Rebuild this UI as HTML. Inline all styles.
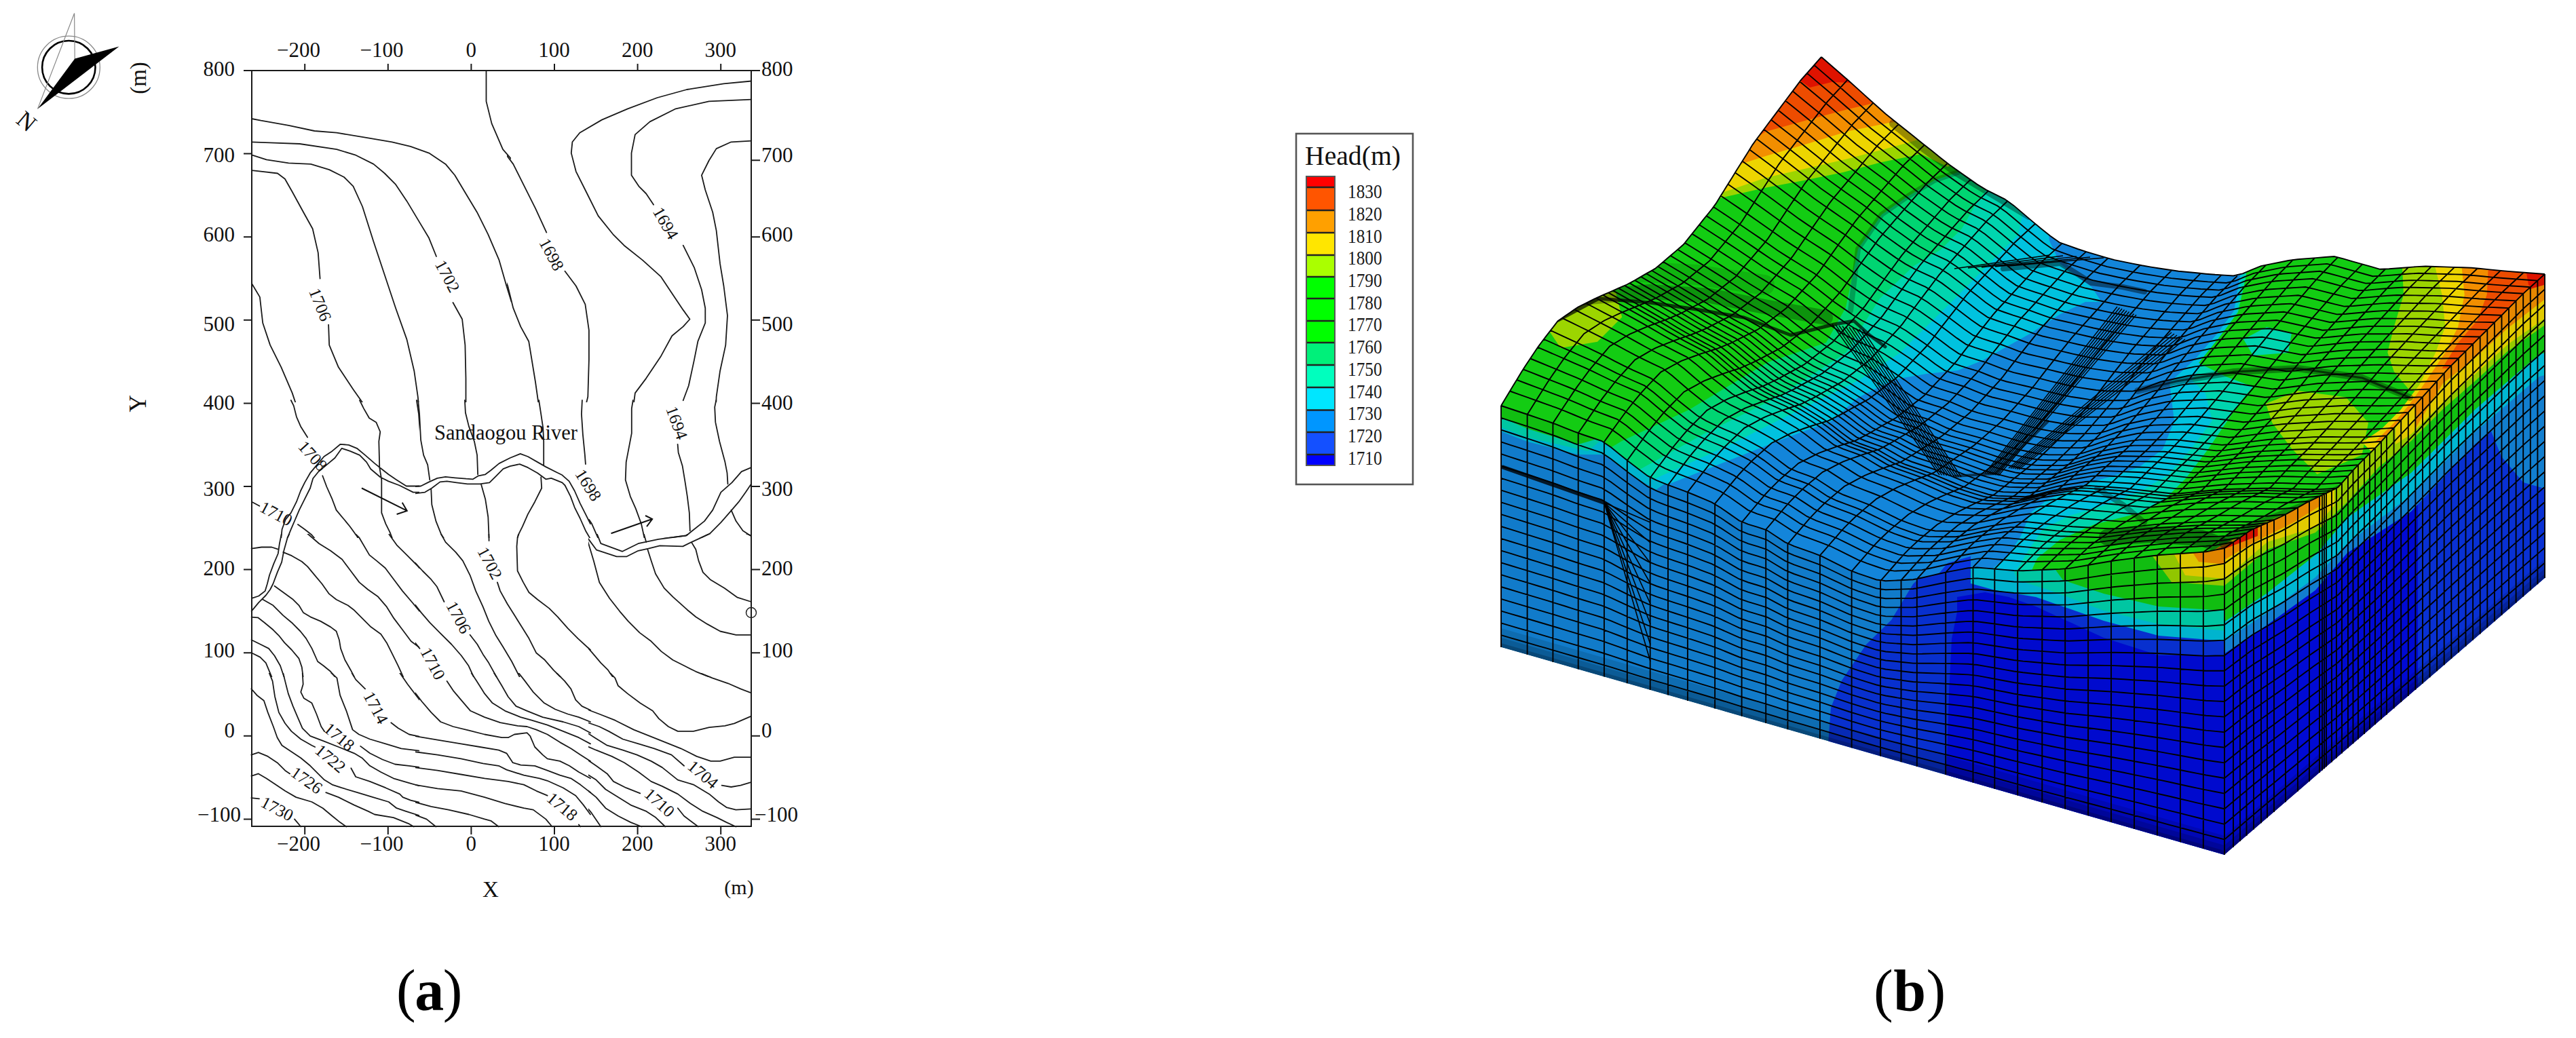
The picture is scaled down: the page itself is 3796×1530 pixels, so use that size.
<!DOCTYPE html>
<html><head><meta charset="utf-8"><style>
html,body{margin:0;padding:0;background:#fff;}
svg{display:block;}
</style></head><body>
<svg width="3796" height="1530" viewBox="0 0 3796 1530">
<rect width="3796" height="1530" fill="#fff"/>
<defs><clipPath id="c0"><rect x="357" y="92" width="396" height="501"/></clipPath><clipPath id="c1"><rect x="747" y="92" width="396" height="501"/></clipPath><clipPath id="c2"><rect x="357" y="587" width="261" height="206"/></clipPath><clipPath id="c3"><rect x="612" y="587" width="261" height="206"/></clipPath><clipPath id="c4"><rect x="867" y="587" width="276" height="206"/></clipPath><clipPath id="c5"><rect x="357" y="787" width="261" height="211"/></clipPath><clipPath id="c6"><rect x="612" y="787" width="261" height="211"/></clipPath><clipPath id="c7"><rect x="867" y="787" width="276" height="211"/></clipPath><clipPath id="c8"><rect x="357" y="992" width="261" height="241"/></clipPath><clipPath id="c9"><rect x="612" y="992" width="261" height="241"/></clipPath><clipPath id="c10"><rect x="867" y="992" width="276" height="241"/></clipPath></defs>
<g fill="none" stroke="#1a1a1a" stroke-width="1.8" stroke-linejoin="round" stroke-linecap="round">
<path clip-path="url(#c0)" d="M370.9 175 L384.5 177.7 L425.3 184.8 L463.4 193 L496.1 195.7 L539.6 202.8 L577.7 209.3 L604.9 215.8 L632.1 225.6 L656.6 241.9 L670.2 258.3 L686.5 285.5 L702.9 312.7 L719.2 345.3 L735.5 383.4 L746.4 421.5 L760 465.1 M370.9 209.3 L398.1 210.4 L441.6 212 L496.1 220.2 L523.3 228.3 L550.5 241.9 L566.8 255.5 L583.1 271.9 L599.5 296.4 L615.8 323.6 L632.1 350.8 L643 378 M667.5 446 L681.1 470.5 L685.4 508.6 L686.5 557.6 L686.5 606.6 L697.4 639.2 L702.9 659.9 M370.9 228.3 L392.7 235.4 L425.3 240.3 L458 241.9 L485.2 250.1 L506.9 261 L520.5 274.6 L534.1 304.5 L550.5 356.2 L566.8 405.2 L583.1 454.2 L599.5 500.4 L610.3 546.7 L615.8 584.8 L621.2 639.2 L623.9 659.9 M370.9 251.2 L409 255.5 L419.9 263.7 L430.7 282.8 L447.1 312.7 L460.7 337.2 L468.8 372.6 L471.6 410.6 M484.1 478.7 L485.2 508.6 L498.8 541.3 L520.5 573.9 L539.6 601.1 L555.9 622.9 L558.6 644.7 L558.6 659.9 M370.9 417.7 L382.9 437.9 L387.2 476 L398.1 508.6 L414.4 541.3 L430.7 579.4 L441.6 612 L455.2 644.7 L463.4 659.9 M716.5 104.8 L716.5 149.4 L724.6 182.1 L741 220.2 L760 241.9"/>
<path clip-path="url(#c1)" d="M740 220.2 L756.3 241.9 L772.7 274.6 L789 307.2 L805.3 342.6 M832.5 399.8 L848.8 421.5 L862.4 448.7 L867.9 486.8 L867.9 530.4 L866.3 584.8 L859.7 612 L857 659.9 M740 399.8 L748.2 421.5 L756.3 454.2 L767.2 481.4 L779.2 503.2 L789 563 L794.4 601.1 L798.2 639.2 L799.9 659.9 M1107.3 119.5 L1066.5 123.3 L1012.1 132 L968.6 144 L925 160.3 L886.9 176.6 L854.3 195.7 L843.4 209.3 L841.8 225.6 L848.8 252.8 L865.2 285.5 L881.5 318.1 L903.3 345.3 L919.6 361.7 L946.8 383.4 L974 407.9 L990.3 432.4 L1006.7 456.9 L1016.5 470.5 L1006.7 481.4 L990.3 495 L974 524.9 L952.2 557.6 L935.9 579.4 L931.6 612 L927.8 659.9 M1107.3 146.7 L1044.8 149.4 L995.8 160.3 L957.7 179.4 L935.9 198.4 L930.5 225.6 L930.5 258.3 L941.4 274.6 L952.2 285.5 L963.1 301.8 M1006.7 361.7 L1023 394.3 L1033.9 427 L1039.3 454.2 L1039.3 476 L1028.4 503.2 L1023 530.4 L1014.8 568.5 L1006.7 590.2 M1107.3 207.7 L1077.4 209.3 L1055.6 219.1 L1044.8 236.5 L1033.9 258.3 L1039.3 280 L1050.2 312.7 L1055.6 339.9 L1061.1 388.9 L1066.5 421.5 L1072 465.1 L1069.3 508.6 L1061.1 546.7 L1055.6 584.8 L1054.6 612 L1061.1 659.9"/>
<path clip-path="url(#c2)" d="M413.6 800 L415.6 780.2 L420.7 766 L428.8 755.9 L436.9 739.7 L443 723.5 L449 711.4 L457.1 697.2 L467.2 685.1 L477.4 673 L489.5 664.9 L501.6 654.8 L513.8 655.8 L525.9 660.8 L538.1 670.9 L552.2 683.1 L562.3 691.2 L572.5 699.3 L584.6 707.4 L598.8 716.5 L620 716.5 M420.7 800 L428.8 780.2 L434.9 766 L440.9 751.9 L449 735.7 L457.1 719.5 L461.2 705.3 L469.3 695.2 L481.4 685.1 L493.5 675 L503.7 660.8 L515.8 664.9 L530 670.9 L540.1 681.1 L546.2 691.2 L560.3 703.3 L572.5 709.4 L588.7 715.5 L608.9 725.6 L620 725.6 M428.8 590 L432.8 598.1 L436.9 614.3 L443 628.4 L453.1 644.6 M475.3 701.3 L481.4 717.5 L489.5 735.7 L495.6 751.9 L505.7 764 L515.8 776.2 L525.9 790.3 L532 800 M371.1 739.7 L382.3 745.8 M438.9 773.1 L449 780.2 L459.2 788.3 L469.3 800 M530 590 L536 602.1 L544.1 616.3 L554.3 622.4 L560.3 636.5 L558.3 650.7 L559.3 689.2 L562.3 707.4 L562.3 755.9 L568.4 772.1 L574.5 784.3 L580.6 800 M613.9 590 L617 610.2 L620 650.7"/>
<path clip-path="url(#c3)" d="M610 717.1 L620.1 716.5 L632.3 710.4 L644.4 704.9 L656.5 702.9 L670.7 704.3 L686.9 705.7 L697 706.3 L705.1 701.3 L715.2 699.3 L723.3 693.2 L735.5 683.1 L751.6 675 L766.8 668.9 L777.9 673 L792.1 681.1 L804.3 688.1 L820.4 696.2 L828.5 700.3 L838.7 709.4 L846.7 723.5 L854.8 741.8 L862.9 757.9 L870 772.1 M610 727.6 L626.2 725.6 L636.3 719.5 L648.4 710.4 L658.6 709.4 L672.7 711.4 L688.9 713.4 L707.1 713.4 L721.3 711.4 L731.4 701.3 L741.5 691.2 L751.6 687.1 L765.8 684.1 L777.9 689.2 L792.1 697.2 L804.3 706.3 L812.3 704.9 L828.5 711.4 L832.6 715.5 L840.7 731.6 L846.7 747.8 L854.8 764 L862.9 782.2 L870 794.4 M616.1 590 L618.1 610.2 L620.1 648.7 L624.2 670.9 L630.2 685.1 L633.3 707.4 M635.3 721.5 L636.3 743.8 L642.4 768.1 L650.5 788.3 L658.6 800 M684.9 590 L685.9 608.2 L690.9 628.4 L699 650.7 L703.1 670.9 L704.1 699.3 M709.2 714.4 L715.2 735.7 L719.3 762 L720.9 800 M794.1 590 L797.2 610.2 L800.2 630.5 L801.2 650.7 L801.2 685.1 M797.2 703.3 L798.2 719.5 L788.1 739.7 L777.9 757.9 L769.9 776.2 L763.8 788.3 L760.7 800 M857.9 590 L856.9 610.2 L858.9 640.6 L861.9 670.9 L862.9 684.1"/>
<path clip-path="url(#c4)" d="M932.8 590 L930.8 602.1 L930.8 638.6 L922.7 681.1 L921.7 707.4 L928.8 731.6 L936.9 749.9 L945 772.1 L951.1 800 M998.6 654.8 L999.6 666.9 L1005.7 687.1 L1009.7 711.4 L1012.8 731.6 L1015.8 755.9 L1016.8 782.2 M1055.3 590 L1053.2 600.1 L1054.3 622.4 L1060.3 650.7 L1068.4 681.1 L1071.5 697.2 L1072.5 713.4 M1077.5 751.9 L1084.6 768.1 L1094.7 782.2 L1106.9 790.3 M868.1 766 L872.1 772.1 L884.3 800 M951.1 798.4 L973.3 794.4 L1011.8 789.3 L1017.8 784.3 L1038.1 768.1 L1050.2 751.9 L1062.3 725.6 L1078.5 711.4 L1092.7 695.2 L1106.9 689.2 M1017.8 800 L1046.2 786.3 L1062.3 770.1 L1076.5 753.9 L1088.7 739.7 L1098.8 725.6 L1106.9 713.4"/>
<path clip-path="url(#c5)" d="M416.2 780 L411.9 801.2 L409.8 816 L403.4 830.9 L397.1 847.8 L393.9 860.5 L390.7 871.1 L381.2 878.5 L371.7 881.7 M429.9 780 L423.6 792.7 L418.3 811.8 L415.1 828.7 L408.7 843.6 L402.4 860.5 L398.1 869 L391.8 877.5 L381.2 888.1 L370.6 900.8 M370.6 808.6 L385.4 806.5 L400.3 806.5 L409.8 809.7 M417.2 813.9 L429.9 819.2 L444.8 827.7 L453.2 835.1 L463.8 847.8 L474.4 860.5 L485 875.4 L495.6 883.8 L512.6 892.3 L521.1 898.7 L533.8 911.4 L546.5 924.1 L561.3 934.7 L569.8 947.4 L578.3 964.4 L586.7 981.3 L595.2 1000 M404.5 863.7 L432 883.8 L440.5 892.3 L446.9 902.9 L457.5 909.3 L472.3 915.6 L487.1 924.1 L495.6 930.5 L499.9 943.2 L502 955.9 L508.3 972.8 L516.8 987.7 L523.2 1000 M387.5 883.8 L402.4 892.3 L417.2 907.1 L429.9 917.7 L442.6 930.5 L451.1 941.1 L459.6 955.9 L468.1 975 L476.6 981.3 L487.1 989.8 L495.6 1000 M370.6 909.7 L380.1 910.3 L389.7 917.7 L402.4 928.3 L410.9 936.8 L419.3 947.4 L429.9 958 L440.5 970.7 L444.8 983.4 L446.9 1000 M370.6 943.2 L383.3 949.5 L396 955.9 L404.5 966.5 L413 981.3 L419.3 1000 M370.6 962.2 L383.3 968.6 L391.8 977.1 L397.1 989.8 L401.3 1000 M444.8 780 L455.4 788.5 L470.2 801.2 L487.1 811.8 L504.1 824.5 L516.8 841.5 L529.5 858.4 L542.2 869 L557.1 879.6 L569.8 894.4 L580.4 911.4 L593.1 928.3 L605.8 945.3 L620 955.9 M516.8 780 L529.5 792.7 L544.4 818.1 L555 826.6 L567.7 837.2 L580.4 854.2 L593.1 871.1 L605.8 886 L620 902.9 M569.8 780 L574 788.5 L584.6 803.3 L599.5 818.1 L614.3 833 L620 839.3"/>
<path clip-path="url(#c6)" d="M610 827.7 L622.7 841.5 L635.4 854.2 L643.9 864.8 L654.5 887 M692.6 935.8 L703.2 949.5 L711.7 964.4 L720.2 977.1 L732.9 1000 M610 889.1 L620.6 902.9 L633.3 917.7 L648.1 932.6 L665.1 949.5 L679.9 966.5 L690.5 981.3 L699 1000 M610 945.3 L618.5 955.9 M646 780 L656.6 799.1 L671.5 813.9 L682 826.6 L692.6 847.8 L701.1 871.1 L711.7 894.4 L720.2 915.6 L730.8 936.8 L741.4 953.8 L754.1 975 L766.8 1000 M720.2 780 L720.6 797 M732.9 858.4 L737.1 871.1 L747.7 890.2 L758.3 907.1 L768.9 924.1 L779.5 941.1 L790.1 962.2 L802.8 972.8 L815.6 987.7 L828.3 1000 M766.8 780 L762.6 792.7 L761.5 805.4 L762.6 841.5 L771.1 858.4 L779.5 873.2 L792.2 883.8 L809.2 896.6 L821.9 909.3 L836.7 926.2 L851.6 941.1 L870 958"/>
<path clip-path="url(#c7)" d="M877 780 L885.4 801.2 L917.2 812.8 L940.5 801.2 L970.2 794.8 L1010.5 789.5 L1021.1 782.1 L1027.4 780 M864.2 790.6 L879.1 810.7 L908.7 820.3 L923.6 820.3 L940.5 811.8 L955.4 808.6 L972.3 804.4 L1006.2 805.4 L1018.9 799.1 L1046.5 786.4 L1052.8 780 M862.1 784.2 L868.5 805.4 L874.8 826.6 L883.3 858.4 L898.1 881.7 L913 900.8 L925.7 915.6 L942.6 932.6 L959.6 945.3 L974.4 960.1 L991.4 972.8 L1008.3 981.3 L1025.3 989.8 L1050.7 1000 M946.9 780 L952.2 799.1 M954.3 809.7 L959.6 826.6 L966 845.7 L978.7 866.9 L991.4 879.6 L1012.6 898.7 L1025.3 909.3 L1042.2 919.9 L1061.3 930.5 L1084.6 935.8 L1106.9 935.8 M1018.9 799.1 L1025.3 809.7 L1029.5 826.6 L1035.9 843.6 L1046.5 854.2 L1067.7 866.9 L1086.7 880.7 L1106.9 887 M860 947.4 L872.7 962.2 L885.4 977.1 L896 987.7 L904.5 1000 M1093.1 780 L1099.5 786.4 L1106.9 789.5"/>
<path clip-path="url(#c8)" d="M370.4 1015.4 L378.5 1024.7 L388.9 1032.8 L394.7 1050.1 L402.8 1071 L408.6 1087.2 L415.5 1098.7 L429.4 1108 L443.3 1117.2 L457.2 1128.8 L468.7 1140.4 L478 1149.6 L489.5 1156.6 L503.4 1161.2 L526.6 1168.1 L549.7 1175.1 L572.8 1182 L584.4 1191.2 L598.3 1195.9 L620 1202.8 M370.4 1112.6 L380.8 1109.1 L394.7 1114.9 L408.6 1124.2 L420.1 1135.7 L427.1 1140.4 M480.3 1168.1 L498.8 1175.1 L521.9 1186.6 L542.7 1195.9 L552 1200.5 L579.8 1205.1 L602.9 1214.4 L609.8 1218.5 M370.4 1143.8 L380.8 1140.4 L392.4 1147.3 L406.3 1156.6 L420.1 1165.8 L436.3 1175.1 L459.5 1182 L475.7 1191.2 L489.5 1202.8 L501.1 1212.1 L510.4 1218.5 M370.4 1176.2 L382 1177.4 M434 1207.4 L443.3 1218.5 M395.9 990 L401.6 1003.9 L405.1 1027 L410.9 1050.1 L420.1 1066.3 L429.4 1077.9 L443.3 1089.5 L459.5 1098.7 L464.1 1101 M517.3 1132.3 L524.2 1145 L545.1 1151.9 L568.2 1161.2 L589 1170.4 L593.6 1175.1 L605.2 1179.7 L620 1183.2 M416.7 990 L420.1 1003.9 L424.8 1022.4 L431.7 1040.9 L438.6 1057.1 L445.6 1073.3 L457.2 1084.8 L475.7 1091.8 L498.8 1101 L521.9 1110.3 L533.5 1117.2 L545.1 1128.8 L561.2 1138 L579.8 1147.3 L602.9 1154.2 L620 1158.9 M445.6 990 L446.7 1008.5 L443.3 1020.1 L447.9 1029.3 L459.5 1036.3 L466.4 1052.5 L473.3 1071 L478 1077.9 M531.2 1099.9 L545.1 1110.3 L563.6 1119.5 L582.1 1126.5 L602.9 1128.8 L620 1131.1 M486.1 990 L496.5 999.3 L501.1 1024.7 L510.4 1047.8 L519.6 1075.6 L528.9 1082.5 L545.1 1089.5 L568.2 1096.4 L591.3 1103.3 L620 1106.8 M517.3 990 L524.2 1001.6 L538.1 1015.4 M576.3 1065.2 L586.7 1073.3 L602.9 1082.5 L620 1086 M587.9 990 L600.6 1008.5 L620 1034"/>
<path clip-path="url(#c9)" d="M610 1018.9 L621.6 1034 L635.4 1050.1 L649.3 1064 L667.8 1071 L691 1076.7 L714.1 1082.5 L739.5 1087.2 L748.8 1087.2 L758 1082.5 L776.6 1080.2 L781.2 1084.8 L788.1 1101 L799.7 1112.6 L806.6 1118.4 L825.1 1121.9 L839 1128.8 L852.9 1138 L870 1147.3 M610 1084.8 L644.7 1090.6 L679.4 1096.4 L707.2 1101 L734.9 1105.7 L746.5 1110.3 L755.7 1124.2 L767.3 1127.6 L788.1 1128.8 L806.6 1135.7 L825.1 1142.7 L841.3 1147.3 L855.2 1156.6 L870 1168.1 M610 1108 L644.7 1112.6 L679.4 1118.4 L711.8 1125.3 L734.9 1128.8 L746.5 1134.6 L771.9 1142.7 L795.1 1147.3 L806.6 1150.8 L829.8 1161.2 L848.3 1172.7 L859.8 1186.6 L870 1200.5 M610 1131.1 L644.7 1135.7 L679.4 1141.5 L714.1 1147.3 L748.8 1151.9 L771.9 1156.6 L790.4 1165.8 L806.6 1172.7 M852.9 1215.5 L855.2 1218.5 M610 1156.6 L644.7 1162.3 L679.4 1165.8 L714.1 1175.1 L744.2 1184.3 L771.9 1191.2 L785.8 1193.6 L804.3 1207.4 L813.6 1218.5 M610 1182 L635.4 1188.9 L660.9 1193.6 L691 1200.5 L714.1 1207.4 L723.3 1209.8 L734.9 1218.5 M610 1200.5 L628.5 1207.4 L642.4 1218.5 M658.6 1003.9 L667.8 1017.8 L679.4 1031.6 L693.3 1047.8 L714.1 1057.1 L737.2 1065.2 L762.7 1069.8 L776.6 1071 L790.4 1075.6 L806.6 1082.5 L825.1 1094.1 L841.3 1103.3 L855.2 1112.6 L870 1121.9 M693.3 990 L702.5 1003.9 L714.1 1022.4 L725.7 1036.3 L744.2 1047.8 L767.3 1057.1 L783.5 1061.7 L806.6 1068.6 L829.8 1077.9 L852.9 1087.2 L870 1096.4 M726.8 990 L732.6 999.3 L739.5 1010.8 L748.8 1027 L760.4 1040.9 L776.6 1047.8 L799.7 1057.1 L829.8 1064 L852.9 1071 L870 1080.2 M762.7 990 L771.9 1001.6 L785.8 1020.1 L802 1036.3 L818.2 1045.5 L836.7 1052.5 L852.9 1057.1 L870 1064 M818.2 990 L832.1 1003.9 L841.3 1015.4 L848.3 1031.6 L857.5 1040.9 L870 1046.7"/>
<path clip-path="url(#c10)" d="M897 990 L906.3 999.3 L910.9 1010.8 L924.8 1022.4 L943.3 1036.3 L961.8 1047.8 L971 1059.4 L984.9 1071 L998.8 1077.9 L1021.9 1077.9 L1045.1 1072.1 L1068.2 1069.8 L1082.1 1066.3 L1106.4 1055.9 M1026.6 990 L1049.7 999.3 L1072.8 1007.3 L1091.3 1015.4 L1106.4 1021.2 M860 1042 L864.6 1045.5 L883.1 1052.5 L906.3 1061.7 L934 1075.6 L957.2 1084.8 L980.3 1094.1 L1003.4 1103.3 L1026.6 1114.9 L1047.4 1121.9 L1061.2 1121.9 L1082.1 1116.1 L1106.4 1116.1 M860 1062.9 L883.1 1071 L897 1077.9 L917.8 1089.5 L941 1096.4 L964.1 1103.3 L989.5 1112.6 L1008 1128.8 M1063.6 1157.7 L1077.4 1160 L1091.3 1157.7 L1106.4 1153.1 M860 1076.7 L876.2 1087.2 L894.7 1098.7 L917.8 1105.7 L938.6 1112.6 L959.5 1121.9 L975.7 1131.1 L998.8 1149.6 L1021.9 1156.6 L1045.1 1170.4 L1058.9 1182 L1070.5 1190.1 L1084.4 1193.6 L1106.4 1192.4 M860 1097.6 L878.5 1105.7 L901.6 1114.9 L920.1 1124.2 L941 1138 L959.5 1151.9 L975.7 1158.9 L998.8 1170.4 L1017.3 1184.3 L1035.8 1195.9 L1056.6 1205.1 L1070.5 1212.1 L1084.4 1218.5 M860 1116.1 L878.5 1128.8 L894.7 1140.4 L904 1151.9 L922.5 1161.2 L943.3 1169.3 M998.8 1191.2 L1008 1202.8 L1026.6 1216.7 L1028.9 1218.5 M860 1138 L878.5 1149.6 L892.4 1163.5 L910.9 1175.1 L929.4 1186.6 L952.5 1195.9 L966.4 1205.1 L980.3 1218.5 M860 1160 L878.5 1175.1 L892.4 1191.2 L910.9 1202.8 L929.4 1212.1 L945.6 1218.5 M860 1184.3 L871.6 1198.2 L885.4 1218.5"/>
</g>
<rect x="371" y="104" width="736" height="1114" fill="none" stroke="#1a1a1a" stroke-width="2"/>
<path d="M359 1207.4 H371 M1107 1207.4 H1120 M359 1084.8 H371 M1107 1084.8 H1120 M359 962.2 H371 M1107 962.2 H1120 M359 839.6 H371 M1107 839.6 H1120 M359 717 H371 M1107 717 H1120 M359 594.4 H371 M1107 594.4 H1120 M359 471.8 H371 M1107 471.8 H1120 M359 349.2 H371 M1107 349.2 H1120 M359 226.6 H371 M1107 236.2 H1120 M359 104 H371 M1107 104 H1120 M449.2 94 V104 M449.2 1218 V1230 M571.8 94 V104 M571.8 1218 V1230 M694.4 94 V104 M694.4 1218 V1230 M817 94 V104 M817 1218 V1230 M939.6 94 V104 M939.6 1218 V1230 M1062.2 94 V104 M1062.2 1218 V1230" stroke="#1a1a1a" stroke-width="2" fill="none"/>
<g font-family="Liberation Serif" fill="#111"><text x="472" y="84" text-anchor="end" font-size="31">&#8722;200</text><text x="472" y="1254" text-anchor="end" font-size="31">&#8722;200</text><text x="594.6" y="84" text-anchor="end" font-size="31">&#8722;100</text><text x="594.6" y="1254" text-anchor="end" font-size="31">&#8722;100</text><text x="702" y="84" text-anchor="end" font-size="31">0</text><text x="702" y="1254" text-anchor="end" font-size="31">0</text><text x="839.8" y="84" text-anchor="end" font-size="31">100</text><text x="839.8" y="1254" text-anchor="end" font-size="31">100</text><text x="962.4" y="84" text-anchor="end" font-size="31">200</text><text x="962.4" y="1254" text-anchor="end" font-size="31">200</text><text x="1085" y="84" text-anchor="end" font-size="31">300</text><text x="1085" y="1254" text-anchor="end" font-size="31">300</text><text x="355" y="1211" text-anchor="end" font-size="31">&#8722;100</text><text x="1112" y="1211" text-anchor="start" font-size="31">&#8722;100</text><text x="346" y="1087.2" text-anchor="end" font-size="31">0</text><text x="1122" y="1087.2" text-anchor="start" font-size="31">0</text><text x="346" y="969" text-anchor="end" font-size="31">100</text><text x="1122" y="969" text-anchor="start" font-size="31">100</text><text x="346" y="847.7" text-anchor="end" font-size="31">200</text><text x="1122" y="847.7" text-anchor="start" font-size="31">200</text><text x="346" y="730.6" text-anchor="end" font-size="31">300</text><text x="1122" y="730.6" text-anchor="start" font-size="31">300</text><text x="346" y="603.8" text-anchor="end" font-size="31">400</text><text x="1122" y="603.8" text-anchor="start" font-size="31">400</text><text x="346" y="488" text-anchor="end" font-size="31">500</text><text x="1122" y="488" text-anchor="start" font-size="31">500</text><text x="346" y="355.5" text-anchor="end" font-size="31">600</text><text x="1122" y="355.5" text-anchor="start" font-size="31">600</text><text x="346" y="239.3" text-anchor="end" font-size="31">700</text><text x="1122" y="239.3" text-anchor="start" font-size="31">700</text><text x="346" y="112" text-anchor="end" font-size="31">800</text><text x="1122" y="112" text-anchor="start" font-size="31">800</text></g>
<g font-family="Liberation Serif" fill="#111"><text x="202.5" y="595" font-size="35.5" text-anchor="middle" transform="rotate(-90 202.5 595)" dy="12">Y</text><text x="206" y="115" font-size="33" text-anchor="middle" transform="rotate(-90 206 115)" dy="9">(m)</text><text x="723" y="1322" font-size="33" text-anchor="middle">X</text><text x="1089" y="1318" font-size="30" text-anchor="middle">(m)</text><text x="640" y="648" font-size="30.5">Sandaogou River</text></g>
<g font-family="Liberation Serif" font-size="25" fill="#111"><text x="0" y="0" dy="8.5" transform="translate(472 449) rotate(68)" text-anchor="middle">1706</text><text x="0" y="0" dy="8.5" transform="translate(659.5 407) rotate(62)" text-anchor="middle">1702</text><text x="0" y="0" dy="8.5" transform="translate(813 375) rotate(62)" text-anchor="middle">1698</text><text x="0" y="0" dy="8.5" transform="translate(981 329) rotate(60)" text-anchor="middle">1694</text><text x="0" y="0" dy="8.5" transform="translate(997.5 623) rotate(70)" text-anchor="middle">1694</text><text x="0" y="0" dy="8.5" transform="translate(461 672) rotate(48)" text-anchor="middle">1708</text><text x="0" y="0" dy="8.5" transform="translate(407 757) rotate(28)" text-anchor="middle">1710</text><text x="0" y="0" dy="8.5" transform="translate(867 715) rotate(58)" text-anchor="middle">1698</text><text x="0" y="0" dy="8.5" transform="translate(722 830) rotate(62)" text-anchor="middle">1702</text><text x="0" y="0" dy="8.5" transform="translate(676 910) rotate(62)" text-anchor="middle">1706</text><text x="0" y="0" dy="8.5" transform="translate(638 978) rotate(62)" text-anchor="middle">1710</text><text x="0" y="0" dy="8.5" transform="translate(554 1043) rotate(62)" text-anchor="middle">1714</text><text x="0" y="0" dy="8.5" transform="translate(500 1086) rotate(40)" text-anchor="middle">1718</text><text x="0" y="0" dy="8.5" transform="translate(487 1118) rotate(40)" text-anchor="middle">1722</text><text x="0" y="0" dy="8.5" transform="translate(452 1150) rotate(35)" text-anchor="middle">1726</text><text x="0" y="0" dy="8.5" transform="translate(408.5 1192) rotate(28)" text-anchor="middle">1730</text><text x="0" y="0" dy="8.5" transform="translate(828.6 1188.7) rotate(40)" text-anchor="middle">1718</text><text x="0" y="0" dy="8.5" transform="translate(972 1183) rotate(42)" text-anchor="middle">1710</text><text x="0" y="0" dy="8.5" transform="translate(1036 1141.5) rotate(40)" text-anchor="middle">1704</text></g>
<path d="M533 719.5 L599.8 752.9 M592.7 740.7 L599.8 752.9 L584.6 758 M900.5 786.3 L961.2 765 M951 760 L961.2 765 L953 776.2" stroke="#111" stroke-width="2" fill="none"/>
<circle cx="1107" cy="903" r="7.5" fill="none" stroke="#222" stroke-width="1.5"/>
<circle cx="101.3" cy="99.2" r="46" fill="none" stroke="#888" stroke-width="1.3"/><circle cx="101.3" cy="99.2" r="39.2" fill="none" stroke="#000" stroke-width="2.6"/><path d="M109.6 19.5 L110.2 86.9 M109.6 19.5 L55.5 160.4" stroke="#888" stroke-width="1.2" fill="none"/><path d="M55.5 160.4 L110.2 86.5 L175.5 68.5 Z" fill="#000"/><text x="0" y="0" transform="translate(39 179) rotate(40)" dy="11.5" text-anchor="middle" font-family="Liberation Serif" font-size="35" fill="#111">N</text>
<rect x="1910" y="197" width="172" height="517" fill="#fff" stroke="#555" stroke-width="2.6"/>
<text x="1923" y="242.5" font-family="Liberation Serif" font-size="40" fill="#111" textLength="141" lengthAdjust="spacingAndGlyphs">Head(m)</text>
<rect x="1925" y="260" width="42" height="16" fill="#ff0000"/>
<rect x="1925" y="276" width="42" height="34" fill="#ff5500"/>
<rect x="1925" y="310" width="42" height="33" fill="#ffa000"/>
<rect x="1925" y="343" width="42" height="33" fill="#ffe600"/>
<rect x="1925" y="376" width="42" height="32" fill="#aaff00"/>
<rect x="1925" y="408" width="42" height="32" fill="#00ff00"/>
<rect x="1925" y="440" width="42" height="33" fill="#00ff00"/>
<rect x="1925" y="473" width="42" height="32" fill="#00ff00"/>
<rect x="1925" y="505" width="42" height="33" fill="#00f07a"/>
<rect x="1925" y="538" width="42" height="33" fill="#00ffbe"/>
<rect x="1925" y="571" width="42" height="33.5" fill="#00e6ff"/>
<rect x="1925" y="604.5" width="42" height="32.5" fill="#0096ff"/>
<rect x="1925" y="637" width="42" height="33" fill="#1450ff"/>
<rect x="1925" y="670" width="42" height="16" fill="#0000ff"/>
<path d="M1925 276 H1967 M1925 310 H1967 M1925 343 H1967 M1925 376 H1967 M1925 408 H1967 M1925 440 H1967 M1925 473 H1967 M1925 505 H1967 M1925 538 H1967 M1925 571 H1967 M1925 604.5 H1967 M1925 637 H1967 M1925 670 H1967" stroke="#222" stroke-width="2.5"/>
<rect x="1925" y="260" width="42" height="426" fill="none" stroke="#555" stroke-width="2"/>
<g font-family="Liberation Serif" font-size="29" fill="#1a1a1a"><text x="1986" y="292.2" textLength="50.5" lengthAdjust="spacingAndGlyphs">1830</text><text x="1986" y="324.9" textLength="50.5" lengthAdjust="spacingAndGlyphs">1820</text><text x="1986" y="357.6" textLength="50.5" lengthAdjust="spacingAndGlyphs">1810</text><text x="1986" y="390.3" textLength="50.5" lengthAdjust="spacingAndGlyphs">1800</text><text x="1986" y="423" textLength="50.5" lengthAdjust="spacingAndGlyphs">1790</text><text x="1986" y="455.7" textLength="50.5" lengthAdjust="spacingAndGlyphs">1780</text><text x="1986" y="488.4" textLength="50.5" lengthAdjust="spacingAndGlyphs">1770</text><text x="1986" y="521.1" textLength="50.5" lengthAdjust="spacingAndGlyphs">1760</text><text x="1986" y="553.8" textLength="50.5" lengthAdjust="spacingAndGlyphs">1750</text><text x="1986" y="586.5" textLength="50.5" lengthAdjust="spacingAndGlyphs">1740</text><text x="1986" y="619.2" textLength="50.5" lengthAdjust="spacingAndGlyphs">1730</text><text x="1986" y="651.9" textLength="50.5" lengthAdjust="spacingAndGlyphs">1720</text><text x="1986" y="684.6" textLength="50.5" lengthAdjust="spacingAndGlyphs">1710</text></g>
<clipPath id="fl"><path d="M2212 598 L2217.4 599.8 L2222.7 601.6 L2228.1 603.4 L2233.4 605.2 L2238.8 606.9 L2244.1 608.7 L2249.5 610.5 L2254.9 612.3 L2260.2 614.1 L2265.6 615.9 L2270.9 617.7 L2276.3 619.5 L2281.6 621.4 L2287 623.2 L2292.4 625.2 L2297.7 627.3 L2303.1 629.4 L2308.4 631.6 L2313.8 633.7 L2319.1 635.8 L2324.5 638 L2329.8 639.8 L2335.2 641.6 L2340.6 643.4 L2345.9 645.2 L2351.3 647 L2356.6 648.8 L2362 650.6 L2367.3 654 L2372.7 658.4 L2378.1 662.7 L2383.4 667.1 L2388.8 671.4 L2394.1 675.8 L2399.5 680 L2404.8 684 L2410.2 688.1 L2415.6 692.1 L2420.9 696.2 L2426.3 700.2 L2431.6 704.2 L2437 706.4 L2442.3 708.5 L2447.7 710.7 L2453.1 712.8 L2458.4 715 L2463.8 716.9 L2469.1 718.9 L2474.5 720.9 L2479.8 722.8 L2485.2 724.8 L2490.6 727 L2495.9 729.2 L2501.3 731.5 L2506.6 733.8 L2512 736 L2517.3 738.3 L2522.7 740.6 L2528.1 743.1 L2533.4 746.8 L2538.8 750.6 L2544.1 754.3 L2549.5 758 L2554.8 761.7 L2560.2 765.5 L2565.5 769.2 L2570.9 771.2 L2576.3 772.8 L2581.6 774.4 L2587 776 L2592.3 777.6 L2597.7 779.2 L2603 781.1 L2608.4 784.6 L2613.8 788.2 L2619.1 791.7 L2624.5 795.2 L2629.8 798.8 L2635.2 802 L2640.5 803.9 L2645.9 805.9 L2651.3 807.8 L2656.6 809.7 L2662 811.6 L2667.3 813.5 L2672.7 815.4 L2678 817.3 L2683.4 819.4 L2688.8 822.1 L2694.1 824.8 L2699.5 827.5 L2704.8 830.1 L2710.2 832.8 L2715.5 835.5 L2720.9 838.2 L2726.3 840.8 L2731.6 843 L2737 844.8 L2742.3 846.7 L2747.7 848.5 L2753 850.3 L2758.4 852.1 L2763.7 854 L2769.1 855.8 L2774.5 856.5 L2779.8 856.2 L2785.2 856 L2790.5 855.7 L2795.9 855.5 L2801.2 855.2 L2806.6 854.9 L2812 854.7 L2817.3 854.4 L2822.7 853.8 L2828 852.5 L2833.4 851.3 L2838.7 850.1 L2844.1 848.9 L2849.5 847.6 L2854.8 846.4 L2860.2 845.2 L2865.5 843.9 L2870.9 842.9 L2876.2 841.8 L2881.6 840.8 L2887 839.8 L2892.3 838.8 L2897.7 837.8 L2903 836.8 L2908.4 836 L2913.7 836.5 L2919.1 836.9 L2924.5 837.4 L2929.8 837.8 L2935.2 838.3 L2940.5 838.7 L2945.9 839.2 L2951.2 839.6 L2956.6 840.1 L2961.9 840.5 L2967.3 841 L2972.7 841.4 L2978 841.3 L2983.4 841.1 L2988.7 840.8 L2994.1 840.6 L2999.4 840.4 L3004.8 840.2 L3010.2 840 L3015.5 839.7 L3020.9 839.5 L3026.2 839.3 L3031.6 839.1 L3036.9 838.8 L3042.3 838.6 L3047.7 838.1 L3053 837.1 L3058.4 836.2 L3063.7 835.3 L3069.1 834.3 L3074.4 833.4 L3079.8 832.4 L3085.2 831.5 L3090.5 830.6 L3095.9 829.6 L3101.2 828.7 L3106.6 827.8 L3111.9 826.8 L3117.3 826.1 L3122.7 825.4 L3128 824.7 L3133.4 824.1 L3138.7 823.4 L3144.1 822.7 L3149.4 822.1 L3154.8 821.4 L3160.2 820.7 L3165.5 820.1 L3170.9 819.4 L3176.2 818.7 L3181.6 818.1 L3186.9 817.8 L3192.3 817.4 L3197.6 817 L3203 816.7 L3208.4 816.3 L3213.7 816 L3219.1 815.6 L3224.4 815.3 L3229.8 814.9 L3235.1 814.6 L3240.5 814.2 L3245.9 813.8 L3251.2 813.2 L3256.6 812.2 L3261.9 811.1 L3267.3 810.1 L3272.6 809 L3278 808 L3278 1260 L2212 954Z"/></clipPath>
<g clip-path="url(#fl)">
<path d="M2212 598 L2217.4 599.8 L2222.7 601.6 L2228.1 603.4 L2233.4 605.2 L2238.8 606.9 L2244.1 608.7 L2249.5 610.5 L2254.9 612.3 L2260.2 614.1 L2265.6 615.9 L2270.9 617.7 L2276.3 619.5 L2281.6 621.4 L2287 623.2 L2292.4 625.2 L2297.7 627.3 L2303.1 629.4 L2308.4 631.6 L2313.8 633.7 L2319.1 635.8 L2324.5 638 L2329.8 639.8 L2335.2 641.6 L2340.6 643.4 L2345.9 645.2 L2351.3 647 L2356.6 648.8 L2362 650.6 L2367.3 654 L2372.7 658.4 L2378.1 662.7 L2383.4 667.1 L2388.8 671.4 L2394.1 675.8 L2399.5 680 L2404.8 684 L2410.2 688.1 L2415.6 692.1 L2420.9 696.2 L2426.3 700.2 L2431.6 704.2 L2437 706.4 L2442.3 708.5 L2447.7 710.7 L2453.1 712.8 L2458.4 715 L2463.8 716.9 L2469.1 718.9 L2474.5 720.9 L2479.8 722.8 L2485.2 724.8 L2490.6 727 L2495.9 729.2 L2501.3 731.5 L2506.6 733.8 L2512 736 L2517.3 738.3 L2522.7 740.6 L2528.1 743.1 L2533.4 746.8 L2538.8 750.6 L2544.1 754.3 L2549.5 758 L2554.8 761.7 L2560.2 765.5 L2565.5 769.2 L2570.9 771.2 L2576.3 772.8 L2581.6 774.4 L2587 776 L2592.3 777.6 L2597.7 779.2 L2603 781.1 L2608.4 784.6 L2613.8 788.2 L2619.1 791.7 L2624.5 795.2 L2629.8 798.8 L2635.2 802 L2640.5 803.9 L2645.9 805.9 L2651.3 807.8 L2656.6 809.7 L2662 811.6 L2667.3 813.5 L2672.7 815.4 L2678 817.3 L2683.4 819.4 L2688.8 822.1 L2694.1 824.8 L2699.5 827.5 L2704.8 830.1 L2710.2 832.8 L2715.5 835.5 L2720.9 838.2 L2726.3 840.8 L2731.6 843 L2737 844.8 L2742.3 846.7 L2747.7 848.5 L2753 850.3 L2758.4 852.1 L2763.7 854 L2769.1 855.8 L2774.5 856.5 L2779.8 856.2 L2785.2 856 L2790.5 855.7 L2795.9 855.5 L2801.2 855.2 L2806.6 854.9 L2812 854.7 L2817.3 854.4 L2822.7 853.8 L2828 852.5 L2833.4 851.3 L2838.7 850.1 L2844.1 848.9 L2849.5 847.6 L2854.8 846.4 L2860.2 845.2 L2865.5 843.9 L2870.9 842.9 L2876.2 841.8 L2881.6 840.8 L2887 839.8 L2892.3 838.8 L2897.7 837.8 L2903 836.8 L2908.4 836 L2913.7 836.5 L2919.1 836.9 L2924.5 837.4 L2929.8 837.8 L2935.2 838.3 L2940.5 838.7 L2945.9 839.2 L2951.2 839.6 L2956.6 840.1 L2961.9 840.5 L2967.3 841 L2972.7 841.4 L2978 841.3 L2983.4 841.1 L2988.7 840.8 L2994.1 840.6 L2999.4 840.4 L3004.8 840.2 L3010.2 840 L3015.5 839.7 L3020.9 839.5 L3026.2 839.3 L3031.6 839.1 L3036.9 838.8 L3042.3 838.6 L3047.7 838.1 L3053 837.1 L3058.4 836.2 L3063.7 835.3 L3069.1 834.3 L3074.4 833.4 L3079.8 832.4 L3085.2 831.5 L3090.5 830.6 L3095.9 829.6 L3101.2 828.7 L3106.6 827.8 L3111.9 826.8 L3117.3 826.1 L3122.7 825.4 L3128 824.7 L3133.4 824.1 L3138.7 823.4 L3144.1 822.7 L3149.4 822.1 L3154.8 821.4 L3160.2 820.7 L3165.5 820.1 L3170.9 819.4 L3176.2 818.7 L3181.6 818.1 L3186.9 817.8 L3192.3 817.4 L3197.6 817 L3203 816.7 L3208.4 816.3 L3213.7 816 L3219.1 815.6 L3224.4 815.3 L3229.8 814.9 L3235.1 814.6 L3240.5 814.2 L3245.9 813.8 L3251.2 813.2 L3256.6 812.2 L3261.9 811.1 L3267.3 810.1 L3272.6 809 L3278 808 L3278 1260 L2212 954Z" fill="#117bca"/>
<path d="M2851 800 L2851 829 L2819 861 L2787 914 L2750 950 L2714 1003 L2698 1043 L2694 1096 L2694 1300 L3300 1300 L3300 800Z" fill="#0830ce"/>
<path d="M2925 873 L2884 880 L2884 902 L2876 942 L2872 1023 L2868 1144 L2868 1300 L3300 1300 L3300 966 L3181 966 L3100 940 L3000 894 L2960 880Z" fill="#000ace"/>
<path d="M2904 800 L3300 790 L3280 945 L3181 937 L3100 915 L3000 880 L2940 870 L2904 860Z" fill="#00b4ce"/>
<path d="M2950 800 L3300 790 L3280 930 L3181 920 L3100 900 L3020 870 L2973 855Z" fill="#00c6a2"/>
<path d="M3000 800 L3300 790 L3280 900 L3181 894 L3100 875 L3040 855Z" fill="#11bd11"/>
<path d="M3150 790 L3300 790 L3300 865 L3200 858Z" fill="#91c600"/>
<path d="M3190 790 L3300 790 L3300 855 L3220 848Z" fill="#dcc600"/>
<path d="M3215 790 L3300 790 L3300 834 L3240 828Z" fill="#e08400"/>
<path d="M2200 580 L2330 625 L2364 640 L2398 670 L2432 700 L2458 710 L2440 722 L2398 696 L2364 670 L2326 670 L2251 651 L2212 636Z" fill="#00b4ce"/>
<path d="M2200 580 L2330 625 L2364 645 L2340 665 L2251 645 L2212 630Z" fill="#00c6a2"/>
<path d="M2200 580 L2330 625 L2350 648 L2326 655 L2251 632 L2212 615Z" fill="#11bd11"/>
</g>
<clipPath id="fr"><path d="M3278 808 L3280.4 806.4 L3282.7 804.7 L3285.1 803.1 L3287.5 801.5 L3289.9 799.9 L3292.2 798.2 L3294.6 796.6 L3297 795 L3299.3 793.4 L3301.7 791.7 L3304.1 790.1 L3306.5 788.5 L3308.8 786.9 L3311.2 785.2 L3313.6 783.6 L3315.9 782 L3318.3 780.6 L3320.7 779.6 L3323.1 778.5 L3325.4 777.5 L3327.8 776.5 L3330.2 775.4 L3332.6 774.4 L3334.9 773.3 L3337.3 772.3 L3339.7 771.2 L3342 770.2 L3344.4 769.1 L3346.8 768.1 L3349.2 767 L3351.5 766 L3353.9 765 L3356.3 763.9 L3358.6 762.9 L3361 761.8 L3363.4 760.8 L3365.8 759.6 L3368.1 758.2 L3370.5 756.9 L3372.9 755.6 L3375.2 754.2 L3377.6 752.9 L3380 751.6 L3382.4 750.2 L3384.7 748.9 L3387.1 747.6 L3389.5 746.2 L3391.8 744.9 L3394.2 743.6 L3396.6 742.2 L3399 740.9 L3401.3 739.6 L3403.7 738.5 L3406.1 737.4 L3408.5 736.2 L3410.8 735.1 L3413.2 734 L3415.6 732.8 L3417.9 731.7 L3420.3 730.6 L3422.7 729.4 L3425.1 728.3 L3427.4 727.2 L3429.8 726 L3432.2 724.9 L3434.5 723.8 L3436.9 722.7 L3439.3 721.5 L3441.7 720.4 L3444 719.3 L3446.4 717 L3448.8 714.3 L3451.1 711.6 L3453.5 709 L3455.9 706.3 L3458.3 703.6 L3460.6 701 L3463 698.3 L3465.4 695.6 L3467.7 693 L3470.1 690.3 L3472.5 687.8 L3474.9 685.4 L3477.2 683 L3479.6 680.7 L3482 678.3 L3484.4 676 L3486.7 673.6 L3489.1 671.2 L3491.5 668.9 L3493.8 666.5 L3496.2 664.2 L3498.6 661.8 L3501 659.4 L3503.3 657 L3505.7 654.4 L3508.1 651.8 L3510.4 649.3 L3512.8 646.7 L3515.2 644.1 L3517.6 641.6 L3519.9 639 L3522.3 636.4 L3524.7 633.9 L3527 631.3 L3529.4 628.7 L3531.8 626.2 L3534.2 623.6 L3536.5 621 L3538.9 618.5 L3541.3 615.9 L3543.6 613.4 L3546 610.8 L3548.4 608.3 L3550.8 605.7 L3553.1 603.2 L3555.5 600.6 L3557.9 598.1 L3560.3 595.5 L3562.6 593 L3565 590.4 L3567.4 587.9 L3569.7 585.3 L3572.1 582.8 L3574.5 580.1 L3576.9 577.5 L3579.2 574.9 L3581.6 572.3 L3584 569.7 L3586.3 567.1 L3588.7 564.4 L3591.1 561.8 L3593.5 559.2 L3595.8 556.6 L3598.2 554 L3600.6 551.4 L3602.9 548.8 L3605.3 546.1 L3607.7 543.5 L3610.1 540.9 L3612.4 538.6 L3614.8 536.2 L3617.2 533.8 L3619.5 531.5 L3621.9 529.1 L3624.3 526.7 L3626.7 524.4 L3629 522 L3631.4 519.7 L3633.8 517.3 L3636.2 514.9 L3638.5 512.6 L3640.9 510.2 L3643.3 507.8 L3645.6 505.5 L3648 503.1 L3650.4 500.7 L3652.8 498.4 L3655.1 496 L3657.5 493.6 L3659.9 491.3 L3662.2 488.9 L3664.6 486.6 L3667 484.2 L3669.4 481.8 L3671.7 479.5 L3674.1 477.1 L3676.5 474.7 L3678.8 472.4 L3681.2 470 L3683.6 467.6 L3686 465.3 L3688.3 462.9 L3690.7 460.5 L3693.1 458.1 L3695.4 455.7 L3697.8 453.3 L3700.2 450.9 L3702.6 448.6 L3704.9 446.2 L3707.3 443.8 L3709.7 441.4 L3712.1 439 L3714.4 436.6 L3716.8 434.2 L3719.2 431.9 L3721.5 429.8 L3723.9 427.6 L3726.3 425.5 L3728.7 423.3 L3731 421.2 L3733.4 419 L3735.8 416.9 L3738.1 414.7 L3740.5 412.6 L3742.9 410.4 L3745.3 408.3 L3747.6 406.1 L3750 404 L3750 852 L3278 1260Z"/></clipPath>
<g clip-path="url(#fr)">
<path d="M3278 808 L3280.4 806.4 L3282.7 804.7 L3285.1 803.1 L3287.5 801.5 L3289.9 799.9 L3292.2 798.2 L3294.6 796.6 L3297 795 L3299.3 793.4 L3301.7 791.7 L3304.1 790.1 L3306.5 788.5 L3308.8 786.9 L3311.2 785.2 L3313.6 783.6 L3315.9 782 L3318.3 780.6 L3320.7 779.6 L3323.1 778.5 L3325.4 777.5 L3327.8 776.5 L3330.2 775.4 L3332.6 774.4 L3334.9 773.3 L3337.3 772.3 L3339.7 771.2 L3342 770.2 L3344.4 769.1 L3346.8 768.1 L3349.2 767 L3351.5 766 L3353.9 765 L3356.3 763.9 L3358.6 762.9 L3361 761.8 L3363.4 760.8 L3365.8 759.6 L3368.1 758.2 L3370.5 756.9 L3372.9 755.6 L3375.2 754.2 L3377.6 752.9 L3380 751.6 L3382.4 750.2 L3384.7 748.9 L3387.1 747.6 L3389.5 746.2 L3391.8 744.9 L3394.2 743.6 L3396.6 742.2 L3399 740.9 L3401.3 739.6 L3403.7 738.5 L3406.1 737.4 L3408.5 736.2 L3410.8 735.1 L3413.2 734 L3415.6 732.8 L3417.9 731.7 L3420.3 730.6 L3422.7 729.4 L3425.1 728.3 L3427.4 727.2 L3429.8 726 L3432.2 724.9 L3434.5 723.8 L3436.9 722.7 L3439.3 721.5 L3441.7 720.4 L3444 719.3 L3446.4 717 L3448.8 714.3 L3451.1 711.6 L3453.5 709 L3455.9 706.3 L3458.3 703.6 L3460.6 701 L3463 698.3 L3465.4 695.6 L3467.7 693 L3470.1 690.3 L3472.5 687.8 L3474.9 685.4 L3477.2 683 L3479.6 680.7 L3482 678.3 L3484.4 676 L3486.7 673.6 L3489.1 671.2 L3491.5 668.9 L3493.8 666.5 L3496.2 664.2 L3498.6 661.8 L3501 659.4 L3503.3 657 L3505.7 654.4 L3508.1 651.8 L3510.4 649.3 L3512.8 646.7 L3515.2 644.1 L3517.6 641.6 L3519.9 639 L3522.3 636.4 L3524.7 633.9 L3527 631.3 L3529.4 628.7 L3531.8 626.2 L3534.2 623.6 L3536.5 621 L3538.9 618.5 L3541.3 615.9 L3543.6 613.4 L3546 610.8 L3548.4 608.3 L3550.8 605.7 L3553.1 603.2 L3555.5 600.6 L3557.9 598.1 L3560.3 595.5 L3562.6 593 L3565 590.4 L3567.4 587.9 L3569.7 585.3 L3572.1 582.8 L3574.5 580.1 L3576.9 577.5 L3579.2 574.9 L3581.6 572.3 L3584 569.7 L3586.3 567.1 L3588.7 564.4 L3591.1 561.8 L3593.5 559.2 L3595.8 556.6 L3598.2 554 L3600.6 551.4 L3602.9 548.8 L3605.3 546.1 L3607.7 543.5 L3610.1 540.9 L3612.4 538.6 L3614.8 536.2 L3617.2 533.8 L3619.5 531.5 L3621.9 529.1 L3624.3 526.7 L3626.7 524.4 L3629 522 L3631.4 519.7 L3633.8 517.3 L3636.2 514.9 L3638.5 512.6 L3640.9 510.2 L3643.3 507.8 L3645.6 505.5 L3648 503.1 L3650.4 500.7 L3652.8 498.4 L3655.1 496 L3657.5 493.6 L3659.9 491.3 L3662.2 488.9 L3664.6 486.6 L3667 484.2 L3669.4 481.8 L3671.7 479.5 L3674.1 477.1 L3676.5 474.7 L3678.8 472.4 L3681.2 470 L3683.6 467.6 L3686 465.3 L3688.3 462.9 L3690.7 460.5 L3693.1 458.1 L3695.4 455.7 L3697.8 453.3 L3700.2 450.9 L3702.6 448.6 L3704.9 446.2 L3707.3 443.8 L3709.7 441.4 L3712.1 439 L3714.4 436.6 L3716.8 434.2 L3719.2 431.9 L3721.5 429.8 L3723.9 427.6 L3726.3 425.5 L3728.7 423.3 L3731 421.2 L3733.4 419 L3735.8 416.9 L3738.1 414.7 L3740.5 412.6 L3742.9 410.4 L3745.3 408.3 L3747.6 406.1 L3750 404 L3750 852 L3278 1260Z" fill="#000ad3"/>
<path d="M3563 740 L3600 705 L3648 654 L3671 636 L3686 673 L3718 711 L3749 720 L3800 720 L3800 1300 L3563 1300Z" fill="#0931d3"/>
<path d="M3270 969 L3341 921 L3412 870 L3459 815 L3553 754 L3648 654 L3671 636 L3686 673 L3718 711 L3749 720 L3800 720 L3800 300 L3270 300Z" fill="#127ecf"/>
<path d="M3270 950 L3341 903 L3412 851 L3459 801 L3553 730 L3648 636 L3742 555 L3800 540 L3800 300 L3270 300Z" fill="#00b8d3"/>
<path d="M3270 922 L3341 874 L3412 818 L3459 763 L3553 697 L3648 603 L3742 522 L3800 510 L3800 300 L3270 300Z" fill="#12c112"/>
<path d="M3270 870 L3341 810 L3412 785 L3459 740 L3506 688 L3553 650 L3600 603 L3648 561 L3695 518 L3749 480 L3800 470 L3800 300 L3270 300Z" fill="#94ca00"/>
<path d="M3270 860 L3341 799 L3412 777 L3440 745 L3440 300 L3270 300Z" fill="#e1ca00"/>
<path d="M3530 655 L3553 640 L3600 593 L3648 551 L3695 508 L3749 470 L3800 460 L3800 300 L3530 300Z" fill="#e1ca00"/>
<path d="M3270 830 L3320 800 L3380 770 L3420 745 L3420 300 L3270 300Z" fill="#e58700"/>
<path d="M3560 630 L3600 565 L3648 527 L3695 484 L3749 442 L3800 430 L3800 300 L3560 300Z" fill="#e58700"/>
<path d="M3270 812 L3327 790 L3327 300 L3270 300Z" fill="#d31200"/>
<path d="M3715 430 L3749 420 L3800 410 L3800 300 L3715 300Z" fill="#d31200"/>
</g>
<clipPath id="ft"><path d="M2212 598 L2217.4 599.8 L2222.7 601.6 L2228.1 603.4 L2233.4 605.2 L2238.8 606.9 L2244.1 608.7 L2249.5 610.5 L2254.9 612.3 L2260.2 614.1 L2265.6 615.9 L2270.9 617.7 L2276.3 619.5 L2281.6 621.4 L2287 623.2 L2292.4 625.2 L2297.7 627.3 L2303.1 629.4 L2308.4 631.6 L2313.8 633.7 L2319.1 635.8 L2324.5 638 L2329.8 639.8 L2335.2 641.6 L2340.6 643.4 L2345.9 645.2 L2351.3 647 L2356.6 648.8 L2362 650.6 L2367.3 654 L2372.7 658.4 L2378.1 662.7 L2383.4 667.1 L2388.8 671.4 L2394.1 675.8 L2399.5 680 L2404.8 684 L2410.2 688.1 L2415.6 692.1 L2420.9 696.2 L2426.3 700.2 L2431.6 704.2 L2437 706.4 L2442.3 708.5 L2447.7 710.7 L2453.1 712.8 L2458.4 715 L2463.8 716.9 L2469.1 718.9 L2474.5 720.9 L2479.8 722.8 L2485.2 724.8 L2490.6 727 L2495.9 729.2 L2501.3 731.5 L2506.6 733.8 L2512 736 L2517.3 738.3 L2522.7 740.6 L2528.1 743.1 L2533.4 746.8 L2538.8 750.6 L2544.1 754.3 L2549.5 758 L2554.8 761.7 L2560.2 765.5 L2565.5 769.2 L2570.9 771.2 L2576.3 772.8 L2581.6 774.4 L2587 776 L2592.3 777.6 L2597.7 779.2 L2603 781.1 L2608.4 784.6 L2613.8 788.2 L2619.1 791.7 L2624.5 795.2 L2629.8 798.8 L2635.2 802 L2640.5 803.9 L2645.9 805.9 L2651.3 807.8 L2656.6 809.7 L2662 811.6 L2667.3 813.5 L2672.7 815.4 L2678 817.3 L2683.4 819.4 L2688.8 822.1 L2694.1 824.8 L2699.5 827.5 L2704.8 830.1 L2710.2 832.8 L2715.5 835.5 L2720.9 838.2 L2726.3 840.8 L2731.6 843 L2737 844.8 L2742.3 846.7 L2747.7 848.5 L2753 850.3 L2758.4 852.1 L2763.7 854 L2769.1 855.8 L2774.5 856.5 L2779.8 856.2 L2785.2 856 L2790.5 855.7 L2795.9 855.5 L2801.2 855.2 L2806.6 854.9 L2812 854.7 L2817.3 854.4 L2822.7 853.8 L2828 852.5 L2833.4 851.3 L2838.7 850.1 L2844.1 848.9 L2849.5 847.6 L2854.8 846.4 L2860.2 845.2 L2865.5 843.9 L2870.9 842.9 L2876.2 841.8 L2881.6 840.8 L2887 839.8 L2892.3 838.8 L2897.7 837.8 L2903 836.8 L2908.4 836 L2913.7 836.5 L2919.1 836.9 L2924.5 837.4 L2929.8 837.8 L2935.2 838.3 L2940.5 838.7 L2945.9 839.2 L2951.2 839.6 L2956.6 840.1 L2961.9 840.5 L2967.3 841 L2972.7 841.4 L2978 841.3 L2983.4 841.1 L2988.7 840.8 L2994.1 840.6 L2999.4 840.4 L3004.8 840.2 L3010.2 840 L3015.5 839.7 L3020.9 839.5 L3026.2 839.3 L3031.6 839.1 L3036.9 838.8 L3042.3 838.6 L3047.7 838.1 L3053 837.1 L3058.4 836.2 L3063.7 835.3 L3069.1 834.3 L3074.4 833.4 L3079.8 832.4 L3085.2 831.5 L3090.5 830.6 L3095.9 829.6 L3101.2 828.7 L3106.6 827.8 L3111.9 826.8 L3117.3 826.1 L3122.7 825.4 L3128 824.7 L3133.4 824.1 L3138.7 823.4 L3144.1 822.7 L3149.4 822.1 L3154.8 821.4 L3160.2 820.7 L3165.5 820.1 L3170.9 819.4 L3176.2 818.7 L3181.6 818.1 L3186.9 817.8 L3192.3 817.4 L3197.6 817 L3203 816.7 L3208.4 816.3 L3213.7 816 L3219.1 815.6 L3224.4 815.3 L3229.8 814.9 L3235.1 814.6 L3240.5 814.2 L3245.9 813.8 L3251.2 813.2 L3256.6 812.2 L3261.9 811.1 L3267.3 810.1 L3272.6 809 L3278 808 L3278 808 L3280.4 806.4 L3282.7 804.7 L3285.1 803.1 L3287.5 801.5 L3289.9 799.9 L3292.2 798.2 L3294.6 796.6 L3297 795 L3299.3 793.4 L3301.7 791.7 L3304.1 790.1 L3306.5 788.5 L3308.8 786.9 L3311.2 785.2 L3313.6 783.6 L3315.9 782 L3318.3 780.6 L3320.7 779.6 L3323.1 778.5 L3325.4 777.5 L3327.8 776.5 L3330.2 775.4 L3332.6 774.4 L3334.9 773.3 L3337.3 772.3 L3339.7 771.2 L3342 770.2 L3344.4 769.1 L3346.8 768.1 L3349.2 767 L3351.5 766 L3353.9 765 L3356.3 763.9 L3358.6 762.9 L3361 761.8 L3363.4 760.8 L3365.8 759.6 L3368.1 758.2 L3370.5 756.9 L3372.9 755.6 L3375.2 754.2 L3377.6 752.9 L3380 751.6 L3382.4 750.2 L3384.7 748.9 L3387.1 747.6 L3389.5 746.2 L3391.8 744.9 L3394.2 743.6 L3396.6 742.2 L3399 740.9 L3401.3 739.6 L3403.7 738.5 L3406.1 737.4 L3408.5 736.2 L3410.8 735.1 L3413.2 734 L3415.6 732.8 L3417.9 731.7 L3420.3 730.6 L3422.7 729.4 L3425.1 728.3 L3427.4 727.2 L3429.8 726 L3432.2 724.9 L3434.5 723.8 L3436.9 722.7 L3439.3 721.5 L3441.7 720.4 L3444 719.3 L3446.4 717 L3448.8 714.3 L3451.1 711.6 L3453.5 709 L3455.9 706.3 L3458.3 703.6 L3460.6 701 L3463 698.3 L3465.4 695.6 L3467.7 693 L3470.1 690.3 L3472.5 687.8 L3474.9 685.4 L3477.2 683 L3479.6 680.7 L3482 678.3 L3484.4 676 L3486.7 673.6 L3489.1 671.2 L3491.5 668.9 L3493.8 666.5 L3496.2 664.2 L3498.6 661.8 L3501 659.4 L3503.3 657 L3505.7 654.4 L3508.1 651.8 L3510.4 649.3 L3512.8 646.7 L3515.2 644.1 L3517.6 641.6 L3519.9 639 L3522.3 636.4 L3524.7 633.9 L3527 631.3 L3529.4 628.7 L3531.8 626.2 L3534.2 623.6 L3536.5 621 L3538.9 618.5 L3541.3 615.9 L3543.6 613.4 L3546 610.8 L3548.4 608.3 L3550.8 605.7 L3553.1 603.2 L3555.5 600.6 L3557.9 598.1 L3560.3 595.5 L3562.6 593 L3565 590.4 L3567.4 587.9 L3569.7 585.3 L3572.1 582.8 L3574.5 580.1 L3576.9 577.5 L3579.2 574.9 L3581.6 572.3 L3584 569.7 L3586.3 567.1 L3588.7 564.4 L3591.1 561.8 L3593.5 559.2 L3595.8 556.6 L3598.2 554 L3600.6 551.4 L3602.9 548.8 L3605.3 546.1 L3607.7 543.5 L3610.1 540.9 L3612.4 538.6 L3614.8 536.2 L3617.2 533.8 L3619.5 531.5 L3621.9 529.1 L3624.3 526.7 L3626.7 524.4 L3629 522 L3631.4 519.7 L3633.8 517.3 L3636.2 514.9 L3638.5 512.6 L3640.9 510.2 L3643.3 507.8 L3645.6 505.5 L3648 503.1 L3650.4 500.7 L3652.8 498.4 L3655.1 496 L3657.5 493.6 L3659.9 491.3 L3662.2 488.9 L3664.6 486.6 L3667 484.2 L3669.4 481.8 L3671.7 479.5 L3674.1 477.1 L3676.5 474.7 L3678.8 472.4 L3681.2 470 L3683.6 467.6 L3686 465.3 L3688.3 462.9 L3690.7 460.5 L3693.1 458.1 L3695.4 455.7 L3697.8 453.3 L3700.2 450.9 L3702.6 448.6 L3704.9 446.2 L3707.3 443.8 L3709.7 441.4 L3712.1 439 L3714.4 436.6 L3716.8 434.2 L3719.2 431.9 L3721.5 429.8 L3723.9 427.6 L3726.3 425.5 L3728.7 423.3 L3731 421.2 L3733.4 419 L3735.8 416.9 L3738.1 414.7 L3740.5 412.6 L3742.9 410.4 L3745.3 408.3 L3747.6 406.1 L3750 404 L3750 404 L3744.6 403.6 L3739.3 403.2 L3733.9 402.8 L3728.6 402.4 L3723.2 402 L3717.9 401.6 L3712.5 401.2 L3707.1 400.8 L3701.8 400.4 L3696.4 400 L3691.1 399.6 L3685.7 399 L3680.4 398.5 L3675 398 L3669.6 397.4 L3664.3 396.9 L3658.9 396.4 L3653.6 395.8 L3648.2 395.3 L3642.9 394.8 L3637.5 394.6 L3632.2 394.4 L3626.8 394.2 L3621.4 394.1 L3616.1 393.9 L3610.7 393.7 L3605.4 393.5 L3600 393.4 L3594.7 393.2 L3589.3 393 L3583.9 392.8 L3578.6 392.6 L3573.2 392.5 L3567.9 392.6 L3562.5 393 L3557.2 393.4 L3551.8 393.9 L3546.4 394.3 L3541.1 394.7 L3535.7 395.1 L3530.4 395.5 L3525 395.9 L3519.7 396.3 L3514.3 396.7 L3508.9 397.1 L3503.6 395.8 L3498.2 394.3 L3492.9 392.7 L3487.5 391.2 L3482.2 389.7 L3476.8 388.2 L3471.4 386.6 L3466.1 385.1 L3460.7 383.6 L3455.4 382 L3450 380.5 L3444.7 379 L3439.3 378 L3433.9 378.4 L3428.6 378.8 L3423.2 379.3 L3417.9 379.7 L3412.5 380.1 L3407.2 380.5 L3401.8 380.9 L3396.5 381.3 L3391.1 381.7 L3385.7 382.2 L3380.4 382.6 L3375 383.4 L3369.7 384.5 L3364.3 385.6 L3359 386.6 L3353.6 387.7 L3348.2 388.8 L3342.9 389.9 L3337.5 391 L3332.2 392.1 L3326.8 393.9 L3321.5 396.2 L3316.1 398.5 L3310.7 400.8 L3305.4 403.1 L3300 405.3 L3294.7 406.7 L3289.3 406.4 L3284 406 L3278.6 405.7 L3273.2 405.3 L3267.9 405 L3262.5 404.7 L3257.2 404.3 L3251.8 403.8 L3246.5 403.2 L3241.1 402.7 L3235.7 402.2 L3230.4 401.7 L3225 401.1 L3219.7 400.6 L3214.3 400.1 L3209 399.5 L3203.6 398.7 L3198.3 397.9 L3192.9 397.1 L3187.5 396.3 L3182.2 395.5 L3176.8 394.7 L3171.5 393.9 L3166.1 393.1 L3160.8 392.2 L3155.4 391.2 L3150 390.1 L3144.7 389 L3139.3 387.9 L3134 386.8 L3128.6 385.7 L3123.3 384.7 L3117.9 383.6 L3112.5 382.4 L3107.2 380.8 L3101.8 379.2 L3096.5 377.6 L3091.1 376 L3085.8 374.4 L3080.4 372.8 L3075 371.2 L3069.7 369.6 L3064.3 367.9 L3059 366 L3053.6 364.1 L3048.3 362.1 L3042.9 360.2 L3037.5 358.3 L3032.2 356.4 L3026.8 352.3 L3021.5 347.9 L3016.1 343.6 L3010.8 339.2 L3005.4 334.9 L3000.1 330.6 L2994.7 326.2 L2989.3 321.7 L2984 317.1 L2978.6 312.5 L2973.3 307.9 L2967.9 303.4 L2962.6 298.8 L2957.2 295 L2951.8 292.3 L2946.5 289.6 L2941.1 286.9 L2935.8 284.3 L2930.4 281.6 L2925.1 278.9 L2919.7 276 L2914.3 272.3 L2909 268.5 L2903.6 264.7 L2898.3 261 L2892.9 257.2 L2887.6 253.4 L2882.2 249.7 L2876.8 245.9 L2871.5 242 L2866.1 237.7 L2860.8 233.5 L2855.4 229.2 L2850.1 224.9 L2844.7 220.6 L2839.3 216.4 L2834 212.1 L2828.6 207.8 L2823.3 203.6 L2817.9 199.3 L2812.6 195 L2807.2 190.7 L2801.8 186.4 L2796.5 182.1 L2791.1 177.9 L2785.8 173.6 L2780.4 169.3 L2775.1 164.9 L2769.7 160 L2764.4 155.2 L2759 150.4 L2753.6 145.5 L2748.3 140.7 L2742.9 135.9 L2737.6 131 L2732.2 126.2 L2726.9 121.4 L2721.5 116.7 L2716.1 112 L2710.8 107.4 L2705.4 102.7 L2700.1 98 L2694.7 93.3 L2689.4 88.7 L2684 84 L2684 84 L2681.6 86.7 L2679.3 89.4 L2676.9 92 L2674.5 94.7 L2672.1 97.4 L2669.8 100.1 L2667.4 102.7 L2665 105.4 L2662.7 108.1 L2660.3 110.8 L2657.9 113.5 L2655.5 116.1 L2653.2 118.9 L2650.8 122.1 L2648.4 125.3 L2646.1 128.4 L2643.7 131.6 L2641.3 134.7 L2638.9 137.9 L2636.6 141.1 L2634.2 144.2 L2631.8 147.4 L2629.4 150.5 L2627.1 153.7 L2624.7 156.8 L2622.3 160 L2620 163.2 L2617.6 166.3 L2615.2 169.5 L2612.8 172.6 L2610.5 175.8 L2608.1 179 L2605.7 182.1 L2603.4 185.3 L2601 188.4 L2598.6 191.6 L2596.2 194.7 L2593.9 197.9 L2591.5 201.1 L2589.1 204.2 L2586.8 207.4 L2584.4 210.5 L2582 214.3 L2579.6 218.1 L2577.3 221.9 L2574.9 225.7 L2572.5 229.5 L2570.2 233.3 L2567.8 237 L2565.4 240.8 L2563 244.6 L2560.7 248.4 L2558.3 252.2 L2555.9 256 L2553.5 259.8 L2551.2 263.6 L2548.8 267.5 L2546.4 271.3 L2544.1 275.1 L2541.7 278.9 L2539.3 282.7 L2536.9 286.6 L2534.6 290.4 L2532.2 294.2 L2529.8 298 L2527.5 301.8 L2525.1 305 L2522.7 308 L2520.3 310.9 L2518 313.9 L2515.6 316.8 L2513.2 319.8 L2510.9 322.7 L2508.5 325.7 L2506.1 328.7 L2503.7 331.6 L2501.4 334.6 L2499 337.5 L2496.6 340.5 L2494.3 343.5 L2491.9 346.5 L2489.5 349.4 L2487.1 352.4 L2484.8 355.4 L2482.4 358.4 L2480 361.1 L2477.6 363.1 L2475.3 365.2 L2472.9 367.2 L2470.5 369.2 L2468.2 371.3 L2465.8 373.3 L2463.4 375.3 L2461 377.3 L2458.7 379.4 L2456.3 381.4 L2453.9 383.4 L2451.6 385.4 L2449.2 387.5 L2446.8 389.5 L2444.4 391.5 L2442.1 393.5 L2439.7 395.5 L2437.3 396.9 L2435 398.2 L2432.6 399.6 L2430.2 400.9 L2427.8 402.3 L2425.5 403.6 L2423.1 405 L2420.7 406.4 L2418.4 407.7 L2416 409.1 L2413.6 410.4 L2411.2 411.8 L2408.9 413.2 L2406.5 414.5 L2404.1 415.9 L2401.7 417.2 L2399.4 418.5 L2397 419.6 L2394.6 420.6 L2392.3 421.6 L2389.9 422.7 L2387.5 423.7 L2385.1 424.8 L2382.8 425.8 L2380.4 426.8 L2378 427.9 L2375.7 428.9 L2373.3 430 L2370.9 431 L2368.5 432 L2366.2 433.1 L2363.8 434.1 L2361.4 435.2 L2359.1 436.2 L2356.7 437.2 L2354.3 438.3 L2351.9 439.4 L2349.6 440.6 L2347.2 441.8 L2344.8 443 L2342.5 444.2 L2340.1 445.3 L2337.7 446.5 L2335.3 447.7 L2333 448.9 L2330.6 450.1 L2328.2 451.3 L2325.8 452.4 L2323.5 453.8 L2321.1 455.4 L2318.7 457.1 L2316.4 458.8 L2314 460.4 L2311.6 462.1 L2309.2 463.7 L2306.9 465.4 L2304.5 467 L2302.1 468.7 L2299.8 470.3 L2297.4 472 L2295 474 L2292.6 477.1 L2290.3 480.1 L2287.9 483.2 L2285.5 486.3 L2283.2 489.4 L2280.8 492.5 L2278.4 495.5 L2276 498.6 L2273.7 501.7 L2271.3 504.8 L2268.9 507.9 L2266.6 511 L2264.2 514.6 L2261.8 518.2 L2259.4 521.7 L2257.1 525.3 L2254.7 528.9 L2252.3 532.5 L2249.9 536.1 L2247.6 539.7 L2245.2 543.3 L2242.8 547 L2240.5 550.9 L2238.1 554.8 L2235.7 558.7 L2233.3 562.7 L2231 566.6 L2228.6 570.5 L2226.2 574.4 L2223.9 578.4 L2221.5 582.3 L2219.1 586.2 L2216.7 590.1 L2214.4 594.1 L2212 598Z"/></clipPath>
<g clip-path="url(#ft)">
<path d="M2212 598 L2217.4 599.8 L2222.7 601.6 L2228.1 603.4 L2233.4 605.2 L2238.8 606.9 L2244.1 608.7 L2249.5 610.5 L2254.9 612.3 L2260.2 614.1 L2265.6 615.9 L2270.9 617.7 L2276.3 619.5 L2281.6 621.4 L2287 623.2 L2292.4 625.2 L2297.7 627.3 L2303.1 629.4 L2308.4 631.6 L2313.8 633.7 L2319.1 635.8 L2324.5 638 L2329.8 639.8 L2335.2 641.6 L2340.6 643.4 L2345.9 645.2 L2351.3 647 L2356.6 648.8 L2362 650.6 L2367.3 654 L2372.7 658.4 L2378.1 662.7 L2383.4 667.1 L2388.8 671.4 L2394.1 675.8 L2399.5 680 L2404.8 684 L2410.2 688.1 L2415.6 692.1 L2420.9 696.2 L2426.3 700.2 L2431.6 704.2 L2437 706.4 L2442.3 708.5 L2447.7 710.7 L2453.1 712.8 L2458.4 715 L2463.8 716.9 L2469.1 718.9 L2474.5 720.9 L2479.8 722.8 L2485.2 724.8 L2490.6 727 L2495.9 729.2 L2501.3 731.5 L2506.6 733.8 L2512 736 L2517.3 738.3 L2522.7 740.6 L2528.1 743.1 L2533.4 746.8 L2538.8 750.6 L2544.1 754.3 L2549.5 758 L2554.8 761.7 L2560.2 765.5 L2565.5 769.2 L2570.9 771.2 L2576.3 772.8 L2581.6 774.4 L2587 776 L2592.3 777.6 L2597.7 779.2 L2603 781.1 L2608.4 784.6 L2613.8 788.2 L2619.1 791.7 L2624.5 795.2 L2629.8 798.8 L2635.2 802 L2640.5 803.9 L2645.9 805.9 L2651.3 807.8 L2656.6 809.7 L2662 811.6 L2667.3 813.5 L2672.7 815.4 L2678 817.3 L2683.4 819.4 L2688.8 822.1 L2694.1 824.8 L2699.5 827.5 L2704.8 830.1 L2710.2 832.8 L2715.5 835.5 L2720.9 838.2 L2726.3 840.8 L2731.6 843 L2737 844.8 L2742.3 846.7 L2747.7 848.5 L2753 850.3 L2758.4 852.1 L2763.7 854 L2769.1 855.8 L2774.5 856.5 L2779.8 856.2 L2785.2 856 L2790.5 855.7 L2795.9 855.5 L2801.2 855.2 L2806.6 854.9 L2812 854.7 L2817.3 854.4 L2822.7 853.8 L2828 852.5 L2833.4 851.3 L2838.7 850.1 L2844.1 848.9 L2849.5 847.6 L2854.8 846.4 L2860.2 845.2 L2865.5 843.9 L2870.9 842.9 L2876.2 841.8 L2881.6 840.8 L2887 839.8 L2892.3 838.8 L2897.7 837.8 L2903 836.8 L2908.4 836 L2913.7 836.5 L2919.1 836.9 L2924.5 837.4 L2929.8 837.8 L2935.2 838.3 L2940.5 838.7 L2945.9 839.2 L2951.2 839.6 L2956.6 840.1 L2961.9 840.5 L2967.3 841 L2972.7 841.4 L2978 841.3 L2983.4 841.1 L2988.7 840.8 L2994.1 840.6 L2999.4 840.4 L3004.8 840.2 L3010.2 840 L3015.5 839.7 L3020.9 839.5 L3026.2 839.3 L3031.6 839.1 L3036.9 838.8 L3042.3 838.6 L3047.7 838.1 L3053 837.1 L3058.4 836.2 L3063.7 835.3 L3069.1 834.3 L3074.4 833.4 L3079.8 832.4 L3085.2 831.5 L3090.5 830.6 L3095.9 829.6 L3101.2 828.7 L3106.6 827.8 L3111.9 826.8 L3117.3 826.1 L3122.7 825.4 L3128 824.7 L3133.4 824.1 L3138.7 823.4 L3144.1 822.7 L3149.4 822.1 L3154.8 821.4 L3160.2 820.7 L3165.5 820.1 L3170.9 819.4 L3176.2 818.7 L3181.6 818.1 L3186.9 817.8 L3192.3 817.4 L3197.6 817 L3203 816.7 L3208.4 816.3 L3213.7 816 L3219.1 815.6 L3224.4 815.3 L3229.8 814.9 L3235.1 814.6 L3240.5 814.2 L3245.9 813.8 L3251.2 813.2 L3256.6 812.2 L3261.9 811.1 L3267.3 810.1 L3272.6 809 L3278 808 L3278 808 L3280.4 806.4 L3282.7 804.7 L3285.1 803.1 L3287.5 801.5 L3289.9 799.9 L3292.2 798.2 L3294.6 796.6 L3297 795 L3299.3 793.4 L3301.7 791.7 L3304.1 790.1 L3306.5 788.5 L3308.8 786.9 L3311.2 785.2 L3313.6 783.6 L3315.9 782 L3318.3 780.6 L3320.7 779.6 L3323.1 778.5 L3325.4 777.5 L3327.8 776.5 L3330.2 775.4 L3332.6 774.4 L3334.9 773.3 L3337.3 772.3 L3339.7 771.2 L3342 770.2 L3344.4 769.1 L3346.8 768.1 L3349.2 767 L3351.5 766 L3353.9 765 L3356.3 763.9 L3358.6 762.9 L3361 761.8 L3363.4 760.8 L3365.8 759.6 L3368.1 758.2 L3370.5 756.9 L3372.9 755.6 L3375.2 754.2 L3377.6 752.9 L3380 751.6 L3382.4 750.2 L3384.7 748.9 L3387.1 747.6 L3389.5 746.2 L3391.8 744.9 L3394.2 743.6 L3396.6 742.2 L3399 740.9 L3401.3 739.6 L3403.7 738.5 L3406.1 737.4 L3408.5 736.2 L3410.8 735.1 L3413.2 734 L3415.6 732.8 L3417.9 731.7 L3420.3 730.6 L3422.7 729.4 L3425.1 728.3 L3427.4 727.2 L3429.8 726 L3432.2 724.9 L3434.5 723.8 L3436.9 722.7 L3439.3 721.5 L3441.7 720.4 L3444 719.3 L3446.4 717 L3448.8 714.3 L3451.1 711.6 L3453.5 709 L3455.9 706.3 L3458.3 703.6 L3460.6 701 L3463 698.3 L3465.4 695.6 L3467.7 693 L3470.1 690.3 L3472.5 687.8 L3474.9 685.4 L3477.2 683 L3479.6 680.7 L3482 678.3 L3484.4 676 L3486.7 673.6 L3489.1 671.2 L3491.5 668.9 L3493.8 666.5 L3496.2 664.2 L3498.6 661.8 L3501 659.4 L3503.3 657 L3505.7 654.4 L3508.1 651.8 L3510.4 649.3 L3512.8 646.7 L3515.2 644.1 L3517.6 641.6 L3519.9 639 L3522.3 636.4 L3524.7 633.9 L3527 631.3 L3529.4 628.7 L3531.8 626.2 L3534.2 623.6 L3536.5 621 L3538.9 618.5 L3541.3 615.9 L3543.6 613.4 L3546 610.8 L3548.4 608.3 L3550.8 605.7 L3553.1 603.2 L3555.5 600.6 L3557.9 598.1 L3560.3 595.5 L3562.6 593 L3565 590.4 L3567.4 587.9 L3569.7 585.3 L3572.1 582.8 L3574.5 580.1 L3576.9 577.5 L3579.2 574.9 L3581.6 572.3 L3584 569.7 L3586.3 567.1 L3588.7 564.4 L3591.1 561.8 L3593.5 559.2 L3595.8 556.6 L3598.2 554 L3600.6 551.4 L3602.9 548.8 L3605.3 546.1 L3607.7 543.5 L3610.1 540.9 L3612.4 538.6 L3614.8 536.2 L3617.2 533.8 L3619.5 531.5 L3621.9 529.1 L3624.3 526.7 L3626.7 524.4 L3629 522 L3631.4 519.7 L3633.8 517.3 L3636.2 514.9 L3638.5 512.6 L3640.9 510.2 L3643.3 507.8 L3645.6 505.5 L3648 503.1 L3650.4 500.7 L3652.8 498.4 L3655.1 496 L3657.5 493.6 L3659.9 491.3 L3662.2 488.9 L3664.6 486.6 L3667 484.2 L3669.4 481.8 L3671.7 479.5 L3674.1 477.1 L3676.5 474.7 L3678.8 472.4 L3681.2 470 L3683.6 467.6 L3686 465.3 L3688.3 462.9 L3690.7 460.5 L3693.1 458.1 L3695.4 455.7 L3697.8 453.3 L3700.2 450.9 L3702.6 448.6 L3704.9 446.2 L3707.3 443.8 L3709.7 441.4 L3712.1 439 L3714.4 436.6 L3716.8 434.2 L3719.2 431.9 L3721.5 429.8 L3723.9 427.6 L3726.3 425.5 L3728.7 423.3 L3731 421.2 L3733.4 419 L3735.8 416.9 L3738.1 414.7 L3740.5 412.6 L3742.9 410.4 L3745.3 408.3 L3747.6 406.1 L3750 404 L3750 404 L3744.6 403.6 L3739.3 403.2 L3733.9 402.8 L3728.6 402.4 L3723.2 402 L3717.9 401.6 L3712.5 401.2 L3707.1 400.8 L3701.8 400.4 L3696.4 400 L3691.1 399.6 L3685.7 399 L3680.4 398.5 L3675 398 L3669.6 397.4 L3664.3 396.9 L3658.9 396.4 L3653.6 395.8 L3648.2 395.3 L3642.9 394.8 L3637.5 394.6 L3632.2 394.4 L3626.8 394.2 L3621.4 394.1 L3616.1 393.9 L3610.7 393.7 L3605.4 393.5 L3600 393.4 L3594.7 393.2 L3589.3 393 L3583.9 392.8 L3578.6 392.6 L3573.2 392.5 L3567.9 392.6 L3562.5 393 L3557.2 393.4 L3551.8 393.9 L3546.4 394.3 L3541.1 394.7 L3535.7 395.1 L3530.4 395.5 L3525 395.9 L3519.7 396.3 L3514.3 396.7 L3508.9 397.1 L3503.6 395.8 L3498.2 394.3 L3492.9 392.7 L3487.5 391.2 L3482.2 389.7 L3476.8 388.2 L3471.4 386.6 L3466.1 385.1 L3460.7 383.6 L3455.4 382 L3450 380.5 L3444.7 379 L3439.3 378 L3433.9 378.4 L3428.6 378.8 L3423.2 379.3 L3417.9 379.7 L3412.5 380.1 L3407.2 380.5 L3401.8 380.9 L3396.5 381.3 L3391.1 381.7 L3385.7 382.2 L3380.4 382.6 L3375 383.4 L3369.7 384.5 L3364.3 385.6 L3359 386.6 L3353.6 387.7 L3348.2 388.8 L3342.9 389.9 L3337.5 391 L3332.2 392.1 L3326.8 393.9 L3321.5 396.2 L3316.1 398.5 L3310.7 400.8 L3305.4 403.1 L3300 405.3 L3294.7 406.7 L3289.3 406.4 L3284 406 L3278.6 405.7 L3273.2 405.3 L3267.9 405 L3262.5 404.7 L3257.2 404.3 L3251.8 403.8 L3246.5 403.2 L3241.1 402.7 L3235.7 402.2 L3230.4 401.7 L3225 401.1 L3219.7 400.6 L3214.3 400.1 L3209 399.5 L3203.6 398.7 L3198.3 397.9 L3192.9 397.1 L3187.5 396.3 L3182.2 395.5 L3176.8 394.7 L3171.5 393.9 L3166.1 393.1 L3160.8 392.2 L3155.4 391.2 L3150 390.1 L3144.7 389 L3139.3 387.9 L3134 386.8 L3128.6 385.7 L3123.3 384.7 L3117.9 383.6 L3112.5 382.4 L3107.2 380.8 L3101.8 379.2 L3096.5 377.6 L3091.1 376 L3085.8 374.4 L3080.4 372.8 L3075 371.2 L3069.7 369.6 L3064.3 367.9 L3059 366 L3053.6 364.1 L3048.3 362.1 L3042.9 360.2 L3037.5 358.3 L3032.2 356.4 L3026.8 352.3 L3021.5 347.9 L3016.1 343.6 L3010.8 339.2 L3005.4 334.9 L3000.1 330.6 L2994.7 326.2 L2989.3 321.7 L2984 317.1 L2978.6 312.5 L2973.3 307.9 L2967.9 303.4 L2962.6 298.8 L2957.2 295 L2951.8 292.3 L2946.5 289.6 L2941.1 286.9 L2935.8 284.3 L2930.4 281.6 L2925.1 278.9 L2919.7 276 L2914.3 272.3 L2909 268.5 L2903.6 264.7 L2898.3 261 L2892.9 257.2 L2887.6 253.4 L2882.2 249.7 L2876.8 245.9 L2871.5 242 L2866.1 237.7 L2860.8 233.5 L2855.4 229.2 L2850.1 224.9 L2844.7 220.6 L2839.3 216.4 L2834 212.1 L2828.6 207.8 L2823.3 203.6 L2817.9 199.3 L2812.6 195 L2807.2 190.7 L2801.8 186.4 L2796.5 182.1 L2791.1 177.9 L2785.8 173.6 L2780.4 169.3 L2775.1 164.9 L2769.7 160 L2764.4 155.2 L2759 150.4 L2753.6 145.5 L2748.3 140.7 L2742.9 135.9 L2737.6 131 L2732.2 126.2 L2726.9 121.4 L2721.5 116.7 L2716.1 112 L2710.8 107.4 L2705.4 102.7 L2700.1 98 L2694.7 93.3 L2689.4 88.7 L2684 84 L2684 84 L2681.6 86.7 L2679.3 89.4 L2676.9 92 L2674.5 94.7 L2672.1 97.4 L2669.8 100.1 L2667.4 102.7 L2665 105.4 L2662.7 108.1 L2660.3 110.8 L2657.9 113.5 L2655.5 116.1 L2653.2 118.9 L2650.8 122.1 L2648.4 125.3 L2646.1 128.4 L2643.7 131.6 L2641.3 134.7 L2638.9 137.9 L2636.6 141.1 L2634.2 144.2 L2631.8 147.4 L2629.4 150.5 L2627.1 153.7 L2624.7 156.8 L2622.3 160 L2620 163.2 L2617.6 166.3 L2615.2 169.5 L2612.8 172.6 L2610.5 175.8 L2608.1 179 L2605.7 182.1 L2603.4 185.3 L2601 188.4 L2598.6 191.6 L2596.2 194.7 L2593.9 197.9 L2591.5 201.1 L2589.1 204.2 L2586.8 207.4 L2584.4 210.5 L2582 214.3 L2579.6 218.1 L2577.3 221.9 L2574.9 225.7 L2572.5 229.5 L2570.2 233.3 L2567.8 237 L2565.4 240.8 L2563 244.6 L2560.7 248.4 L2558.3 252.2 L2555.9 256 L2553.5 259.8 L2551.2 263.6 L2548.8 267.5 L2546.4 271.3 L2544.1 275.1 L2541.7 278.9 L2539.3 282.7 L2536.9 286.6 L2534.6 290.4 L2532.2 294.2 L2529.8 298 L2527.5 301.8 L2525.1 305 L2522.7 308 L2520.3 310.9 L2518 313.9 L2515.6 316.8 L2513.2 319.8 L2510.9 322.7 L2508.5 325.7 L2506.1 328.7 L2503.7 331.6 L2501.4 334.6 L2499 337.5 L2496.6 340.5 L2494.3 343.5 L2491.9 346.5 L2489.5 349.4 L2487.1 352.4 L2484.8 355.4 L2482.4 358.4 L2480 361.1 L2477.6 363.1 L2475.3 365.2 L2472.9 367.2 L2470.5 369.2 L2468.2 371.3 L2465.8 373.3 L2463.4 375.3 L2461 377.3 L2458.7 379.4 L2456.3 381.4 L2453.9 383.4 L2451.6 385.4 L2449.2 387.5 L2446.8 389.5 L2444.4 391.5 L2442.1 393.5 L2439.7 395.5 L2437.3 396.9 L2435 398.2 L2432.6 399.6 L2430.2 400.9 L2427.8 402.3 L2425.5 403.6 L2423.1 405 L2420.7 406.4 L2418.4 407.7 L2416 409.1 L2413.6 410.4 L2411.2 411.8 L2408.9 413.2 L2406.5 414.5 L2404.1 415.9 L2401.7 417.2 L2399.4 418.5 L2397 419.6 L2394.6 420.6 L2392.3 421.6 L2389.9 422.7 L2387.5 423.7 L2385.1 424.8 L2382.8 425.8 L2380.4 426.8 L2378 427.9 L2375.7 428.9 L2373.3 430 L2370.9 431 L2368.5 432 L2366.2 433.1 L2363.8 434.1 L2361.4 435.2 L2359.1 436.2 L2356.7 437.2 L2354.3 438.3 L2351.9 439.4 L2349.6 440.6 L2347.2 441.8 L2344.8 443 L2342.5 444.2 L2340.1 445.3 L2337.7 446.5 L2335.3 447.7 L2333 448.9 L2330.6 450.1 L2328.2 451.3 L2325.8 452.4 L2323.5 453.8 L2321.1 455.4 L2318.7 457.1 L2316.4 458.8 L2314 460.4 L2311.6 462.1 L2309.2 463.7 L2306.9 465.4 L2304.5 467 L2302.1 468.7 L2299.8 470.3 L2297.4 472 L2295 474 L2292.6 477.1 L2290.3 480.1 L2287.9 483.2 L2285.5 486.3 L2283.2 489.4 L2280.8 492.5 L2278.4 495.5 L2276 498.6 L2273.7 501.7 L2271.3 504.8 L2268.9 507.9 L2266.6 511 L2264.2 514.6 L2261.8 518.2 L2259.4 521.7 L2257.1 525.3 L2254.7 528.9 L2252.3 532.5 L2249.9 536.1 L2247.6 539.7 L2245.2 543.3 L2242.8 547 L2240.5 550.9 L2238.1 554.8 L2235.7 558.7 L2233.3 562.7 L2231 566.6 L2228.6 570.5 L2226.2 574.4 L2223.9 578.4 L2221.5 582.3 L2219.1 586.2 L2216.7 590.1 L2214.4 594.1 L2212 598Z" fill="#1385da"/>
<path d="M2380 760 L2443 720 L2547 679 L2620 650 L2700 620 L2738 586 L2766 572 L2792 559 L2839 551 L2885 546 L2922 531 L2959 510 L2993 491 L3036 463 L3073 445 L3097 445 L3082 423 L3036 389 L3020 355 L3010 250 L2000 250 L2000 760Z" fill="#00c2df"/>
<path d="M2380 740 L2440 705 L2540 660 L2650 605 L2740 560 L2800 520 L2835 485 L2882 439 L2928 392 L2974 346 L2995 250 L2000 250 L2000 740Z" fill="#00d5af"/>
<path d="M2360 720 L2420 690 L2510 640 L2620 585 L2720 520 L2770 440 L2820 392 L2860 368 L2891 337 L2912 300 L2950 250 L2000 250 L2000 720Z" fill="#00d572"/>
<path d="M2340 680 L2390 650 L2489 604 L2605 534 L2691 505 L2720 453 L2738 367 L2773 316 L2812 289 L2850 266 L2885 254 L2920 220 L2000 0 L2000 700Z" fill="#13cc13"/>
<path d="M2500 300 L2600 277 L2658 266 L2716 254 L2773 239 L2831 227 L2870 246 L2900 230 L2900 0 L2500 0Z" fill="#9cd500"/>
<path d="M2520 290 L2602 262 L2663 248 L2723 234 L2784 218 L2830 205 L2870 230 L2870 50 L2520 50Z" fill="#edd500"/>
<path d="M2540 250 L2602 230 L2663 212 L2723 193.5 L2784 181 L2830 175 L2830 50 L2540 50Z" fill="#f28e00"/>
<path d="M2560 220 L2602 194 L2663 177 L2723 161 L2770 150 L2800 100 L2600 50 L2540 100Z" fill="#ed4c00"/>
<path d="M2640 110 L2667 129 L2699 121 L2730 122 L2760 100 L2700 40 L2640 60Z" fill="#df1300"/>
<path d="M2290.6 440.4 L2335.9 422.3 L2381.2 431.4 L2390.2 467.6 L2354 503.8 L2299.6 512.9 L2281.5 485.7Z" fill="#9cd500"/>
<path d="M2920 860 L2934 840 L2961 817 L2978 790 L2992 756 L3018 736 L3052 722 L3086 709 L3113 702 L3153 688 L3187 662 L3204 621 L3197 564 L3235 529 L3268 491 L3292 458 L3301 406 L3301 300 L3800 300 L3800 1000 L2920 1000Z" fill="#00c2df"/>
<path d="M2960 860 L2975 835 L2990 810 L3010 780 L3050 760 L3100 745 L3153 725 L3195 700 L3230 660 L3260 620 L3250 580 L3230 560 L3250 530 L3276 495 L3296 460 L3305 406 L3305 300 L3800 300 L3800 1000 L2960 1000Z" fill="#00d5af"/>
<path d="M2985 860 L3002 823 L3035 796 L3086 773 L3153 756 L3187 739 L3221 705 L3254 662 L3300 594 L3320 570 L3280 555 L3240 535 L3272 495 L3298 460 L3310 406 L3310 300 L3800 300 L3800 1000 L2985 1000Z" fill="#13cc13"/>
<path d="M3306 500 L3340 482 L3377 490 L3372 520 L3320 524Z" fill="#00d5af"/>
<path d="M3537.2 340 L3542 434.4 L3527.8 481.7 L3518.3 519.4 L3527.8 547.8 L3551.4 576.1 L3811.1 576.1 L3811.1 340Z" fill="#9cd500"/>
<path d="M3338.9 595 L3348.3 623.3 L3376.7 661.1 L3414.5 698.9 L3480.6 670.6 L3490 623.3 L3457 585.6 L3386.1 576.1Z" fill="#9cd500"/>
<path d="M3575 340 L3598.6 434.4 L3603.3 481.7 L3589.2 519.4 L3565.6 566.7 L3537.2 604.5 L3508.9 632.8 L3480.6 651.7 L3499.5 670.6 L3811.1 670.6 L3811.1 340Z" fill="#edd500"/>
<path d="M3622.2 340 L3631.7 434.4 L3622.2 481.7 L3603.3 519.4 L3575 561.9 L3551.4 595 L3527.8 623.3 L3499.5 651.7 L3811.1 651.7 L3811.1 340Z" fill="#f28e00"/>
<path d="M3669.5 340 L3664.7 434.4 L3650.6 472.2 L3622.2 505.3 L3598.6 543.1 L3811.1 543.1 L3811.1 340Z" fill="#ed4c00"/>
<path d="M3712 340 L3726.1 420.3 L3749.7 434.4 L3811.1 434.4 L3811.1 340Z" fill="#df1300"/>
<path d="M3280 806 L3330 772 L3377 754 L3410 738 L3418 746 L3380 772 L3320 800 L3285 812Z" fill="#9cd500"/>
<path d="M3250 818 L3275 803 L3310 786 L3322 790 L3290 808 L3265 820Z" fill="#edd500"/>
<path d="M3252 820 L3270 806 L3290 798 L3298 802 L3280 815 L3262 822Z" fill="#f28e00"/>
<path d="M3262 818 L3278 806 L3288 804 L3280 816Z" fill="#df1300"/>
<path d="M2843 862 L2870 830 L2904 820 L2904 862Z" fill="#0934df"/>
</g>
<path d="M2212 598 L2218 588.1 L2223.9 578.2 L2229.9 568.3 L2235.9 558.4 L2241.9 548.6 L2247.8 539.3 L2253.8 530.2 L2259.8 521.2 L2265.8 512.2 L2271.7 504.2 L2277.7 496.4 L2283.7 488.7 L2289.7 480.9 L2295.6 473.2 L2301.6 469 L2307.6 464.9 L2313.6 460.7 L2319.5 456.5 L2325.5 452.6 L2331.5 449.6 L2337.5 446.6 L2343.4 443.7 L2349.4 440.7 L2355.4 437.8 L2361.4 435.2 L2367.3 432.6 L2373.3 430 L2379.3 427.3 L2385.3 424.7 L2391.2 422.1 L2397.2 419.5 L2403.2 416.4 L2409.2 413 L2415.1 409.6 L2421.1 406.1 L2427.1 402.7 L2433.1 399.3 L2439 395.9 L2445 391 L2451 385.9 L2457 380.8 L2462.9 375.7 L2468.9 370.6 L2474.9 365.5 L2480.9 360.3 L2486.8 352.8 L2492.8 345.3 L2498.8 337.8 L2504.8 330.3 L2510.7 322.9 L2516.7 315.5 L2522.7 308 L2528.7 299.9 L2534.6 290.3 L2540.6 280.7 L2546.6 271 L2552.6 261.4 L2558.5 251.8 L2564.5 242.3 L2570.5 232.7 L2576.5 223.2 L2582.4 213.6 L2588.4 205.2 L2594.4 197.2 L2600.4 189.3 L2606.3 181.3 L2612.3 173.4 L2618.3 165.4 L2624.3 157.4 L2630.2 149.5 L2636.2 141.5 L2642.2 133.6 L2648.2 125.6 L2654.1 117.7 L2660.1 111 L2666.1 104.2 L2672.1 97.5 L2678 90.7 L2684 84 M2250.6 610.9 L2256.6 601.4 L2262.5 592 L2268.5 582.5 L2274.5 573 L2280.5 563.6 L2286.4 554.7 L2292.4 546.1 L2298.4 537.5 L2304.4 528.9 L2310.3 521.3 L2316.3 513.9 L2322.3 506.6 L2328.3 499.2 L2334.2 491.9 L2340.2 488 L2346.2 484.1 L2352.2 480.2 L2358.1 476.2 L2364.1 472.5 L2370.1 469.7 L2376.1 467 L2382 464.2 L2388 461.4 L2394 458.8 L2400 456.4 L2405.9 454 L2411.9 451.5 L2417.9 449.1 L2423.9 446.6 L2429.8 444 L2435.8 441.4 L2441.8 438.5 L2447.8 435.1 L2453.7 431.8 L2459.7 428.5 L2465.7 425.2 L2471.7 421.9 L2477.6 418.6 L2483.6 413.9 L2489.6 409 L2495.6 404.1 L2501.5 399.1 L2507.5 394.2 L2513.5 389.2 L2519.5 384.2 L2525.4 376.9 L2531.4 369.7 L2537.4 362.5 L2543.4 355.2 L2549.3 348 L2555.3 340.8 L2561.3 333.7 L2567.3 325.8 L2573.2 316.5 L2579.2 307.2 L2585.2 297.9 L2591.2 288.6 L2597.1 279.4 L2603.1 270.2 L2609.1 261 L2615.1 251.8 L2621 242.6 L2627 234.4 L2633 226.7 L2639 219.1 L2644.9 211.4 L2650.9 203.7 L2656.9 196.1 L2662.9 188.4 L2668.8 180.7 L2674.8 173.1 L2680.8 165.4 L2686.8 157.7 L2692.7 150.1 L2698.7 143.6 L2704.7 137.1 L2710.7 130.7 L2716.6 124.2 L2722.6 117.7 M2288.4 623.6 L2294.4 614.6 L2300.3 605.5 L2306.3 596.5 L2312.3 587.5 L2318.3 578.4 L2324.2 569.9 L2330.2 561.7 L2336.2 553.6 L2342.2 545.4 L2348.1 538.3 L2354.1 531.3 L2360.1 524.4 L2366.1 517.4 L2372 510.5 L2378 506.8 L2384 503.2 L2390 499.5 L2395.9 495.8 L2401.9 492.4 L2407.9 489.8 L2413.9 487.2 L2419.8 484.7 L2425.8 482.1 L2431.8 479.7 L2437.8 477.5 L2443.7 475.3 L2449.7 473.1 L2455.7 470.9 L2461.7 468.4 L2467.6 465.9 L2473.6 463.4 L2479.6 460.5 L2485.6 457.3 L2491.5 454.1 L2497.5 451 L2503.5 447.8 L2509.5 444.6 L2515.4 441.4 L2521.4 436.9 L2527.4 432.1 L2533.4 427.4 L2539.3 422.6 L2545.3 417.8 L2551.3 413.1 L2557.3 408.2 L2563.2 401.2 L2569.2 394.2 L2575.2 387.2 L2581.2 380.3 L2587.1 373.3 L2593.1 366.4 L2599.1 359.4 L2605.1 351.9 L2611 342.9 L2617 333.9 L2623 325 L2629 316 L2634.9 307.1 L2640.9 298.3 L2646.9 289.4 L2652.9 280.6 L2658.8 271.7 L2664.8 263.9 L2670.8 256.5 L2676.8 249.1 L2682.7 241.7 L2688.7 234.3 L2694.7 227 L2700.7 219.6 L2706.6 212.2 L2712.6 204.8 L2718.6 197.4 L2724.6 190 L2730.5 182.7 L2736.5 176.5 L2742.5 170.3 L2748.5 164.1 L2754.4 157.9 L2760.4 151.6 M2325.7 638.4 L2331.7 629.8 L2337.6 621.1 L2343.6 612.4 L2349.6 603.7 L2355.6 595.1 L2361.5 586.9 L2367.5 579.1 L2373.5 571.3 L2379.5 563.5 L2385.4 556.7 L2391.4 550.1 L2397.4 543.5 L2403.4 536.9 L2409.3 530.3 L2415.3 526.9 L2421.3 523.4 L2427.3 519.9 L2433.2 516.4 L2439.2 513.1 L2445.2 510.7 L2451.2 508.3 L2457.1 505.9 L2463.1 503.6 L2469.1 501.3 L2475.1 499.2 L2481 497.2 L2487 495.1 L2493 493 L2499 490.6 L2504.9 488.1 L2510.9 485.6 L2516.9 482.8 L2522.9 479.6 L2528.8 476.6 L2534.8 473.5 L2540.8 470.4 L2546.8 467.3 L2552.7 464.1 L2558.7 459.7 L2564.7 455.1 L2570.7 450.4 L2576.6 445.7 L2582.6 441.1 L2588.6 436.4 L2594.6 431.7 L2600.5 424.9 L2606.5 418.1 L2612.5 411.3 L2618.5 404.6 L2624.4 397.8 L2630.4 391.1 L2636.4 384.3 L2642.4 376.9 L2648.3 368.2 L2654.3 359.5 L2660.3 350.9 L2666.3 342.2 L2672.2 333.6 L2678.2 325 L2684.2 316.5 L2690.2 307.9 L2696.1 299.3 L2702.1 291.7 L2708.1 284.6 L2714.1 277.4 L2720 270.3 L2726 263.1 L2732 256 L2738 248.8 L2743.9 241.7 L2749.9 234.5 L2755.9 227.4 L2761.9 220.2 L2767.8 213.2 L2773.8 207.1 L2779.8 201.1 L2785.8 195.1 L2791.7 189.1 L2797.7 183.1 M2363.9 651.2 L2369.9 642.9 L2375.8 634.6 L2381.8 626.3 L2387.8 618 L2393.8 609.7 L2399.7 602 L2405.7 594.5 L2411.7 587.1 L2417.7 579.8 L2423.6 573.3 L2429.6 567.1 L2435.6 560.8 L2441.6 554.5 L2447.5 548.3 L2453.5 545.1 L2459.5 541.8 L2465.5 538.5 L2471.4 535.3 L2477.4 532.2 L2483.4 529.9 L2489.4 527.7 L2495.3 525.5 L2501.3 523.3 L2507.3 521.2 L2513.3 519.3 L2519.2 517.4 L2525.2 515.5 L2531.2 513.6 L2537.2 511.2 L2543.1 508.7 L2549.1 506.3 L2555.1 503.5 L2561.1 500.4 L2567 497.4 L2573 494.4 L2579 491.4 L2585 488.4 L2590.9 485.3 L2596.9 481 L2602.9 476.5 L2608.9 471.9 L2614.8 467.4 L2620.8 462.9 L2626.8 458.4 L2632.8 453.7 L2638.7 447.2 L2644.7 440.6 L2650.7 434 L2656.7 427.5 L2662.6 420.9 L2668.6 414.4 L2674.6 407.8 L2680.6 400.7 L2686.5 392.3 L2692.5 383.9 L2698.5 375.5 L2704.5 367.1 L2710.4 358.8 L2716.4 350.6 L2722.4 342.3 L2728.4 334.1 L2734.3 325.8 L2740.3 318.4 L2746.3 311.5 L2752.3 304.6 L2758.2 297.7 L2764.2 290.8 L2770.2 283.9 L2776.2 277 L2782.1 270.1 L2788.1 263.2 L2794.1 256.3 L2800.1 249.4 L2806 242.6 L2812 236.8 L2818 231 L2824 225.2 L2829.9 219.4 L2835.9 213.6 M2397.8 678.7 L2403.8 670.6 L2409.7 662.4 L2415.7 654.3 L2421.7 646.1 L2427.7 637.9 L2433.6 630.3 L2439.6 622.9 L2445.6 615.7 L2451.6 608.5 L2457.5 602.2 L2463.5 596 L2469.5 589.9 L2475.5 583.8 L2481.4 577.7 L2487.4 574.4 L2493.4 571.1 L2499.4 567.8 L2505.3 564.5 L2511.3 561.4 L2517.3 559 L2523.3 556.8 L2529.2 554.5 L2535.2 552.3 L2541.2 550.1 L2547.2 548.2 L2553.1 546.2 L2559.1 544.3 L2565.1 542.3 L2571.1 539.7 L2577 537 L2583 534.4 L2589 531.4 L2595 528.3 L2600.9 525.1 L2606.9 522 L2612.9 518.8 L2618.9 515.7 L2624.8 512.5 L2630.8 508.1 L2636.8 503.5 L2642.8 498.8 L2648.7 494.2 L2654.7 489.6 L2660.7 485 L2666.7 480.3 L2672.6 473.7 L2678.6 467.1 L2684.6 460.5 L2690.6 453.9 L2696.5 447.4 L2702.5 440.8 L2708.5 434.2 L2714.5 427.1 L2720.4 418.7 L2726.4 410.3 L2732.4 402 L2738.4 393.7 L2744.3 385.5 L2750.3 377.3 L2756.3 369.1 L2762.3 360.9 L2768.2 352.7 L2774.2 345.4 L2780.2 338.5 L2786.2 331.6 L2792.1 324.7 L2798.1 317.8 L2804.1 310.9 L2810.1 304.1 L2816 297.2 L2822 290.3 L2828 283.4 L2834 276.5 L2839.9 269.6 L2845.9 263.8 L2851.9 258 L2857.9 252.3 L2863.8 246.5 L2869.8 240.7 M2431.7 704.3 L2437.7 696.2 L2443.6 688.2 L2449.6 680.2 L2455.6 672.1 L2461.6 664.1 L2467.5 656.5 L2473.5 649.3 L2479.5 642.2 L2485.5 635.2 L2491.4 629 L2497.4 622.9 L2503.4 616.9 L2509.4 610.8 L2515.3 604.8 L2521.3 601.5 L2527.3 598.2 L2533.3 594.8 L2539.2 591.5 L2545.2 588.3 L2551.2 585.9 L2557.2 583.6 L2563.1 581.3 L2569.1 579 L2575.1 576.8 L2581.1 574.8 L2587 572.8 L2593 570.8 L2599 568.6 L2605 565.8 L2610.9 563 L2616.9 560.2 L2622.9 557.1 L2628.9 553.7 L2634.8 550.4 L2640.8 547.1 L2646.8 543.9 L2652.8 540.6 L2658.7 537.2 L2664.7 532.7 L2670.7 528 L2676.7 523.2 L2682.6 518.5 L2688.6 513.8 L2694.6 509.1 L2700.6 504.2 L2706.5 497.6 L2712.5 491 L2718.5 484.4 L2724.5 477.8 L2730.4 471.2 L2736.4 464.6 L2742.4 458 L2748.4 450.8 L2754.3 442.5 L2760.3 434.2 L2766.3 425.9 L2772.3 417.7 L2778.2 409.5 L2784.2 401.3 L2790.2 393.2 L2796.2 385 L2802.1 376.9 L2808.1 369.6 L2814.1 362.7 L2820.1 355.8 L2826 348.9 L2832 342 L2838 335.2 L2844 328.3 L2849.9 321.4 L2855.9 314.5 L2861.9 307.6 L2867.9 300.7 L2873.8 293.8 L2879.8 288 L2885.8 282.2 L2891.8 276.4 L2897.7 270.6 L2903.7 264.8 M2458 714.8 L2464 707 L2469.9 699.1 L2475.9 691.3 L2481.9 683.4 L2487.9 675.5 L2493.8 668.2 L2499.8 661.1 L2505.8 654.2 L2511.8 647.4 L2517.7 641.3 L2523.7 635.5 L2529.7 629.6 L2535.7 623.7 L2541.6 617.9 L2547.6 614.7 L2553.6 611.4 L2559.6 608.1 L2565.5 604.8 L2571.5 601.7 L2577.5 599.4 L2583.5 597 L2589.4 594.8 L2595.4 592.5 L2601.4 590.4 L2607.4 588.4 L2613.3 586.4 L2619.3 584.4 L2625.3 582.4 L2631.3 579.5 L2637.2 576.6 L2643.2 573.8 L2649.2 570.6 L2655.2 567.2 L2661.1 563.9 L2667.1 560.6 L2673.1 557.3 L2679.1 554 L2685 550.6 L2691 546.1 L2697 541.4 L2703 536.6 L2708.9 531.9 L2714.9 527.2 L2720.9 522.5 L2726.9 517.7 L2732.8 511.1 L2738.8 504.6 L2744.8 498 L2750.8 491.5 L2756.7 485 L2762.7 478.4 L2768.7 471.9 L2774.7 464.8 L2780.6 456.6 L2786.6 448.4 L2792.6 440.2 L2798.6 432.1 L2804.5 424.1 L2810.5 416.1 L2816.5 408 L2822.5 400 L2828.4 392 L2834.4 384.8 L2840.4 378 L2846.4 371.2 L2852.3 364.4 L2858.3 357.6 L2864.3 350.8 L2870.3 344 L2876.2 337.2 L2882.2 330.4 L2888.2 323.6 L2894.2 316.8 L2900.1 310.1 L2906.1 304.3 L2912.1 298.6 L2918.1 292.9 L2924 287.1 L2930 281.4 M2486.9 725.4 L2492.9 717.7 L2498.8 710 L2504.8 702.4 L2510.8 694.7 L2516.8 687 L2522.7 679.7 L2528.7 672.9 L2534.7 666.2 L2540.7 659.5 L2546.6 653.6 L2552.6 647.9 L2558.6 642.2 L2564.6 636.4 L2570.5 630.8 L2576.5 627.6 L2582.5 624.3 L2588.5 621.1 L2594.4 617.8 L2600.4 614.8 L2606.4 612.4 L2612.4 610.1 L2618.3 607.9 L2624.3 605.6 L2630.3 603.5 L2636.3 601.5 L2642.2 599.5 L2648.2 597.5 L2654.2 595.5 L2660.2 592.5 L2666.1 589.5 L2672.1 586.6 L2678.1 583.3 L2684.1 579.8 L2690 576.5 L2696 573.1 L2702 569.7 L2708 566.4 L2713.9 562.9 L2719.9 558.4 L2725.9 553.6 L2731.9 548.9 L2737.8 544.1 L2743.8 539.4 L2749.8 534.7 L2755.8 529.8 L2761.7 523.3 L2767.7 516.8 L2773.7 510.3 L2779.7 503.8 L2785.6 497.3 L2791.6 490.8 L2797.6 484.3 L2803.6 477.3 L2809.5 469.2 L2815.5 461 L2821.5 453 L2827.5 445 L2833.4 437.1 L2839.4 429.1 L2845.4 421.2 L2851.4 413.3 L2857.3 405.4 L2863.3 398.3 L2869.3 391.6 L2875.3 384.8 L2881.2 378.1 L2887.2 371.4 L2893.2 364.7 L2899.2 357.9 L2905.1 351.2 L2911.1 344.4 L2917.1 337.7 L2923.1 330.9 L2929 324.3 L2935 318.6 L2941 312.9 L2947 307.2 L2952.9 301.5 L2958.9 295.8 M2527.1 742.4 L2533.1 735.1 L2539 727.8 L2545 720.5 L2551 713.2 L2557 705.9 L2562.9 699 L2568.9 692.5 L2574.9 686.3 L2580.9 680 L2586.8 674.5 L2592.8 669.1 L2598.8 663.7 L2604.8 658.3 L2610.7 653 L2616.7 650.1 L2622.7 647 L2628.7 643.9 L2634.6 640.9 L2640.6 638 L2646.6 635.8 L2652.6 633.6 L2658.5 631.5 L2664.5 629.5 L2670.5 627.5 L2676.5 625.7 L2682.4 623.8 L2688.4 622 L2694.4 620.1 L2700.4 617.1 L2706.3 614.2 L2712.3 611.2 L2718.3 607.9 L2724.3 604.5 L2730.2 601.2 L2736.2 597.9 L2742.2 594.6 L2748.2 591.4 L2754.1 588 L2760.1 583.5 L2766.1 578.9 L2772.1 574.3 L2778 569.6 L2784 565 L2790 560.4 L2796 555.6 L2801.9 549.3 L2807.9 543 L2813.9 536.7 L2819.9 530.4 L2825.8 524.1 L2831.8 517.8 L2837.8 511.5 L2843.8 504.7 L2849.7 496.9 L2855.7 489 L2861.7 481.2 L2867.7 473.6 L2873.6 465.9 L2879.6 458.3 L2885.6 450.7 L2891.6 443.1 L2897.5 435.5 L2903.5 428.6 L2909.5 422.1 L2915.5 415.6 L2921.4 409.1 L2927.4 402.6 L2933.4 396.1 L2939.4 389.6 L2945.3 383.1 L2951.3 376.6 L2957.3 370.1 L2963.3 363.6 L2969.2 357.2 L2975.2 351.7 L2981.2 346.2 L2987.2 340.7 L2993.1 335.3 L2999.1 329.8 M2566.6 769.9 L2572.6 762.8 L2578.5 755.6 L2584.5 748.5 L2590.5 741.4 L2596.5 734.3 L2602.4 727.5 L2608.4 721.2 L2614.4 715.1 L2620.4 709.1 L2626.3 703.7 L2632.3 698.5 L2638.3 693.3 L2644.3 688.1 L2650.2 682.9 L2656.2 679.9 L2662.2 676.9 L2668.2 673.8 L2674.1 670.8 L2680.1 667.9 L2686.1 665.6 L2692.1 663.4 L2698 661.3 L2704 659.2 L2710 657.2 L2716 655.3 L2721.9 653.5 L2727.9 651.6 L2733.9 649.6 L2739.9 646.4 L2745.8 643.3 L2751.8 640.2 L2757.8 636.7 L2763.8 633.2 L2769.7 629.8 L2775.7 626.3 L2781.7 622.9 L2787.7 619.5 L2793.6 616 L2799.6 611.4 L2805.6 606.7 L2811.6 602 L2817.5 597.3 L2823.5 592.6 L2829.5 587.9 L2835.5 583.1 L2841.4 576.8 L2847.4 570.5 L2853.4 564.2 L2859.4 557.9 L2865.3 551.6 L2871.3 545.3 L2877.3 538.9 L2883.3 532.2 L2889.2 524.4 L2895.2 516.6 L2901.2 508.9 L2907.2 501.4 L2913.1 493.8 L2919.1 486.3 L2925.1 478.8 L2931.1 471.3 L2937 463.8 L2943 457 L2949 450.5 L2955 444.1 L2960.9 437.6 L2966.9 431.2 L2972.9 424.7 L2978.9 418.3 L2984.8 411.8 L2990.8 405.3 L2996.8 398.8 L3002.8 392.4 L3008.7 386 L3014.7 380.5 L3020.7 375.1 L3026.7 369.6 L3032.6 364.2 L3038.6 358.7 M2602.2 780.5 L2608.2 773.6 L2614.1 766.6 L2620.1 759.7 L2626.1 752.7 L2632.1 745.7 L2638 739.2 L2644 733 L2650 727.1 L2656 721.2 L2661.9 716 L2667.9 710.9 L2673.9 705.9 L2679.9 700.8 L2685.8 695.8 L2691.8 692.8 L2697.8 689.8 L2703.8 686.7 L2709.7 683.7 L2715.7 680.7 L2721.7 678.4 L2727.7 676.2 L2733.6 674.1 L2739.6 672 L2745.6 669.9 L2751.6 668 L2757.5 666.1 L2763.5 664.2 L2769.5 662.2 L2775.5 658.9 L2781.4 655.6 L2787.4 652.3 L2793.4 648.7 L2799.4 645 L2805.3 641.5 L2811.3 638 L2817.3 634.4 L2823.3 630.9 L2829.2 627.3 L2835.2 622.6 L2841.2 617.9 L2847.2 613.1 L2853.1 608.3 L2859.1 603.5 L2865.1 598.7 L2871.1 593.8 L2877 587.6 L2883 581.3 L2889 575 L2895 568.7 L2900.9 562.4 L2906.9 556.1 L2912.9 549.8 L2918.9 543 L2924.8 535.3 L2930.8 527.6 L2936.8 520 L2942.8 512.6 L2948.7 505.1 L2954.7 497.7 L2960.7 490.3 L2966.7 482.9 L2972.6 475.4 L2978.6 468.7 L2984.6 462.3 L2990.6 455.9 L2996.5 449.5 L3002.5 443 L3008.5 436.6 L3014.5 430.2 L3020.4 423.8 L3026.4 417.3 L3032.4 410.9 L3038.4 404.5 L3044.3 398.1 L3050.3 392.7 L3056.3 387.3 L3062.3 381.8 L3068.2 376.4 L3074.2 370.9 M2634.4 801.8 L2640.4 794.8 L2646.3 787.8 L2652.3 780.8 L2658.3 773.9 L2664.3 766.9 L2670.2 760.3 L2676.2 754.1 L2682.2 748.2 L2688.2 742.3 L2694.1 737.1 L2700.1 732 L2706.1 726.9 L2712.1 721.8 L2718 716.7 L2724 713.6 L2730 710.4 L2736 707.2 L2741.9 704 L2747.9 700.9 L2753.9 698.4 L2759.9 696 L2765.8 693.7 L2771.8 691.4 L2777.8 689.1 L2783.8 687 L2789.7 684.9 L2795.7 682.8 L2801.7 680.6 L2807.7 677 L2813.6 673.3 L2819.6 669.7 L2825.6 665.8 L2831.6 661.9 L2837.5 658.1 L2843.5 654.3 L2849.5 650.5 L2855.5 646.7 L2861.4 642.8 L2867.4 638 L2873.4 632.9 L2879.4 627.9 L2885.3 622.9 L2891.3 617.9 L2897.3 612.9 L2903.3 607.8 L2909.2 601.3 L2915.2 594.9 L2921.2 588.4 L2927.2 582 L2933.1 575.5 L2939.1 569.1 L2945.1 562.6 L2951.1 555.7 L2957 547.9 L2963 540.1 L2969 532.4 L2975 524.9 L2980.9 517.3 L2986.9 509.8 L2992.9 502.3 L2998.9 494.8 L3004.8 487.3 L3010.8 480.5 L3016.8 474 L3022.8 467.4 L3028.7 460.9 L3034.7 454.3 L3040.7 447.8 L3046.7 441.2 L3052.6 434.7 L3058.6 428.1 L3064.6 421.6 L3070.6 415 L3076.5 408.5 L3082.5 402.9 L3088.5 397.3 L3094.5 391.8 L3100.4 386.2 L3106.4 380.6 M2681.9 818.7 L2687.9 811.8 L2693.8 805 L2699.8 798.1 L2705.8 791.3 L2711.8 784.4 L2717.7 777.9 L2723.7 771.8 L2729.7 766 L2735.7 760.3 L2741.6 755.2 L2747.6 750.1 L2753.6 745.1 L2759.6 740.1 L2765.5 735.1 L2771.5 731.9 L2777.5 728.6 L2783.5 725.2 L2789.4 721.9 L2795.4 718.7 L2801.4 716 L2807.4 713.5 L2813.3 711 L2819.3 708.6 L2825.3 706.2 L2831.3 704 L2837.2 701.7 L2843.2 699.5 L2849.2 697 L2855.2 693.1 L2861.1 689.1 L2867.1 685.2 L2873.1 681 L2879.1 676.8 L2885 672.7 L2891 668.7 L2897 664.6 L2903 660.6 L2908.9 656.4 L2914.9 651.3 L2920.9 646.1 L2926.9 640.9 L2932.8 635.6 L2938.8 630.4 L2944.8 625.2 L2950.8 619.9 L2956.7 613.4 L2962.7 606.8 L2968.7 600.3 L2974.7 593.7 L2980.6 587.2 L2986.6 580.6 L2992.6 574 L2998.6 567 L3004.5 559.2 L3010.5 551.4 L3016.5 543.7 L3022.5 536.2 L3028.4 528.7 L3034.4 521.2 L3040.4 513.7 L3046.4 506.2 L3052.3 498.7 L3058.3 491.9 L3064.3 485.3 L3070.3 478.7 L3076.2 472.1 L3082.2 465.5 L3088.2 458.9 L3094.2 452.3 L3100.1 445.6 L3106.1 439 L3112.1 432.4 L3118.1 425.8 L3124 419.3 L3130 413.6 L3136 407.9 L3142 402.2 L3147.9 396.5 L3153.9 390.8 M2728.6 842 L2734.6 835.1 L2740.5 828.3 L2746.5 821.4 L2752.5 814.5 L2758.5 807.7 L2764.4 801.1 L2770.4 795 L2776.4 789.3 L2782.4 783.5 L2788.3 778.4 L2794.3 773.3 L2800.3 768.3 L2806.3 763.2 L2812.2 758.2 L2818.2 754.8 L2824.2 751.2 L2830.2 747.6 L2836.1 744.1 L2842.1 740.6 L2848.1 737.7 L2854.1 734.9 L2860 732.2 L2866 729.5 L2872 726.8 L2878 724.3 L2883.9 721.8 L2889.9 719.3 L2895.9 716.5 L2901.9 712.1 L2907.8 707.7 L2913.8 703.4 L2919.8 698.7 L2925.8 694.2 L2931.7 689.7 L2937.7 685.3 L2943.7 680.9 L2949.7 676.4 L2955.6 671.9 L2961.6 666.5 L2967.6 660.9 L2973.6 655.4 L2979.5 649.8 L2985.5 644.3 L2991.5 638.7 L2997.5 633.1 L3003.4 626.4 L3009.4 619.6 L3015.4 612.9 L3021.4 606.1 L3027.3 599.3 L3033.3 592.5 L3039.3 585.7 L3045.3 578.5 L3051.2 570.6 L3057.2 562.6 L3063.2 554.8 L3069.2 547.2 L3075.1 539.6 L3081.1 532 L3087.1 524.4 L3093.1 516.8 L3099 509.2 L3105 502.2 L3111 495.4 L3117 488.7 L3122.9 481.9 L3128.9 475.1 L3134.9 468.3 L3140.9 461.6 L3146.8 454.8 L3152.8 448 L3158.8 441.2 L3164.8 434.4 L3170.7 427.7 L3176.7 421.8 L3182.7 415.9 L3188.7 410 L3194.6 404.1 L3200.6 398.2 M2771 856.4 L2777 849.6 L2782.9 842.8 L2788.9 836 L2794.9 829.2 L2800.9 822.3 L2806.8 815.8 L2812.8 809.7 L2818.8 804.1 L2824.8 798.5 L2830.7 793.3 L2836.7 788.3 L2842.7 783.3 L2848.7 778.2 L2854.6 773.2 L2860.6 769.7 L2866.6 766 L2872.6 762.3 L2878.5 758.6 L2884.5 755 L2890.5 751.8 L2896.5 748.8 L2902.4 745.9 L2908.4 743 L2914.4 740.2 L2920.4 737.5 L2926.3 734.8 L2932.3 732.1 L2938.3 729.2 L2944.3 724.4 L2950.2 719.7 L2956.2 715 L2962.2 710 L2968.2 705.1 L2974.1 700.4 L2980.1 695.7 L2986.1 691 L2992.1 686.3 L2998 681.5 L3004 675.8 L3010 670 L3016 664.2 L3021.9 658.5 L3027.9 652.7 L3033.9 646.9 L3039.9 641.1 L3045.8 634.2 L3051.8 627.3 L3057.8 620.4 L3063.8 613.5 L3069.7 606.6 L3075.7 599.6 L3081.7 592.6 L3087.7 585.4 L3093.6 577.4 L3099.6 569.4 L3105.6 561.5 L3111.6 553.9 L3117.5 546.2 L3123.5 538.6 L3129.5 531 L3135.5 523.3 L3141.4 515.7 L3147.4 508.6 L3153.4 501.7 L3159.4 494.8 L3165.3 488 L3171.3 481.1 L3177.3 474.2 L3183.3 467.3 L3189.2 460.4 L3195.2 453.5 L3201.2 446.6 L3207.2 439.7 L3213.1 433 L3219.1 426.9 L3225.1 420.9 L3231.1 414.9 L3237 408.9 L3243 402.9 M2801.5 855.2 L2807.5 848.5 L2813.4 841.9 L2819.4 835.2 L2825.4 828.6 L2831.4 822 L2837.3 815.6 L2843.3 809.7 L2849.3 804.2 L2855.3 798.8 L2861.2 793.8 L2867.2 788.9 L2873.2 784 L2879.2 779.2 L2885.1 774.3 L2891.1 770.8 L2897.1 767.1 L2903.1 763.4 L2909 759.8 L2915 756.2 L2921 753.1 L2927 750 L2932.9 747.2 L2938.9 744.3 L2944.9 741.5 L2950.9 738.8 L2956.8 736.1 L2962.8 733.4 L2968.8 730.4 L2974.8 725.6 L2980.7 720.7 L2986.7 715.9 L2992.7 710.9 L2998.7 705.9 L3004.6 701.1 L3010.6 696.4 L3016.6 691.6 L3022.6 686.8 L3028.5 681.9 L3034.5 676.2 L3040.5 670.4 L3046.5 664.6 L3052.4 658.8 L3058.4 652.9 L3064.4 647.1 L3070.4 641.3 L3076.3 634.4 L3082.3 627.6 L3088.3 620.7 L3094.3 613.9 L3100.2 606.9 L3106.2 600 L3112.2 593.1 L3118.2 585.9 L3124.1 578 L3130.1 570.1 L3136.1 562.3 L3142.1 554.8 L3148 547.2 L3154 539.7 L3160 532.2 L3166 524.7 L3171.9 517.2 L3177.9 510.1 L3183.9 503.3 L3189.9 496.5 L3195.8 489.7 L3201.8 482.9 L3207.8 476.1 L3213.8 469.3 L3219.7 462.4 L3225.7 455.6 L3231.7 448.7 L3237.7 441.9 L3243.6 435.2 L3249.6 429.2 L3255.6 423.3 L3261.6 417.3 L3267.5 411.3 L3273.5 405.4 M2824.8 853.3 L2830.8 846.8 L2836.7 840.3 L2842.7 833.8 L2848.7 827.3 L2854.7 820.8 L2860.6 814.5 L2866.6 808.7 L2872.6 803.4 L2878.6 798.1 L2884.5 793.3 L2890.5 788.5 L2896.5 783.8 L2902.5 779 L2908.4 774.3 L2914.4 770.8 L2920.4 767.2 L2926.4 763.5 L2932.3 759.9 L2938.3 756.3 L2944.3 753.2 L2950.3 750.2 L2956.2 747.3 L2962.2 744.5 L2968.2 741.6 L2974.2 738.9 L2980.1 736.2 L2986.1 733.5 L2992.1 730.6 L2998.1 725.7 L3004 720.8 L3010 715.8 L3016 710.7 L3022 705.7 L3027.9 700.9 L3033.9 696.1 L3039.9 691.3 L3045.9 686.4 L3051.8 681.5 L3057.8 675.8 L3063.8 669.9 L3069.8 664.1 L3075.7 658.3 L3081.7 652.4 L3087.7 646.6 L3093.7 640.7 L3099.6 633.9 L3105.6 627.1 L3111.6 620.3 L3117.6 613.4 L3123.5 606.6 L3129.5 599.7 L3135.5 592.8 L3141.5 585.6 L3147.4 577.8 L3153.4 569.9 L3159.4 562.3 L3165.4 554.8 L3171.3 547.4 L3177.3 539.9 L3183.3 532.5 L3189.3 525.1 L3195.2 517.7 L3201.2 510.7 L3207.2 503.9 L3213.2 497.2 L3219.1 490.4 L3225.1 483.7 L3231.1 476.9 L3237.1 470.1 L3243 463.4 L3249 456.6 L3255 449.8 L3261 443 L3266.9 436.3 L3272.9 430.4 L3278.9 424.5 L3284.9 418.6 L3290.8 412.6 L3296.8 406.7 M2867.2 843.6 L2873.2 837.1 L2879.1 830.7 L2885.1 824.3 L2891.1 817.9 L2897.1 811.5 L2903 805.3 L2909 799.6 L2915 794.5 L2921 789.3 L2926.9 784.5 L2932.9 779.8 L2938.9 775.1 L2944.9 770.4 L2950.8 765.8 L2956.8 762.2 L2962.8 758.5 L2968.8 754.7 L2974.7 751 L2980.7 747.3 L2986.7 744 L2992.7 740.8 L2998.6 737.9 L3004.6 734.9 L3010.6 731.9 L3016.6 729.1 L3022.5 726.2 L3028.5 723.4 L3034.5 720.3 L3040.5 715.1 L3046.4 709.8 L3052.4 704.6 L3058.4 699.2 L3064.4 694 L3070.3 688.9 L3076.3 683.9 L3082.3 678.8 L3088.3 673.8 L3094.2 668.6 L3100.2 662.6 L3106.2 656.6 L3112.2 650.6 L3118.1 644.6 L3124.1 638.5 L3130.1 632.5 L3136.1 626.5 L3142 619.6 L3148 612.6 L3154 605.7 L3160 598.8 L3165.9 591.8 L3171.9 584.8 L3177.9 577.8 L3183.9 570.6 L3189.8 562.7 L3195.8 554.9 L3201.8 547.2 L3207.8 539.8 L3213.7 532.3 L3219.7 524.9 L3225.7 517.5 L3231.7 510.1 L3237.6 502.7 L3243.6 495.6 L3249.6 488.8 L3255.6 482 L3261.5 475.2 L3267.5 468.4 L3273.5 461.6 L3279.5 454.8 L3285.4 447.9 L3291.4 441.1 L3297.4 434.2 L3303.4 427.4 L3309.3 420.7 L3315.3 414.7 L3321.3 408.7 L3327.3 402.7 L3333.2 396.6 L3339.2 390.6 M2907.5 835.9 L2913.5 829.7 L2919.4 823.4 L2925.4 817.2 L2931.4 810.9 L2937.4 804.7 L2943.3 798.6 L2949.3 793.1 L2955.3 788.1 L2961.3 783.1 L2967.2 778.5 L2973.2 773.9 L2979.2 769.4 L2985.2 764.8 L2991.1 760.3 L2997.1 756.7 L3003.1 753 L3009.1 749.2 L3015 745.4 L3021 741.7 L3027 738.3 L3033 735.1 L3038.9 732.1 L3044.9 729 L3050.9 726 L3056.9 723.1 L3062.8 720.2 L3068.8 717.3 L3074.8 714.1 L3080.8 708.7 L3086.7 703.3 L3092.7 697.8 L3098.7 692.2 L3104.7 686.8 L3110.6 681.6 L3116.6 676.4 L3122.6 671.2 L3128.6 666 L3134.5 660.6 L3140.5 654.6 L3146.5 648.4 L3152.5 642.3 L3158.4 636.2 L3164.4 630 L3170.4 623.9 L3176.4 617.8 L3182.3 610.8 L3188.3 603.9 L3194.3 597 L3200.3 590 L3206.2 583 L3212.2 576 L3218.2 569 L3224.2 561.7 L3230.1 553.9 L3236.1 546.2 L3242.1 538.6 L3248.1 531.2 L3254 523.8 L3260 516.5 L3266 509.2 L3272 501.8 L3277.9 494.5 L3283.9 487.5 L3289.9 480.7 L3295.9 473.9 L3301.8 467.1 L3307.8 460.3 L3313.8 453.5 L3319.8 446.7 L3325.7 439.9 L3331.7 433.1 L3337.7 426.2 L3343.7 419.4 L3349.6 412.7 L3355.6 406.7 L3361.6 400.7 L3367.6 394.7 L3373.5 388.7 L3379.5 382.6 M2939.3 838.6 L2945.3 832.4 L2951.2 826.3 L2957.2 820.1 L2963.2 813.9 L2969.2 807.7 L2975.1 801.7 L2981.1 796.2 L2987.1 791.3 L2993.1 786.4 L2999 781.8 L3005 777.3 L3011 772.8 L3017 768.3 L3022.9 763.8 L3028.9 760.2 L3034.9 756.3 L3040.9 752.5 L3046.8 748.6 L3052.8 744.8 L3058.8 741.3 L3064.8 738 L3070.7 734.9 L3076.7 731.7 L3082.7 728.6 L3088.7 725.6 L3094.6 722.6 L3100.6 719.6 L3106.6 716.2 L3112.6 710.6 L3118.5 704.9 L3124.5 699.2 L3130.5 693.4 L3136.5 687.8 L3142.4 682.5 L3148.4 677.1 L3154.4 671.7 L3160.4 666.3 L3166.3 660.7 L3172.3 654.5 L3178.3 648.2 L3184.3 642 L3190.2 635.7 L3196.2 629.4 L3202.2 623.2 L3208.2 616.9 L3214.1 609.8 L3220.1 602.8 L3226.1 595.8 L3232.1 588.8 L3238 581.7 L3244 574.6 L3250 567.5 L3256 560.2 L3261.9 552.4 L3267.9 544.6 L3273.9 537 L3279.9 529.6 L3285.8 522.3 L3291.8 514.9 L3297.8 507.6 L3303.8 500.2 L3309.7 492.9 L3315.7 485.9 L3321.7 479.1 L3327.7 472.2 L3333.6 465.4 L3339.6 458.5 L3345.6 451.7 L3351.6 444.8 L3357.5 438 L3363.5 431.1 L3369.5 424.2 L3375.5 417.3 L3381.4 410.6 L3387.4 404.5 L3393.4 398.4 L3399.4 392.3 L3405.3 386.3 L3411.3 380.2 M2973.2 841.5 L2979.2 835.4 L2985.1 829.3 L2991.1 823.2 L2997.1 817.1 L3003.1 811 L3009 805.1 L3015 799.7 L3021 794.9 L3027 790.1 L3032.9 785.6 L3038.9 781.2 L3044.9 776.7 L3050.9 772.3 L3056.8 767.9 L3062.8 764.2 L3068.8 760.2 L3074.8 756.3 L3080.7 752.4 L3086.7 748.5 L3092.7 744.9 L3098.7 741.5 L3104.6 738.3 L3110.6 735 L3116.6 731.8 L3122.6 728.7 L3128.5 725.6 L3134.5 722.5 L3140.5 719 L3146.5 713.1 L3152.4 707.3 L3158.4 701.4 L3164.4 695.3 L3170.4 689.6 L3176.3 684 L3182.3 678.4 L3188.3 672.9 L3194.3 667.3 L3200.2 661.6 L3206.2 655.2 L3212.2 648.8 L3218.2 642.4 L3224.1 636 L3230.1 629.6 L3236.1 623.2 L3242.1 616.7 L3248 609.7 L3254 602.6 L3260 595.5 L3266 588.4 L3271.9 581.3 L3277.9 574.1 L3283.9 567 L3289.9 559.6 L3295.8 551.8 L3301.8 544 L3307.8 536.4 L3313.8 529.1 L3319.7 521.7 L3325.7 514.4 L3331.7 507.1 L3337.7 499.8 L3343.6 492.4 L3349.6 485.4 L3355.6 478.6 L3361.6 471.7 L3367.5 464.8 L3373.5 457.9 L3379.5 451.1 L3385.5 444.2 L3391.4 437.3 L3397.4 430.4 L3403.4 423.4 L3409.4 416.5 L3415.3 409.8 L3421.3 403.6 L3427.3 397.5 L3433.3 391.4 L3439.2 385.2 L3445.2 379.1 M3009.3 840 L3015.3 834.2 L3021.2 828.4 L3027.2 822.6 L3033.2 816.8 L3039.2 811 L3045.1 805.4 L3051.1 800.3 L3057.1 795.8 L3063.1 791.3 L3069 787.1 L3075 782.9 L3081 778.8 L3087 774.6 L3092.9 770.5 L3098.9 766.9 L3104.9 763.1 L3110.9 759.3 L3116.8 755.5 L3122.8 751.8 L3128.8 748.3 L3134.8 744.9 L3140.7 741.8 L3146.7 738.7 L3152.7 735.6 L3158.7 732.6 L3164.6 729.5 L3170.6 726.5 L3176.6 723.1 L3182.6 717.2 L3188.5 711.3 L3194.5 705.4 L3200.5 699.3 L3206.5 693.6 L3212.4 688 L3218.4 682.5 L3224.4 676.9 L3230.4 671.4 L3236.3 665.7 L3242.3 659.4 L3248.3 653 L3254.3 646.6 L3260.2 640.3 L3266.2 633.9 L3272.2 627.6 L3278.2 621.2 L3284.1 614.3 L3290.1 607.3 L3296.1 600.4 L3302.1 593.5 L3308 586.5 L3314 579.4 L3320 572.4 L3326 565.2 L3331.9 557.6 L3337.9 550 L3343.9 542.6 L3349.9 535.5 L3355.8 528.4 L3361.8 521.3 L3367.8 514.2 L3373.8 507.1 L3379.7 500 L3385.7 493.2 L3391.7 486.5 L3397.7 479.8 L3403.6 473.1 L3409.6 466.4 L3415.6 459.7 L3421.6 452.9 L3427.5 446.2 L3433.5 439.5 L3439.5 432.7 L3445.5 426 L3451.4 419.4 L3457.4 413.4 L3463.4 407.4 L3469.4 401.4 L3475.3 395.4 L3481.3 389.4 M3043.2 838.6 L3049.2 833 L3055.1 827.5 L3061.1 821.9 L3067.1 816.4 L3073.1 810.9 L3079 805.4 L3085 800.6 L3091 796.4 L3097 792.2 L3102.9 788.2 L3108.9 784.2 L3114.9 780.3 L3120.9 776.4 L3126.8 772.4 L3132.8 769 L3138.8 765.3 L3144.8 761.6 L3150.7 757.9 L3156.7 754.2 L3162.7 750.8 L3168.7 747.5 L3174.6 744.4 L3180.6 741.4 L3186.6 738.4 L3192.6 735.4 L3198.5 732.4 L3204.5 729.4 L3210.5 726.1 L3216.5 720.1 L3222.4 714.1 L3228.4 708.2 L3234.4 702.1 L3240.4 696.3 L3246.3 690.7 L3252.3 685.1 L3258.3 679.6 L3264.3 674 L3270.2 668.3 L3276.2 662 L3282.2 655.6 L3288.2 649.3 L3294.1 643 L3300.1 636.6 L3306.1 630.3 L3312.1 624 L3318 617.1 L3324 610.3 L3330 603.5 L3336 596.6 L3341.9 589.7 L3347.9 582.8 L3353.9 575.8 L3359.9 568.7 L3365.8 561.3 L3371.8 553.8 L3377.8 546.6 L3383.8 539.7 L3389.7 532.8 L3395.7 525.9 L3401.7 518.9 L3407.7 512 L3413.6 505.1 L3419.6 498.4 L3425.6 491.8 L3431.6 485.3 L3437.5 478.7 L3443.5 472.1 L3449.5 465.6 L3455.5 459 L3461.4 452.3 L3467.4 445.7 L3473.4 439.1 L3479.4 432.5 L3485.3 426 L3491.3 420.2 L3497.3 414.3 L3503.3 408.4 L3509.2 402.5 L3515.2 396.6 M3077.1 832.9 L3083.1 827.6 L3089 822.2 L3095 816.8 L3101 811.5 L3107 806.1 L3112.9 800.8 L3118.9 796.2 L3124.9 792.1 L3130.9 788.1 L3136.8 784.3 L3142.8 780.5 L3148.8 776.7 L3154.8 773 L3160.7 769.2 L3166.7 765.8 L3172.7 762.1 L3178.7 758.4 L3184.6 754.7 L3190.6 751.1 L3196.6 747.6 L3202.6 744.3 L3208.5 741.3 L3214.5 738.2 L3220.5 735.2 L3226.5 732.2 L3232.4 729.2 L3238.4 726.2 L3244.4 722.9 L3250.4 716.8 L3256.3 710.6 L3262.3 704.5 L3268.3 698.3 L3274.3 692.4 L3280.2 686.8 L3286.2 681.1 L3292.2 675.5 L3298.2 669.8 L3304.1 664 L3310.1 657.6 L3316.1 651.2 L3322.1 644.8 L3328 638.5 L3334 632.1 L3340 625.7 L3346 619.3 L3351.9 612.5 L3357.9 605.7 L3363.9 598.9 L3369.9 592.1 L3375.8 585.2 L3381.8 578.3 L3387.8 571.3 L3393.8 564.3 L3399.7 556.9 L3405.7 549.6 L3411.7 542.5 L3417.7 535.7 L3423.6 528.9 L3429.6 522.1 L3435.6 515.2 L3441.6 508.4 L3447.5 501.6 L3453.5 495 L3459.5 488.5 L3465.5 482 L3471.4 475.5 L3477.4 469 L3483.4 462.5 L3489.4 455.9 L3495.3 449.3 L3501.3 442.8 L3507.3 436.2 L3513.3 429.7 L3519.2 423.3 L3525.2 417.4 L3531.2 411.6 L3537.2 405.7 L3543.1 399.9 L3549.1 394.1 M3111 827 L3117 821.8 L3122.9 816.6 L3128.9 811.5 L3134.9 806.3 L3140.9 801.1 L3146.8 796.1 L3152.8 791.6 L3158.8 787.8 L3164.8 784 L3170.7 780.3 L3176.7 776.7 L3182.7 773.1 L3188.7 769.5 L3194.6 766 L3200.6 762.6 L3206.6 758.9 L3212.6 755.3 L3218.5 751.6 L3224.5 748 L3230.5 744.6 L3236.5 741.3 L3242.4 738.3 L3248.4 735.2 L3254.4 732.2 L3260.4 729.2 L3266.3 726.3 L3272.3 723.3 L3278.3 719.9 L3284.3 713.7 L3290.2 707.5 L3296.2 701.2 L3302.2 694.9 L3308.2 688.9 L3314.1 683.2 L3320.1 677.5 L3326.1 671.8 L3332.1 666.1 L3338 660.2 L3344 653.8 L3350 647.4 L3356 640.9 L3361.9 634.5 L3367.9 628.1 L3373.9 621.7 L3379.9 615.3 L3385.8 608.6 L3391.8 601.8 L3397.8 595 L3403.8 588.3 L3409.7 581.4 L3415.7 574.5 L3421.7 567.7 L3427.7 560.7 L3433.6 553.4 L3439.6 546.2 L3445.6 539.2 L3451.6 532.5 L3457.5 525.8 L3463.5 519.2 L3469.5 512.5 L3475.5 505.8 L3481.4 499.1 L3487.4 492.6 L3493.4 486.2 L3499.4 479.7 L3505.3 473.3 L3511.3 466.9 L3517.3 460.4 L3523.3 454 L3529.2 447.5 L3535.2 441 L3541.2 434.5 L3547.2 428 L3553.1 421.7 L3559.1 415.9 L3565.1 410.1 L3571.1 404.4 L3577 398.6 L3583 392.8 M3145 822.6 L3151 817.7 L3156.9 812.7 L3162.9 807.8 L3168.9 802.8 L3174.9 797.8 L3180.8 793 L3186.8 788.7 L3192.8 785.1 L3198.8 781.5 L3204.7 778.1 L3210.7 774.7 L3216.7 771.3 L3222.7 767.9 L3228.6 764.5 L3234.6 761.1 L3240.6 757.5 L3246.6 754 L3252.5 750.4 L3258.5 746.8 L3264.5 743.3 L3270.5 740.1 L3276.4 737.1 L3282.4 734.1 L3288.4 731.1 L3294.4 728.1 L3300.3 725.2 L3306.3 722.2 L3312.3 718.9 L3318.3 712.5 L3324.2 706.2 L3330.2 699.8 L3336.2 693.4 L3342.2 687.4 L3348.1 681.6 L3354.1 675.9 L3360.1 670.1 L3366.1 664.3 L3372 658.3 L3378 651.9 L3384 645.5 L3390 639.1 L3395.9 632.6 L3401.9 626.2 L3407.9 619.8 L3413.9 613.4 L3419.8 606.7 L3425.8 600 L3431.8 593.3 L3437.8 586.6 L3443.7 579.8 L3449.7 572.9 L3455.7 566.1 L3461.7 559.2 L3467.6 552.1 L3473.6 545 L3479.6 538.1 L3485.6 531.6 L3491.5 525 L3497.5 518.5 L3503.5 511.9 L3509.5 505.4 L3515.4 498.8 L3521.4 492.4 L3527.4 486.1 L3533.4 479.7 L3539.3 473.4 L3545.3 467 L3551.3 460.7 L3557.3 454.3 L3563.2 447.9 L3569.2 441.5 L3575.2 435.1 L3581.2 428.7 L3587.1 422.5 L3593.1 416.8 L3599.1 411.1 L3605.1 405.4 L3611 399.6 L3617 393.9 M3178.9 818.4 L3184.9 813.7 L3190.8 808.9 L3196.8 804.2 L3202.8 799.4 L3208.8 794.7 L3214.7 790 L3220.7 785.9 L3226.7 782.6 L3232.7 779.2 L3238.6 776 L3244.6 772.8 L3250.6 769.6 L3256.6 766.4 L3262.5 763.1 L3268.5 759.9 L3274.5 756.4 L3280.5 752.8 L3286.4 749.3 L3292.4 745.8 L3298.4 742.3 L3304.4 739.1 L3310.3 736.1 L3316.3 733.2 L3322.3 730.2 L3328.3 727.3 L3334.2 724.3 L3340.2 721.4 L3346.2 718.1 L3352.2 711.6 L3358.1 705.2 L3364.1 698.7 L3370.1 692.2 L3376.1 686.1 L3382 680.3 L3388 674.5 L3394 668.7 L3400 662.9 L3405.9 656.8 L3411.9 650.4 L3417.9 643.9 L3423.9 637.5 L3429.8 631 L3435.8 624.6 L3441.8 618.2 L3447.8 611.7 L3453.7 605.1 L3459.7 598.5 L3465.7 591.8 L3471.7 585.2 L3477.6 578.4 L3483.6 571.7 L3489.6 564.9 L3495.6 558 L3501.5 551.1 L3507.5 544.1 L3513.5 537.4 L3519.5 531 L3525.4 524.6 L3531.4 518.2 L3537.4 511.8 L3543.4 505.4 L3549.3 499 L3555.3 492.7 L3561.3 486.4 L3567.3 480.2 L3573.2 473.9 L3579.2 467.7 L3585.2 461.4 L3591.2 455.1 L3597.1 448.8 L3603.1 442.5 L3609.1 436.2 L3615.1 429.9 L3621 423.8 L3627 418.1 L3633 412.5 L3639 406.8 L3644.9 401.2 L3650.9 395.5 M3212.9 816 L3218.9 811.5 L3224.8 807 L3230.8 802.4 L3236.8 797.9 L3242.8 793.4 L3248.7 788.9 L3254.7 785 L3260.7 781.9 L3266.7 778.8 L3272.6 775.8 L3278.6 772.7 L3284.6 769.7 L3290.6 766.7 L3296.5 763.7 L3302.5 760.5 L3308.5 757 L3314.5 753.5 L3320.4 750 L3326.4 746.6 L3332.4 743.1 L3338.4 739.9 L3344.3 737 L3350.3 734.1 L3356.3 731.1 L3362.3 728.2 L3368.2 725.3 L3374.2 722.4 L3380.2 719.1 L3386.2 712.5 L3392.1 706 L3398.1 699.4 L3404.1 692.8 L3410.1 686.7 L3416 680.8 L3422 674.9 L3428 669.1 L3434 663.2 L3439.9 657.1 L3445.9 650.6 L3451.9 644.2 L3457.9 637.7 L3463.8 631.2 L3469.8 624.8 L3475.8 618.4 L3481.8 611.9 L3487.7 605.3 L3493.7 598.8 L3499.7 592.2 L3505.7 585.6 L3511.6 578.9 L3517.6 572.2 L3523.6 565.5 L3529.6 558.7 L3535.5 551.9 L3541.5 545 L3547.5 538.4 L3553.5 532.2 L3559.4 525.9 L3565.4 519.7 L3571.4 513.4 L3577.4 507.1 L3583.3 500.9 L3589.3 494.7 L3595.3 488.5 L3601.3 482.4 L3607.2 476.2 L3613.2 470.1 L3619.2 463.9 L3625.2 457.7 L3631.1 451.5 L3637.1 445.3 L3643.1 439.1 L3649.1 432.8 L3655 426.8 L3661 421.2 L3667 415.7 L3673 410.1 L3678.9 404.5 L3684.9 398.9 M3246.8 813.8 L3252.8 809.5 L3258.7 805.1 L3264.7 800.8 L3270.7 796.5 L3276.7 792.1 L3282.6 787.8 L3288.6 784.2 L3294.6 781.3 L3300.6 778.4 L3306.5 775.5 L3312.5 772.7 L3318.5 769.9 L3324.5 767 L3330.4 764.2 L3336.4 761 L3342.4 757.6 L3348.4 754.2 L3354.3 750.7 L3360.3 747.3 L3366.3 743.9 L3372.3 740.7 L3378.2 737.8 L3384.2 734.9 L3390.2 731.9 L3396.2 729 L3402.1 726.1 L3408.1 723.2 L3414.1 719.9 L3420.1 713.2 L3426 706.6 L3432 699.9 L3438 693.2 L3444 687 L3449.9 681.1 L3455.9 675.1 L3461.9 669.2 L3467.9 663.3 L3473.8 657.1 L3479.8 650.6 L3485.8 644.1 L3491.8 637.6 L3497.7 631.2 L3503.7 624.7 L3509.7 618.2 L3515.7 611.8 L3521.6 605.2 L3527.6 598.7 L3533.6 592.2 L3539.6 585.7 L3545.5 579 L3551.5 572.3 L3557.5 565.7 L3563.5 559 L3569.4 552.2 L3575.4 545.5 L3581.4 539 L3587.4 532.9 L3593.3 526.8 L3599.3 520.7 L3605.3 514.5 L3611.3 508.4 L3617.2 502.3 L3623.2 496.2 L3629.2 490.1 L3635.2 484.1 L3641.1 478 L3647.1 471.9 L3653.1 465.8 L3659.1 459.7 L3665 453.6 L3671 447.4 L3677 441.3 L3683 435.2 L3688.9 429.2 L3694.9 423.7 L3700.9 418.2 L3706.9 412.7 L3712.8 407.2 L3718.8 401.7 M3278 808 L3284 803.9 L3289.9 799.8 L3295.9 795.7 L3301.9 791.6 L3307.9 787.5 L3313.8 783.4 L3319.8 780 L3325.8 777.3 L3331.8 774.7 L3337.7 772.1 L3343.7 769.4 L3349.7 766.8 L3355.7 764.2 L3361.6 761.5 L3367.6 758.5 L3373.6 755.2 L3379.6 751.8 L3385.5 748.4 L3391.5 745.1 L3397.5 741.7 L3403.5 738.6 L3409.4 735.8 L3415.4 732.9 L3421.4 730.1 L3427.4 727.2 L3433.3 724.4 L3439.3 721.5 L3445.3 718.2 L3451.3 711.5 L3457.2 704.8 L3463.2 698.1 L3469.2 691.3 L3475.2 685.1 L3481.1 679.2 L3487.1 673.2 L3493.1 667.3 L3499.1 661.3 L3505 655.1 L3511 648.7 L3517 642.2 L3523 635.7 L3528.9 629.3 L3534.9 622.8 L3540.9 616.4 L3546.9 609.9 L3552.8 603.5 L3558.8 597.1 L3564.8 590.6 L3570.8 584.2 L3576.7 577.7 L3582.7 571.1 L3588.7 564.5 L3594.7 557.9 L3600.6 551.3 L3606.6 544.7 L3612.6 538.4 L3618.6 532.5 L3624.5 526.5 L3630.5 520.6 L3636.5 514.6 L3642.5 508.6 L3648.4 502.7 L3654.4 496.7 L3660.4 490.8 L3666.4 484.8 L3672.3 478.9 L3678.3 472.9 L3684.3 467 L3690.3 460.9 L3696.2 454.9 L3702.2 448.9 L3708.2 442.9 L3714.2 436.9 L3720.1 431.1 L3726.1 425.6 L3732.1 420.2 L3738.1 414.8 L3744 409.4 L3750 404 M2212 598 L2225.5 602.5 L2239 607 L2252.5 611.5 L2266 616.1 L2279.5 620.6 L2293 625.4 L2306.5 630.8 L2319.9 636.2 L2333.4 641 L2346.9 645.5 L2360.4 650 L2373.9 659.3 L2387.4 670.3 L2400.9 681.1 L2414.4 691.3 L2427.9 701.4 L2441.4 708.2 L2454.9 713.6 L2468.4 718.6 L2481.9 723.6 L2495.4 729 L2508.9 734.7 L2522.4 740.4 L2535.8 748.5 L2549.3 757.9 L2562.8 767.3 L2576.3 772.8 L2589.8 776.8 L2603.3 781.3 L2616.8 790.2 L2630.3 799.1 L2643.8 805.1 L2657.3 809.9 L2670.8 814.7 L2684.3 819.9 L2697.8 826.6 L2711.3 833.3 L2724.8 840.1 L2738.3 845.3 L2751.7 849.9 L2765.2 854.5 L2778.7 856.3 L2792.2 855.6 L2805.7 855 L2819.2 854.3 L2832.7 851.5 L2846.2 848.4 L2859.7 845.3 L2873.2 842.4 L2886.7 839.9 L2900.2 837.3 L2913.7 836.5 L2927.2 837.6 L2940.7 838.7 L2954.2 839.9 L2967.6 841 L2981.1 841.2 L2994.6 840.6 L3008.1 840 L3021.6 839.5 L3035.1 838.9 L3048.6 837.9 L3062.1 835.6 L3075.6 833.2 L3089.1 830.8 L3102.6 828.5 L3116.1 826.2 L3129.6 824.6 L3143.1 822.9 L3156.6 821.2 L3170.1 819.5 L3183.5 818 L3197 817.1 L3210.5 816.2 L3224 815.3 L3237.5 814.4 L3251 813.2 L3264.5 810.6 L3278 808 M2225 576.5 L2238.5 581.3 L2252 586.1 L2265.5 591 L2279 595.9 L2292.5 600.7 L2306 605.9 L2319.5 611.5 L2332.9 617.2 L2346.4 622.3 L2359.9 627.1 L2373.4 631.9 L2386.9 641.4 L2400.4 652.5 L2413.9 663.4 L2427.4 673.6 L2440.9 683.9 L2454.4 690.8 L2467.9 696.4 L2481.4 701.7 L2494.9 706.8 L2508.4 712.4 L2521.9 718.4 L2535.4 724.4 L2548.8 732.7 L2562.3 742.3 L2575.8 751.8 L2589.3 757.4 L2602.8 761.6 L2616.3 766.1 L2629.8 775 L2643.3 783.9 L2656.8 790 L2670.3 794.9 L2683.8 799.8 L2697.3 805 L2710.8 811.7 L2724.3 818.4 L2737.8 825.1 L2751.3 830.4 L2764.7 835 L2778.2 839.6 L2791.7 841.6 L2805.2 841.1 L2818.7 840.6 L2832.2 840.1 L2845.7 837.3 L2859.2 834.3 L2872.7 831.3 L2886.2 828.5 L2899.7 826.1 L2913.2 823.6 L2926.7 822.9 L2940.2 824.1 L2953.7 825.3 L2967.2 826.5 L2980.6 827.7 L2994.1 828 L3007.6 827.7 L3021.1 827.4 L3034.6 827.1 L3048.1 826.8 L3061.6 825.9 L3075.1 823.7 L3088.6 821.5 L3102.1 819.3 L3115.6 817.1 L3129.1 815.1 L3142.6 813.6 L3156.1 812.1 L3169.6 810.6 L3183.1 809.1 L3196.5 807.7 L3210 807 L3223.5 806.3 L3237 805.6 L3250.5 804.9 L3264 803.9 L3277.5 801.5 L3291 799.1 M2235 559.9 L2248.5 565 L2262 570.1 L2275.5 575.2 L2289 580.3 L2302.5 585.4 L2316 590.8 L2329.5 596.7 L2342.9 602.5 L2356.4 607.9 L2369.9 613 L2383.4 618 L2396.9 627.6 L2410.4 638.7 L2423.9 649.7 L2437.4 660.1 L2450.9 670.4 L2464.4 677.5 L2477.9 683.3 L2491.4 688.6 L2504.9 693.9 L2518.4 699.7 L2531.9 705.9 L2545.4 712.2 L2558.8 720.6 L2572.3 730.3 L2585.8 739.9 L2599.3 745.6 L2612.8 749.8 L2626.3 754.5 L2639.8 763.4 L2653.3 772.2 L2666.8 778.4 L2680.3 783.3 L2693.8 788.2 L2707.3 793.5 L2720.8 800.2 L2734.3 806.9 L2747.8 813.6 L2761.3 818.9 L2774.7 823.6 L2788.2 828.2 L2801.7 830.2 L2815.2 829.9 L2828.7 829.5 L2842.2 829.1 L2855.7 826.5 L2869.2 823.5 L2882.7 820.5 L2896.2 817.8 L2909.7 815.5 L2923.2 813.1 L2936.7 812.5 L2950.2 813.7 L2963.7 814.9 L2977.2 816.2 L2990.6 817.4 L3004.1 817.9 L3017.6 817.8 L3031.1 817.7 L3044.6 817.6 L3058.1 817.4 L3071.6 816.7 L3085.1 814.6 L3098.6 812.5 L3112.1 810.4 L3125.6 808.3 L3139.1 806.5 L3152.6 805.1 L3166.1 803.7 L3179.6 802.4 L3193.1 801 L3206.5 799.8 L3220 799.3 L3233.5 798.7 L3247 798.1 L3260.5 797.5 L3274 796.7 L3287.5 794.5 L3301 792.2 M2244.5 544.3 L2258 549.6 L2271.5 555 L2285 560.3 L2298.5 565.6 L2312 571 L2325.5 576.6 L2339 582.7 L2352.4 588.8 L2365.9 594.4 L2379.4 599.6 L2392.9 604.8 L2406.4 614.5 L2419.9 625.8 L2433.4 636.9 L2446.9 647.3 L2460.4 657.7 L2473.9 665 L2487.4 670.9 L2500.9 676.3 L2514.4 681.7 L2527.9 687.7 L2541.4 694.1 L2554.9 700.6 L2568.3 709.1 L2581.8 718.9 L2595.3 728.6 L2608.8 734.4 L2622.3 738.8 L2635.8 743.5 L2649.3 752.4 L2662.8 761.2 L2676.3 767.4 L2689.8 772.4 L2703.3 777.4 L2716.8 782.6 L2730.3 789.4 L2743.8 796.1 L2757.3 802.8 L2770.8 808.1 L2784.2 812.7 L2797.7 817.4 L2811.2 819.5 L2824.7 819.3 L2838.2 819 L2851.7 818.8 L2865.2 816.2 L2878.7 813.2 L2892.2 810.3 L2905.7 807.7 L2919.2 805.5 L2932.7 803.2 L2946.2 802.6 L2959.7 803.9 L2973.2 805.2 L2986.7 806.4 L3000.1 807.7 L3013.6 808.4 L3027.1 808.4 L3040.6 808.5 L3054.1 808.5 L3067.6 808.6 L3081.1 807.9 L3094.6 805.9 L3108.1 804 L3121.6 802 L3135.1 800.1 L3148.6 798.3 L3162.1 797.1 L3175.6 795.9 L3189.1 794.6 L3202.6 793.4 L3216 792.4 L3229.5 791.9 L3243 791.5 L3256.5 791 L3270 790.6 L3283.5 789.8 L3297 787.8 L3310.5 785.7 M2255 528.5 L2268.5 534 L2282 539.6 L2295.5 545.1 L2309 550.8 L2322.5 556.4 L2336 562.3 L2349.5 568.6 L2362.9 574.9 L2376.4 580.7 L2389.9 586.2 L2403.4 591.6 L2416.9 601.4 L2430.4 612.8 L2443.9 624 L2457.4 634.5 L2470.9 645 L2484.4 652.3 L2497.9 658.4 L2511.4 664 L2524.9 669.5 L2538.4 675.7 L2551.9 682.3 L2565.4 689 L2578.8 697.7 L2592.3 707.6 L2605.8 717.4 L2619.3 723.2 L2632.8 727.7 L2646.3 732.6 L2659.8 741.4 L2673.3 750.3 L2686.8 756.5 L2700.3 761.5 L2713.8 766.5 L2727.3 771.8 L2740.8 778.6 L2754.3 785.3 L2767.8 792 L2781.3 797.3 L2794.7 801.9 L2808.2 806.6 L2821.7 808.8 L2835.2 808.7 L2848.7 808.6 L2862.2 808.4 L2875.7 806 L2889.2 803 L2902.7 800.1 L2916.2 797.6 L2929.7 795.5 L2943.2 793.3 L2956.7 792.7 L2970.2 794.1 L2983.7 795.4 L2997.2 796.7 L3010.6 798.1 L3024.1 798.9 L3037.6 799.1 L3051.1 799.4 L3064.6 799.6 L3078.1 799.8 L3091.6 799.3 L3105.1 797.4 L3118.6 795.6 L3132.1 793.7 L3145.6 791.9 L3159.1 790.3 L3172.6 789.2 L3186.1 788.1 L3199.6 787 L3213.1 785.9 L3226.5 785.1 L3240 784.8 L3253.5 784.5 L3267 784.1 L3280.5 783.8 L3294 783.2 L3307.5 781.3 L3321 779.5 M2266 511.8 L2279.5 517.7 L2293 523.5 L2306.5 529.4 L2320 535.3 L2333.5 541.2 L2347 547.4 L2360.5 554 L2373.9 560.5 L2387.4 566.5 L2400.9 572.3 L2414.4 578 L2427.9 588 L2441.4 599.4 L2454.9 610.7 L2468.4 621.3 L2481.9 631.9 L2495.4 639.5 L2508.9 645.7 L2522.4 651.5 L2535.9 657.1 L2549.4 663.6 L2562.9 670.4 L2576.4 677.3 L2589.8 686.3 L2603.3 696.3 L2616.8 706.2 L2630.3 712.2 L2643.8 716.8 L2657.3 721.7 L2670.8 730.6 L2684.3 739.4 L2697.8 745.7 L2711.3 750.8 L2724.8 755.9 L2738.3 761.3 L2751.8 768 L2765.3 774.7 L2778.8 781.4 L2792.3 786.8 L2805.7 791.5 L2819.2 796.2 L2832.7 798.5 L2846.2 798.6 L2859.7 798.6 L2873.2 798.6 L2886.7 796.2 L2900.2 793.3 L2913.7 790.5 L2927.2 788.2 L2940.7 786.1 L2954.2 784 L2967.7 783.6 L2981.2 785 L2994.7 786.4 L3008.2 787.8 L3021.6 789.2 L3035.1 790.2 L3048.6 790.6 L3062.1 791.1 L3075.6 791.5 L3089.1 792 L3102.6 791.6 L3116.1 789.9 L3129.6 788.1 L3143.1 786.4 L3156.6 784.8 L3170.1 783.4 L3183.6 782.5 L3197.1 781.5 L3210.6 780.6 L3224.1 779.7 L3237.5 779 L3251 778.8 L3264.5 778.7 L3278 778.6 L3291.5 778.4 L3305 778 L3318.5 776.3 L3332 774.6 M2275 500 L2288.5 506 L2302 512.1 L2315.5 518.1 L2329 524.3 L2342.5 530.4 L2356 536.8 L2369.5 543.6 L2382.9 550.3 L2396.4 556.5 L2409.9 562.5 L2423.4 568.4 L2436.9 578.5 L2450.4 590 L2463.9 601.3 L2477.4 612 L2490.9 622.7 L2504.4 630.4 L2517.9 636.7 L2531.4 642.6 L2544.9 648.3 L2558.4 654.9 L2571.9 662 L2585.4 669.1 L2598.8 678.1 L2612.3 688.3 L2625.8 698.3 L2639.3 704.3 L2652.8 709 L2666.3 714 L2679.8 722.8 L2693.3 731.7 L2706.8 738 L2720.3 743.1 L2733.8 748.2 L2747.3 753.6 L2760.8 760.3 L2774.3 767 L2787.8 773.7 L2801.3 779.1 L2814.7 783.8 L2828.2 788.6 L2841.7 790.9 L2855.2 791.1 L2868.7 791.2 L2882.2 791.3 L2895.7 789 L2909.2 786.1 L2922.7 783.3 L2936.2 781.1 L2949.7 779.1 L2963.2 777.1 L2976.7 776.7 L2990.2 778.1 L3003.7 779.5 L3017.2 781 L3030.6 782.4 L3044.1 783.5 L3057.6 784.2 L3071.1 784.8 L3084.6 785.4 L3098.1 786 L3111.6 785.6 L3125.1 784 L3138.6 782.4 L3152.1 780.8 L3165.6 779.3 L3179.1 778 L3192.6 777.2 L3206.1 776.4 L3219.6 775.5 L3233.1 774.7 L3246.5 774.1 L3260 774.1 L3273.5 774.1 L3287 774.1 L3300.5 774 L3314 773.7 L3327.5 772.2 L3341 770.6 M2285 487 L2298.5 493.3 L2312 499.6 L2325.5 505.9 L2339 512.2 L2352.5 518.6 L2366 525.2 L2379.5 532.3 L2392.9 539.1 L2406.4 545.6 L2419.9 551.7 L2433.4 557.9 L2446.9 568.1 L2460.4 579.6 L2473.9 591.1 L2487.4 601.8 L2500.9 612.5 L2514.4 620.4 L2527.9 626.9 L2541.4 632.8 L2554.9 638.7 L2568.4 645.5 L2581.9 652.7 L2595.4 660 L2608.8 669.2 L2622.3 679.5 L2635.8 689.6 L2649.3 695.6 L2662.8 700.4 L2676.3 705.5 L2689.8 714.3 L2703.3 723.1 L2716.8 729.5 L2730.3 734.6 L2743.8 739.8 L2757.3 745.2 L2770.8 751.9 L2784.3 758.6 L2797.8 765.3 L2811.3 770.6 L2824.7 775.4 L2838.2 780.1 L2851.7 782.5 L2865.2 782.8 L2878.7 783 L2892.2 783.3 L2905.7 781.1 L2919.2 778.2 L2932.7 775.4 L2946.2 773.2 L2959.7 771.3 L2973.2 769.4 L2986.7 769.1 L3000.2 770.5 L3013.7 772 L3027.2 773.4 L3040.6 774.9 L3054.1 776.2 L3067.6 777 L3081.1 777.8 L3094.6 778.6 L3108.1 779.3 L3121.6 779.1 L3135.1 777.6 L3148.6 776.1 L3162.1 774.6 L3175.6 773.1 L3189.1 772 L3202.6 771.3 L3216.1 770.6 L3229.6 769.9 L3243.1 769.2 L3256.5 768.8 L3270 768.9 L3283.5 769 L3297 769.1 L3310.5 769.2 L3324 769 L3337.5 767.6 L3351 766.2 M2302 468.8 L2315.5 475.4 L2329 482 L2342.5 488.7 L2356 495.4 L2369.5 502.2 L2383 509.1 L2396.5 516.5 L2409.9 523.6 L2423.4 530.3 L2436.9 536.8 L2450.4 543.2 L2463.9 553.6 L2477.4 565.2 L2490.9 576.7 L2504.4 587.5 L2517.9 598.3 L2531.4 606.3 L2544.9 613 L2558.4 619.1 L2571.9 625.1 L2585.4 632.1 L2598.9 639.7 L2612.4 647.2 L2625.8 656.6 L2639.3 667 L2652.8 677.2 L2666.3 683.3 L2679.8 688.2 L2693.3 693.4 L2706.8 702.1 L2720.3 710.8 L2733.8 717.2 L2747.3 722.3 L2760.8 727.5 L2774.3 732.9 L2787.8 739.5 L2801.3 746.1 L2814.8 752.7 L2828.3 758 L2841.7 762.7 L2855.2 767.4 L2868.7 769.9 L2882.2 770.3 L2895.7 770.7 L2909.2 771 L2922.7 768.9 L2936.2 766 L2949.7 763.2 L2963.2 761.2 L2976.7 759.3 L2990.2 757.5 L3003.7 757.2 L3017.2 758.6 L3030.7 760.1 L3044.2 761.6 L3057.6 763 L3071.1 764.5 L3084.6 765.5 L3098.1 766.6 L3111.6 767.6 L3125.1 768.6 L3138.6 768.4 L3152.1 767.1 L3165.6 765.7 L3179.1 764.3 L3192.6 763 L3206.1 762.1 L3219.6 761.5 L3233.1 761 L3246.6 760.5 L3260.1 759.9 L3273.5 759.7 L3287 759.9 L3300.5 760.2 L3314 760.5 L3327.5 760.7 L3341 760.7 L3354.5 759.5 L3368 758.3 M2320 456.2 L2333.5 463.1 L2347 470 L2360.5 476.9 L2374 483.9 L2387.5 490.9 L2401 498.1 L2414.5 505.7 L2427.9 513 L2441.4 520 L2454.9 526.6 L2468.4 533.3 L2481.9 543.6 L2495.4 555.3 L2508.9 566.8 L2522.4 577.5 L2535.9 588.3 L2549.4 596.3 L2562.9 603.1 L2576.4 609.3 L2589.9 615.3 L2603.4 622.4 L2616.9 630.2 L2630.4 638 L2643.8 647.4 L2657.3 657.9 L2670.8 668 L2684.3 674.1 L2697.8 679 L2711.3 684.1 L2724.8 692.6 L2738.3 701.1 L2751.8 707.4 L2765.3 712.4 L2778.8 717.5 L2792.3 722.8 L2805.8 729.3 L2819.3 735.6 L2832.8 742 L2846.3 747.2 L2859.7 751.8 L2873.2 756.3 L2886.7 758.8 L2900.2 759.2 L2913.7 759.6 L2927.2 760 L2940.7 757.8 L2954.2 754.9 L2967.7 751.9 L2981.2 749.8 L2994.7 748 L3008.2 746.1 L3021.7 745.7 L3035.2 747.1 L3048.7 748.4 L3062.2 749.8 L3075.6 751.2 L3089.1 752.8 L3102.6 753.9 L3116.1 755.1 L3129.6 756.3 L3143.1 757.4 L3156.6 757.3 L3170.1 755.9 L3183.6 754.6 L3197.1 753.2 L3210.6 752 L3224.1 751.1 L3237.6 750.6 L3251.1 750.2 L3264.6 749.7 L3278.1 749.2 L3291.5 749 L3305 749.4 L3318.5 749.7 L3332 750 L3345.5 750.3 L3359 750.3 L3372.5 749.3 L3386 748.2 M2337 446.9 L2350.5 454 L2364 461.1 L2377.5 468.2 L2391 475.4 L2404.5 482.6 L2418 490.1 L2431.5 497.8 L2444.9 505.3 L2458.4 512.4 L2471.9 519.3 L2485.4 526.1 L2498.9 536.4 L2512.4 548 L2525.9 559.5 L2539.4 570.1 L2552.9 580.8 L2566.4 588.9 L2579.9 595.7 L2593.4 601.9 L2606.9 608 L2620.4 615.2 L2633.9 623.1 L2647.4 631 L2660.8 640.6 L2674.3 651 L2687.8 661.1 L2701.3 667.1 L2714.8 672 L2728.3 677.1 L2741.8 685.4 L2755.3 693.6 L2768.8 699.8 L2782.3 704.7 L2795.8 709.6 L2809.3 714.8 L2822.8 721 L2836.3 727.2 L2849.8 733.3 L2863.3 738.3 L2876.7 742.7 L2890.2 747.1 L2903.7 749.5 L2917.2 750 L2930.7 750.4 L2944.2 750.8 L2957.7 748.5 L2971.2 745.4 L2984.7 742.4 L2998.2 740.2 L3011.7 738.3 L3025.2 736.4 L3038.7 735.9 L3052.2 737.2 L3065.7 738.4 L3079.2 739.6 L3092.6 740.8 L3106.1 742.5 L3119.6 743.8 L3133.1 745.1 L3146.6 746.3 L3160.1 747.6 L3173.6 747.4 L3187.1 746.1 L3200.6 744.7 L3214.1 743.4 L3227.6 742.1 L3241.1 741.3 L3254.6 740.8 L3268.1 740.4 L3281.6 739.9 L3295.1 739.5 L3308.5 739.4 L3322 739.7 L3335.5 740.1 L3349 740.4 L3362.5 740.7 L3376 740.8 L3389.5 739.8 L3403 738.8 M2352 439.4 L2365.5 446.7 L2379 454 L2392.5 461.3 L2406 468.7 L2419.5 476.1 L2433 483.8 L2446.5 491.7 L2459.9 499.3 L2473.4 506.5 L2486.9 513.5 L2500.4 520.5 L2513.9 530.9 L2527.4 542.4 L2540.9 553.8 L2554.4 564.4 L2567.9 575 L2581.4 583.2 L2594.9 590.1 L2608.4 596.3 L2621.9 602.4 L2635.4 609.7 L2648.9 617.7 L2662.4 625.8 L2675.8 635.4 L2689.3 645.8 L2702.8 655.9 L2716.3 661.8 L2729.8 666.7 L2743.3 671.7 L2756.8 679.8 L2770.3 687.9 L2783.8 693.9 L2797.3 698.7 L2810.8 703.6 L2824.3 708.6 L2837.8 714.7 L2851.3 720.6 L2864.8 726.6 L2878.3 731.5 L2891.7 735.7 L2905.2 740 L2918.7 742.3 L2932.2 742.8 L2945.7 743.2 L2959.2 743.6 L2972.7 741.3 L2986.2 738.1 L2999.7 734.9 L3013.2 732.7 L3026.7 730.7 L3040.2 728.8 L3053.7 728.2 L3067.2 729.4 L3080.7 730.5 L3094.2 731.6 L3107.6 732.7 L3121.1 734.5 L3134.6 735.8 L3148.1 737.2 L3161.6 738.6 L3175.1 740 L3188.6 739.7 L3202.1 738.4 L3215.6 737 L3229.1 735.7 L3242.6 734.5 L3256.1 733.7 L3269.6 733.3 L3283.1 732.8 L3296.6 732.4 L3310.1 732 L3323.5 731.9 L3337 732.3 L3350.5 732.7 L3364 733.1 L3377.5 733.4 L3391 733.5 L3404.5 732.6 L3418 731.7 M2362 434.9 L2375.5 442.3 L2389 449.7 L2402.5 457.2 L2416 464.7 L2429.5 472.3 L2443 480 L2456.5 488.1 L2469.9 495.7 L2483.4 503.1 L2496.9 510.2 L2510.4 517.3 L2523.9 527.6 L2537.4 539.1 L2550.9 550.5 L2564.4 561.1 L2577.9 571.6 L2591.4 579.8 L2604.9 586.7 L2618.4 592.9 L2631.9 599 L2645.4 606.4 L2658.9 614.5 L2672.4 622.7 L2685.8 632.3 L2699.3 642.7 L2712.8 652.8 L2726.3 658.6 L2739.8 663.5 L2753.3 668.5 L2766.8 676.4 L2780.3 684.4 L2793.8 690.3 L2807.3 695.1 L2820.8 699.8 L2834.3 704.8 L2847.8 710.7 L2861.3 716.5 L2874.8 722.4 L2888.3 727.1 L2901.7 731.3 L2915.2 735.5 L2928.7 737.7 L2942.2 738.2 L2955.7 738.6 L2969.2 739 L2982.7 736.7 L2996.2 733.4 L3009.7 730.1 L3023.2 727.9 L3036.7 725.9 L3050.2 723.9 L3063.7 723.3 L3077.2 724.3 L3090.7 725.4 L3104.2 726.4 L3117.6 727.5 L3131.1 729.2 L3144.6 730.7 L3158.1 732.1 L3171.6 733.6 L3185.1 735 L3198.6 734.7 L3212.1 733.4 L3225.6 732 L3239.1 730.7 L3252.6 729.5 L3266.1 728.7 L3279.6 728.3 L3293.1 727.9 L3306.6 727.5 L3320.1 727.1 L3333.5 727 L3347 727.4 L3360.5 727.8 L3374 728.2 L3387.5 728.5 L3401 728.6 L3414.5 727.8 L3428 726.9 M2370 431.4 L2383.5 438.9 L2397 446.4 L2410.5 453.9 L2424 461.6 L2437.5 469.2 L2451 477.1 L2464.5 485.2 L2477.9 493 L2491.4 500.4 L2504.9 507.6 L2518.4 514.7 L2531.9 525.1 L2545.4 536.6 L2558.9 547.9 L2572.4 558.4 L2585.9 568.9 L2599.4 577.1 L2612.9 584.1 L2626.4 590.2 L2639.9 596.4 L2653.4 603.8 L2666.9 612 L2680.4 620.2 L2693.8 629.8 L2707.3 640.3 L2720.8 650.3 L2734.3 656.1 L2747.8 661 L2761.3 665.9 L2774.8 673.8 L2788.3 681.6 L2801.8 687.5 L2815.3 692.2 L2828.8 696.9 L2842.3 701.8 L2855.8 707.6 L2869.3 713.3 L2882.8 719 L2896.3 723.7 L2909.7 727.8 L2923.2 731.9 L2936.7 734.1 L2950.2 734.6 L2963.7 735 L2977.2 735.4 L2990.7 733 L3004.2 729.6 L3017.7 726.3 L3031.2 724.1 L3044.7 722 L3058.2 720 L3071.7 719.4 L3085.2 720.4 L3098.7 721.3 L3112.2 722.3 L3125.6 723.3 L3139.1 725.1 L3152.6 726.6 L3166.1 728.1 L3179.6 729.5 L3193.1 731 L3206.6 730.7 L3220.1 729.4 L3233.6 728 L3247.1 726.7 L3260.6 725.5 L3274.1 724.7 L3287.6 724.3 L3301.1 723.9 L3314.6 723.5 L3328.1 723.1 L3341.5 723.1 L3355 723.5 L3368.5 723.9 L3382 724.3 L3395.5 724.6 L3409 724.8 L3422.5 723.9 L3436 723.1 M2377 428.3 L2390.5 435.9 L2404 443.5 L2417.5 451.1 L2431 458.8 L2444.5 466.6 L2458 474.5 L2471.5 482.7 L2484.9 490.5 L2498.4 498 L2511.9 505.3 L2525.4 512.5 L2538.9 522.9 L2552.4 534.3 L2565.9 545.6 L2579.4 556.1 L2592.9 566.6 L2606.4 574.8 L2619.9 581.7 L2633.4 587.9 L2646.9 594.1 L2660.4 601.5 L2673.9 609.8 L2687.4 618.1 L2700.8 627.7 L2714.3 638.2 L2727.8 648.1 L2741.3 654 L2754.8 658.8 L2768.3 663.7 L2781.8 671.5 L2795.3 679.2 L2808.8 685 L2822.3 689.6 L2835.8 694.3 L2849.3 699.1 L2862.8 704.8 L2876.3 710.5 L2889.8 716.1 L2903.3 720.7 L2916.7 724.7 L2930.2 728.7 L2943.7 730.9 L2957.2 731.4 L2970.7 731.8 L2984.2 732.2 L2997.7 729.8 L3011.2 726.4 L3024.7 723 L3038.2 720.7 L3051.7 718.7 L3065.2 716.6 L3078.7 715.9 L3092.2 716.9 L3105.7 717.8 L3119.2 718.7 L3132.6 719.6 L3146.1 721.4 L3159.6 723 L3173.1 724.5 L3186.6 726 L3200.1 727.5 L3213.6 727.2 L3227.1 725.9 L3240.6 724.5 L3254.1 723.2 L3267.6 722 L3281.1 721.2 L3294.6 720.8 L3308.1 720.4 L3321.6 720 L3335.1 719.7 L3348.5 719.6 L3362 720.1 L3375.5 720.5 L3389 720.9 L3402.5 721.2 L3416 721.4 L3429.5 720.6 L3443 719.7 M2385 424.8 L2398.5 432.5 L2412 440.1 L2425.5 447.7 L2439 455.5 L2452.5 463.3 L2466 471.3 L2479.5 479.5 L2492.9 487.3 L2506.4 494.9 L2519.9 502.1 L2533.4 509.4 L2546.9 519.7 L2560.4 531 L2573.9 542.3 L2587.4 552.7 L2600.9 563.1 L2614.4 571.3 L2627.9 578.2 L2641.4 584.3 L2654.9 590.4 L2668.4 597.8 L2681.9 606.1 L2695.4 614.4 L2708.8 624 L2722.3 634.4 L2735.8 644.3 L2749.3 650 L2762.8 654.8 L2776.3 659.7 L2789.8 667.2 L2803.3 674.8 L2816.8 680.5 L2830.3 685 L2843.8 689.5 L2857.3 694.3 L2870.8 699.8 L2884.3 705.3 L2897.8 710.8 L2911.3 715.3 L2924.7 719.1 L2938.2 723 L2951.7 725.1 L2965.2 725.6 L2978.7 725.9 L2992.2 726.3 L3005.7 723.8 L3019.2 720.2 L3032.7 716.7 L3046.2 714.3 L3059.7 712.2 L3073.2 710 L3086.7 709.3 L3100.2 710.1 L3113.7 710.9 L3127.2 711.7 L3140.6 712.5 L3154.1 714.3 L3167.6 715.8 L3181.1 717.4 L3194.6 718.9 L3208.1 720.4 L3221.6 720 L3235.1 718.6 L3248.6 717.2 L3262.1 715.8 L3275.6 714.5 L3289.1 713.7 L3302.6 713.3 L3316.1 712.9 L3329.6 712.4 L3343.1 712 L3356.5 711.9 L3370 712.3 L3383.5 712.7 L3397 713.1 L3410.5 713.3 L3424 713.4 L3437.5 712.6 L3451 711.8 M2394 420.9 L2407.5 428.6 L2421 436.2 L2434.5 443.9 L2448 451.7 L2461.5 459.5 L2475 467.6 L2488.5 475.8 L2501.9 483.6 L2515.4 491.2 L2528.9 498.4 L2542.4 505.7 L2555.9 515.9 L2569.4 527.2 L2582.9 538.3 L2596.4 548.6 L2609.9 558.9 L2623.4 567 L2636.9 573.9 L2650.4 579.9 L2663.9 585.9 L2677.4 593.3 L2690.9 601.6 L2704.4 609.9 L2717.8 619.5 L2731.3 629.8 L2744.8 639.6 L2758.3 645.2 L2771.8 649.9 L2785.3 654.7 L2798.8 662 L2812.3 669.4 L2825.8 675 L2839.3 679.3 L2852.8 683.7 L2866.3 688.3 L2879.8 693.7 L2893.3 698.9 L2906.8 704.2 L2920.3 708.5 L2933.7 712.2 L2947.2 715.9 L2960.7 717.9 L2974.2 718.3 L2987.7 718.6 L3001.2 718.9 L3014.7 716.3 L3028.2 712.5 L3041.7 708.9 L3055.2 706.4 L3068.7 704.2 L3082.2 701.9 L3095.7 701 L3109.2 701.7 L3122.7 702.4 L3136.2 703 L3149.6 703.7 L3163.1 705.4 L3176.6 706.9 L3190.1 708.4 L3203.6 709.9 L3217.1 711.4 L3230.6 711 L3244.1 709.5 L3257.6 708 L3271.1 706.5 L3284.6 705.1 L3298.1 704.3 L3311.6 703.8 L3325.1 703.3 L3338.6 702.8 L3352.1 702.3 L3365.5 702.2 L3379 702.5 L3392.5 702.9 L3406 703.2 L3419.5 703.4 L3433 703.4 L3446.5 702.5 L3460 701.7 M2401.5 417.4 L2415 425.1 L2428.5 432.8 L2442 440.5 L2455.5 448.3 L2469 456.2 L2482.5 464.3 L2496 472.5 L2509.4 480.3 L2522.9 487.9 L2536.4 495.2 L2549.9 502.5 L2563.4 512.6 L2576.9 523.8 L2590.4 534.8 L2603.9 545 L2617.4 555.2 L2630.9 563.3 L2644.4 570.1 L2657.9 576.1 L2671.4 582.1 L2684.9 589.4 L2698.4 597.8 L2711.9 606.1 L2725.3 615.6 L2738.8 625.9 L2752.3 635.6 L2765.8 641.1 L2779.3 645.7 L2792.8 650.4 L2806.3 657.6 L2819.8 664.8 L2833.3 670.2 L2846.8 674.5 L2860.3 678.7 L2873.8 683.2 L2887.3 688.4 L2900.8 693.5 L2914.3 698.6 L2927.8 702.8 L2941.2 706.4 L2954.7 709.9 L2968.2 711.8 L2981.7 712.2 L2995.2 712.4 L3008.7 712.6 L3022.2 709.9 L3035.7 706 L3049.2 702.3 L3062.7 699.8 L3076.2 697.4 L3089.7 695.1 L3103.2 694.1 L3116.7 694.6 L3130.2 695.2 L3143.7 695.7 L3157.1 696.2 L3170.6 698 L3184.1 699.5 L3197.6 700.9 L3211.1 702.4 L3224.6 703.9 L3238.1 703.4 L3251.6 701.8 L3265.1 700.2 L3278.6 698.7 L3292.1 697.3 L3305.6 696.4 L3319.1 695.9 L3332.6 695.3 L3346.1 694.8 L3359.6 694.2 L3373 694.1 L3386.5 694.4 L3400 694.6 L3413.5 694.9 L3427 695 L3440.5 695 L3454 694.1 L3467.5 693.2 M2409 413.1 L2422.5 420.8 L2436 428.6 L2449.5 436.3 L2463 444.2 L2476.5 452.1 L2490 460.2 L2503.5 468.6 L2516.9 476.4 L2530.4 483.9 L2543.9 491.3 L2557.4 498.6 L2570.9 508.7 L2584.4 519.8 L2597.9 530.8 L2611.4 540.9 L2624.9 551 L2638.4 559.1 L2651.9 565.8 L2665.4 571.8 L2678.9 577.7 L2692.4 585.1 L2705.9 593.4 L2719.4 601.8 L2732.8 611.3 L2746.3 621.5 L2759.8 631.2 L2773.3 636.6 L2786.8 641.1 L2800.3 645.7 L2813.8 652.8 L2827.3 659.9 L2840.8 665.2 L2854.3 669.3 L2867.8 673.5 L2881.3 677.8 L2894.8 682.9 L2908.3 687.9 L2921.8 692.9 L2935.3 696.9 L2948.7 700.4 L2962.2 703.8 L2975.7 705.6 L2989.2 705.9 L3002.7 706.1 L3016.2 706.3 L3029.7 703.5 L3043.2 699.5 L3056.7 695.6 L3070.2 693.1 L3083.7 690.6 L3097.2 688.2 L3110.7 687.2 L3124.2 687.6 L3137.7 688 L3151.2 688.5 L3164.6 688.9 L3178.1 690.6 L3191.6 692.1 L3205.1 693.6 L3218.6 695.1 L3232.1 696.6 L3245.6 695.9 L3259.1 694.3 L3272.6 692.7 L3286.1 691.1 L3299.6 689.7 L3313.1 688.8 L3326.6 688.2 L3340.1 687.6 L3353.6 687 L3367.1 686.5 L3380.5 686.3 L3394 686.5 L3407.5 686.8 L3421 687 L3434.5 687.1 L3448 687.1 L3461.5 686.2 L3475 685.3 M2418 407.9 L2431.5 415.7 L2445 423.5 L2458.5 431.4 L2472 439.3 L2485.5 447.3 L2499 455.5 L2512.5 463.9 L2525.9 471.7 L2539.4 479.3 L2552.9 486.7 L2566.4 494.1 L2579.9 504.1 L2593.4 515.1 L2606.9 526 L2620.4 536 L2633.9 546.1 L2647.4 554.1 L2660.9 560.9 L2674.4 566.8 L2687.9 572.7 L2701.4 580 L2714.9 588.4 L2728.4 596.8 L2741.8 606.3 L2755.3 616.5 L2768.8 626 L2782.3 631.4 L2795.8 635.9 L2809.3 640.4 L2822.8 647.3 L2836.3 654.2 L2849.8 659.4 L2863.3 663.4 L2876.8 667.5 L2890.3 671.7 L2903.8 676.6 L2917.3 681.4 L2930.8 686.2 L2944.3 690.2 L2957.7 693.5 L2971.2 696.8 L2984.7 698.5 L2998.2 698.8 L3011.7 698.9 L3025.2 699 L3038.7 696.2 L3052.2 692.1 L3065.7 688.1 L3079.2 685.4 L3092.7 682.9 L3106.2 680.4 L3119.7 679.3 L3133.2 679.6 L3146.7 679.9 L3160.2 680.2 L3173.6 680.5 L3187.1 682.2 L3200.6 683.7 L3214.1 685.2 L3227.6 686.7 L3241.1 688.2 L3254.6 687.5 L3268.1 685.9 L3281.6 684.2 L3295.1 682.6 L3308.6 681.1 L3322.1 680.2 L3335.6 679.6 L3349.1 678.9 L3362.6 678.3 L3376.1 677.7 L3389.5 677.5 L3403 677.7 L3416.5 678 L3430 678.1 L3443.5 678.2 L3457 678.1 L3470.5 677.2 L3484 676.3 M2426 403.3 L2439.5 411.2 L2453 419.1 L2466.5 426.9 L2480 435 L2493.5 443 L2507 451.3 L2520.5 459.7 L2533.9 467.6 L2547.4 475.2 L2560.9 482.6 L2574.4 490 L2587.9 500 L2601.4 511 L2614.9 521.8 L2628.4 531.7 L2641.9 541.7 L2655.4 549.7 L2668.9 556.5 L2682.4 562.3 L2695.9 568.2 L2709.4 575.6 L2722.9 584 L2736.4 592.4 L2749.8 601.8 L2763.3 612 L2776.8 621.5 L2790.3 626.8 L2803.8 631.2 L2817.3 635.6 L2830.8 642.4 L2844.3 649.2 L2857.8 654.3 L2871.3 658.2 L2884.8 662.1 L2898.3 666.2 L2911.8 671 L2925.3 675.7 L2938.8 680.3 L2952.3 684.2 L2965.7 687.3 L2979.2 690.5 L2992.7 692.2 L3006.2 692.4 L3019.7 692.5 L3033.2 692.6 L3046.7 689.7 L3060.2 685.4 L3073.7 681.3 L3087.2 678.6 L3100.7 676 L3114.2 673.5 L3127.7 672.2 L3141.2 672.5 L3154.7 672.7 L3168.2 672.9 L3181.6 673.1 L3195.1 674.8 L3208.6 676.3 L3222.1 677.8 L3235.6 679.3 L3249.1 680.8 L3262.6 680.1 L3276.1 678.4 L3289.6 676.7 L3303.1 675 L3316.6 673.5 L3330.1 672.5 L3343.6 671.9 L3357.1 671.2 L3370.6 670.6 L3384.1 669.9 L3397.5 669.7 L3411 669.9 L3424.5 670.1 L3438 670.2 L3451.5 670.3 L3465 670.2 L3478.5 669.3 L3492 668.3 M2434 398.8 L2447.5 406.7 L2461 414.6 L2474.5 422.5 L2488 430.6 L2501.5 438.8 L2515 447 L2528.5 455.5 L2541.9 463.4 L2555.4 471.1 L2568.9 478.5 L2582.4 486 L2595.9 496 L2609.4 506.8 L2622.9 517.6 L2636.4 527.4 L2649.9 537.3 L2663.4 545.3 L2676.9 552 L2690.4 557.9 L2703.9 563.7 L2717.4 571.1 L2730.9 579.5 L2744.4 588 L2757.8 597.4 L2771.3 607.5 L2784.8 617 L2798.3 622.1 L2811.8 626.5 L2825.3 630.9 L2838.8 637.5 L2852.3 644.1 L2865.8 649.1 L2879.3 652.9 L2892.8 656.8 L2906.3 660.8 L2919.8 665.4 L2933.3 669.9 L2946.8 674.5 L2960.3 678.2 L2973.7 681.2 L2987.2 684.3 L3000.7 685.9 L3014.2 686 L3027.7 686.1 L3041.2 686.1 L3054.7 683.1 L3068.2 678.8 L3081.7 674.6 L3095.2 671.8 L3108.7 669.2 L3122.2 666.5 L3135.7 665.2 L3149.2 665.3 L3162.7 665.5 L3176.2 665.6 L3189.6 665.7 L3203.1 667.3 L3216.6 668.9 L3230.1 670.4 L3243.6 671.9 L3257.1 673.4 L3270.6 672.6 L3284.1 670.9 L3297.6 669.1 L3311.1 667.4 L3324.6 665.8 L3338.1 664.9 L3351.6 664.2 L3365.1 663.5 L3378.6 662.8 L3392.1 662.2 L3405.5 661.9 L3419 662.1 L3432.5 662.2 L3446 662.4 L3459.5 662.4 L3473 662.2 L3486.5 661.3 L3500 660.4 M2443 392.8 L2456.5 400.7 L2470 408.7 L2483.5 416.7 L2497 424.9 L2510.5 433.1 L2524 441.4 L2537.5 450 L2550.9 457.9 L2564.4 465.6 L2577.9 473.1 L2591.4 480.6 L2604.9 490.6 L2618.4 501.3 L2631.9 512 L2645.4 521.8 L2658.9 531.6 L2672.4 539.6 L2685.9 546.3 L2699.4 552.1 L2712.9 557.8 L2726.4 565.2 L2739.9 573.7 L2753.4 582.2 L2766.8 591.6 L2780.3 601.7 L2793.8 611.1 L2807.3 616.2 L2820.8 620.5 L2834.3 624.8 L2847.8 631.2 L2861.3 637.7 L2874.8 642.6 L2888.3 646.3 L2901.8 650 L2915.3 653.9 L2928.8 658.4 L2942.3 662.8 L2955.8 667.1 L2969.3 670.7 L2982.7 673.6 L2996.2 676.5 L3009.7 678 L3023.2 678.2 L3036.7 678.2 L3050.2 678.2 L3063.7 675.1 L3077.2 670.6 L3090.7 666.3 L3104.2 663.5 L3117.7 660.8 L3131.2 658 L3144.7 656.6 L3158.2 656.6 L3171.7 656.6 L3185.2 656.6 L3198.6 656.6 L3212.1 658.3 L3225.6 659.8 L3239.1 661.4 L3252.6 662.9 L3266.1 664.4 L3279.6 663.6 L3293.1 661.8 L3306.6 660 L3320.1 658.2 L3333.6 656.6 L3347.1 655.6 L3360.6 654.9 L3374.1 654.2 L3387.6 653.5 L3401.1 652.8 L3414.5 652.5 L3428 652.7 L3441.5 652.8 L3455 652.9 L3468.5 652.8 L3482 652.7 L3495.5 651.8 L3509 650.8 M2451 385.9 L2464.5 394 L2478 402 L2491.5 410.1 L2505 418.4 L2518.5 426.6 L2532 435.1 L2545.5 443.7 L2558.9 451.6 L2572.4 459.4 L2585.9 467 L2599.4 474.5 L2612.9 484.4 L2626.4 495.2 L2639.9 505.8 L2653.4 515.5 L2666.9 525.3 L2680.4 533.2 L2693.9 540 L2707.4 545.8 L2720.9 551.5 L2734.4 558.9 L2747.9 567.5 L2761.4 576 L2774.8 585.4 L2788.3 595.5 L2801.8 604.8 L2815.3 609.8 L2828.8 614.1 L2842.3 618.4 L2855.8 624.7 L2869.3 631 L2882.8 635.8 L2896.3 639.4 L2909.8 643.1 L2923.3 646.9 L2936.8 651.3 L2950.3 655.5 L2963.8 659.7 L2977.3 663.2 L2990.7 666 L3004.2 668.8 L3017.7 670.3 L3031.2 670.4 L3044.7 670.4 L3058.2 670.4 L3071.7 667.2 L3085.2 662.7 L3098.7 658.3 L3112.2 655.4 L3125.7 652.6 L3139.2 649.9 L3152.7 648.4 L3166.2 648.3 L3179.7 648.2 L3193.2 648.1 L3206.6 648.1 L3220.1 649.7 L3233.6 651.3 L3247.1 652.8 L3260.6 654.4 L3274.1 655.9 L3287.6 655 L3301.1 653.2 L3314.6 651.4 L3328.1 649.6 L3341.6 648 L3355.1 647 L3368.6 646.3 L3382.1 645.6 L3395.6 644.9 L3409.1 644.1 L3422.5 643.9 L3436 644 L3449.5 644.1 L3463 644.2 L3476.5 644.2 L3490 644 L3503.5 643.1 L3517 642.2 M2461.6 376.9 L2475.1 385 L2488.6 393.2 L2502.1 401.4 L2515.6 409.7 L2529.1 418.1 L2542.6 426.6 L2556 435.3 L2569.5 443.4 L2583 451.2 L2596.5 458.8 L2610 466.5 L2623.5 476.4 L2637 487 L2650.5 497.6 L2664 507.3 L2677.5 516.9 L2691 524.9 L2704.5 531.6 L2718 537.4 L2731.5 543.1 L2745 550.5 L2758.5 559.2 L2771.9 567.7 L2785.4 577.2 L2798.9 587.2 L2812.4 596.5 L2825.9 601.4 L2839.4 605.7 L2852.9 609.9 L2866.4 616 L2879.9 622.2 L2893.4 626.8 L2906.9 630.4 L2920.4 633.9 L2933.9 637.6 L2947.4 641.8 L2960.9 645.9 L2974.4 649.9 L2987.8 653.2 L3001.3 655.9 L3014.8 658.6 L3028.3 660 L3041.8 660.1 L3055.3 660.1 L3068.8 660 L3082.3 656.8 L3095.8 652.1 L3109.3 647.6 L3122.8 644.7 L3136.3 641.8 L3149.8 639 L3163.3 637.5 L3176.8 637.3 L3190.2 637.1 L3203.7 636.9 L3217.2 636.7 L3230.7 638.4 L3244.2 640 L3257.7 641.6 L3271.2 643.1 L3284.7 644.7 L3298.2 643.8 L3311.7 641.9 L3325.2 640.1 L3338.7 638.3 L3352.2 636.6 L3365.7 635.6 L3379.2 634.9 L3392.7 634.2 L3406.1 633.4 L3419.6 632.7 L3433.1 632.5 L3446.6 632.6 L3460.1 632.7 L3473.6 632.7 L3487.1 632.7 L3500.6 632.5 L3514.1 631.6 L3527.6 630.7 M2472.2 367.8 L2485.7 376.1 L2499.2 384.4 L2512.7 392.6 L2526.2 401.1 L2539.7 409.6 L2553.1 418.2 L2566.6 427 L2580.1 435.1 L2593.6 443 L2607.1 450.7 L2620.6 458.4 L2634.1 468.3 L2647.6 478.9 L2661.1 489.4 L2674.6 499 L2688.1 508.5 L2701.6 516.5 L2715.1 523.3 L2728.6 529 L2742.1 534.7 L2755.5 542.2 L2769 550.9 L2782.5 559.5 L2796 568.9 L2809.5 578.9 L2823 588.1 L2836.5 593 L2850 597.3 L2863.5 601.4 L2877 607.3 L2890.5 613.3 L2904 617.9 L2917.5 621.3 L2931 624.7 L2944.5 628.3 L2958 632.3 L2971.4 636.2 L2984.9 640.1 L2998.4 643.3 L3011.9 645.9 L3025.4 648.4 L3038.9 649.7 L3052.4 649.8 L3065.9 649.7 L3079.4 649.7 L3092.9 646.4 L3106.4 641.6 L3119.9 637 L3133.4 634 L3146.9 631.1 L3160.4 628.2 L3173.9 626.6 L3187.3 626.3 L3200.8 626 L3214.3 625.6 L3227.8 625.3 L3241.3 627 L3254.8 628.7 L3268.3 630.3 L3281.8 631.9 L3295.3 633.5 L3308.8 632.5 L3322.3 630.7 L3335.8 628.8 L3349.3 626.9 L3362.8 625.3 L3376.3 624.3 L3389.8 623.5 L3403.2 622.8 L3416.7 622 L3430.2 621.3 L3443.7 621.1 L3457.2 621.1 L3470.7 621.2 L3484.2 621.3 L3497.7 621.2 L3511.2 621 L3524.7 620.1 L3538.2 619.3 M2482.8 357.9 L2496.3 366.3 L2509.8 374.6 L2523.3 383 L2536.7 391.6 L2550.2 400.2 L2563.7 409 L2577.2 417.8 L2590.7 426 L2604.2 434 L2617.7 441.8 L2631.2 449.6 L2644.7 459.5 L2658.2 470 L2671.7 480.5 L2685.2 490 L2698.7 499.5 L2712.2 507.5 L2725.7 514.2 L2739.2 520 L2752.6 525.6 L2766.1 533.2 L2779.6 541.9 L2793.1 550.7 L2806.6 560.1 L2820.1 570.1 L2833.6 579.3 L2847.1 584.1 L2860.6 588.3 L2874.1 592.3 L2887.6 598.1 L2901.1 604 L2914.6 608.4 L2928.1 611.8 L2941.6 615.1 L2955.1 618.5 L2968.5 622.4 L2982 626.2 L2995.5 629.9 L3009 633 L3022.5 635.4 L3036 637.8 L3049.5 639.1 L3063 639.2 L3076.5 639.1 L3090 639 L3103.5 635.7 L3117 630.8 L3130.5 626 L3144 623 L3157.5 620 L3170.9 617.1 L3184.4 615.4 L3197.9 615 L3211.4 614.6 L3224.9 614.2 L3238.4 613.8 L3251.9 615.5 L3265.4 617.2 L3278.9 618.8 L3292.4 620.5 L3305.9 622.2 L3319.4 621.1 L3332.9 619.3 L3346.4 617.4 L3359.9 615.5 L3373.4 613.8 L3386.8 612.8 L3400.3 612.1 L3413.8 611.3 L3427.3 610.6 L3440.8 609.8 L3454.3 609.6 L3467.8 609.7 L3481.3 609.8 L3494.8 609.8 L3508.3 609.7 L3521.8 609.5 L3535.3 608.7 L3548.8 607.9 M2493.4 344.6 L2506.9 353.1 L2520.4 361.7 L2533.8 370.2 L2547.3 379 L2560.8 387.8 L2574.3 396.7 L2587.8 405.7 L2601.3 413.9 L2614.8 422.1 L2628.3 430 L2641.8 437.9 L2655.3 447.8 L2668.8 458.4 L2682.3 468.8 L2695.8 478.3 L2709.3 487.8 L2722.8 495.8 L2736.2 502.6 L2749.7 508.4 L2763.2 514.1 L2776.7 521.7 L2790.2 530.6 L2803.7 539.5 L2817.2 548.9 L2830.7 559 L2844.2 568.1 L2857.7 572.9 L2871.2 577.1 L2884.7 581.2 L2898.2 586.9 L2911.7 592.6 L2925.2 597 L2938.7 600.2 L2952.1 603.5 L2965.6 606.9 L2979.1 610.7 L2992.6 614.3 L3006.1 618 L3019.6 621 L3033.1 623.3 L3046.6 625.7 L3060.1 626.9 L3073.6 627 L3087.1 626.9 L3100.6 626.9 L3114.1 623.5 L3127.6 618.6 L3141.1 613.8 L3154.6 610.7 L3168 607.7 L3181.5 604.8 L3195 603.1 L3208.5 602.6 L3222 602.1 L3235.5 601.7 L3249 601.2 L3262.5 603 L3276 604.8 L3289.5 606.5 L3303 608.3 L3316.5 610.1 L3330 609 L3343.5 607.2 L3357 605.3 L3370.5 603.4 L3383.9 601.8 L3397.4 600.9 L3410.9 600.2 L3424.4 599.4 L3437.9 598.7 L3451.4 598 L3464.9 597.8 L3478.4 598 L3491.9 598.1 L3505.4 598.2 L3518.9 598.1 L3532.4 598 L3545.9 597.2 L3559.4 596.5 M2504 331.3 L2517.4 340 L2530.9 348.7 L2544.4 357.4 L2557.9 366.3 L2571.4 375.3 L2584.9 384.3 L2598.4 393.5 L2611.9 401.9 L2625.4 410.1 L2638.9 418.2 L2652.4 426.3 L2665.9 436.2 L2679.4 446.7 L2692.9 457.1 L2706.4 466.6 L2719.9 476 L2733.3 484.2 L2746.8 491 L2760.3 496.8 L2773.8 502.5 L2787.3 510.2 L2800.8 519.3 L2814.3 528.2 L2827.8 537.8 L2841.3 547.8 L2854.8 557 L2868.3 561.8 L2881.8 566 L2895.3 570 L2908.8 575.6 L2922.3 581.2 L2935.8 585.5 L2949.2 588.7 L2962.7 592 L2976.2 595.3 L2989.7 599 L3003.2 602.5 L3016.7 606 L3030.2 608.9 L3043.7 611.2 L3057.2 613.5 L3070.7 614.7 L3084.2 614.8 L3097.7 614.8 L3111.2 614.7 L3124.7 611.4 L3138.2 606.4 L3151.7 601.5 L3165.1 598.4 L3178.6 595.5 L3192.1 592.5 L3205.6 590.7 L3219.1 590.2 L3232.6 589.7 L3246.1 589.2 L3259.6 588.7 L3273.1 590.5 L3286.6 592.4 L3300.1 594.2 L3313.6 596.1 L3327.1 597.9 L3340.6 596.9 L3354.1 595.1 L3367.5 593.2 L3381 591.4 L3394.5 589.8 L3408 588.9 L3421.5 588.2 L3435 587.6 L3448.5 586.9 L3462 586.2 L3475.5 586.1 L3489 586.3 L3502.5 586.5 L3516 586.6 L3529.5 586.6 L3543 586.4 L3556.5 585.8 L3570 585.1 M2514.5 318.1 L2528 327 L2541.5 335.8 L2555 344.7 L2568.5 353.7 L2582 362.9 L2595.5 372.1 L2609 381.3 L2622.5 389.9 L2636 398.2 L2649.5 406.4 L2663 414.6 L2676.5 424.6 L2690 435.1 L2703.5 445.5 L2717 454.9 L2730.4 464.3 L2743.9 472.5 L2757.4 479.4 L2770.9 485.2 L2784.4 491 L2797.9 498.8 L2811.4 507.9 L2824.9 517 L2838.4 526.6 L2851.9 536.7 L2865.4 545.8 L2878.9 550.6 L2892.4 554.8 L2905.9 558.8 L2919.4 564.3 L2932.8 569.8 L2946.3 574 L2959.8 577.2 L2973.3 580.4 L2986.8 583.6 L3000.3 587.2 L3013.8 590.6 L3027.3 594 L3040.8 596.8 L3054.3 599 L3067.8 601.2 L3081.3 602.4 L3094.8 602.5 L3108.3 602.5 L3121.8 602.5 L3135.3 599.2 L3148.7 594 L3162.2 589.1 L3175.7 586 L3189.2 583.1 L3202.7 580.1 L3216.2 578.3 L3229.7 577.7 L3243.2 577.1 L3256.7 576.6 L3270.2 576 L3283.7 577.9 L3297.2 579.8 L3310.7 581.8 L3324.2 583.7 L3337.7 585.7 L3351.2 584.6 L3364.6 582.8 L3378.1 581 L3391.6 579.2 L3405.1 577.6 L3418.6 576.8 L3432.1 576.1 L3445.6 575.5 L3459.1 574.8 L3472.6 574.2 L3486.1 574.2 L3499.6 574.4 L3513.1 574.6 L3526.6 574.7 L3540.1 574.8 L3553.6 574.7 L3567.1 574.1 L3580.5 573.5 M2525.1 305 L2538.6 314 L2552.1 323 L2565.6 332 L2579.1 341.2 L2592.6 350.4 L2606.1 359.8 L2619.6 369.2 L2633.1 377.9 L2646.6 386.3 L2660.1 394.7 L2673.6 403 L2687.1 412.9 L2700.6 423.4 L2714 433.9 L2727.5 443.2 L2741 452.6 L2754.5 460.9 L2768 467.8 L2781.5 473.7 L2795 479.5 L2808.5 487.3 L2822 496.6 L2835.5 505.8 L2849 515.4 L2862.5 525.5 L2876 534.7 L2889.5 539.4 L2903 543.6 L2916.5 547.6 L2929.9 553 L2943.4 558.3 L2956.9 562.5 L2970.4 565.6 L2983.9 568.7 L2997.4 571.9 L3010.9 575.4 L3024.4 578.7 L3037.9 582 L3051.4 584.7 L3064.9 586.8 L3078.4 588.9 L3091.9 590.1 L3105.4 590.2 L3118.9 590.3 L3132.4 590.3 L3145.8 586.9 L3159.3 581.7 L3172.8 576.7 L3186.3 573.6 L3199.8 570.6 L3213.3 567.6 L3226.8 565.8 L3240.3 565.2 L3253.8 564.5 L3267.3 563.9 L3280.8 563.3 L3294.3 565.2 L3307.8 567.3 L3321.3 569.3 L3334.8 571.3 L3348.3 573.4 L3361.7 572.3 L3375.2 570.5 L3388.7 568.7 L3402.2 566.9 L3415.7 565.3 L3429.2 564.6 L3442.7 564 L3456.2 563.4 L3469.7 562.8 L3483.2 562.2 L3496.7 562.2 L3510.2 562.4 L3523.7 562.7 L3537.2 562.9 L3550.7 562.9 L3564.1 562.9 L3577.6 562.3 L3591.1 561.8 M2535.7 288.5 L2549.2 297.7 L2562.7 306.9 L2576.2 316.1 L2589.7 325.5 L2603.2 335 L2616.7 344.5 L2630.2 354.1 L2643.7 362.9 L2657.2 371.5 L2670.7 380 L2684.2 388.6 L2697.7 398.6 L2711.1 409.1 L2724.6 419.5 L2738.1 428.9 L2751.6 438.3 L2765.1 446.6 L2778.6 453.7 L2792.1 459.6 L2805.6 465.5 L2819.1 473.5 L2832.6 482.9 L2846.1 492.2 L2859.6 502 L2873.1 512.2 L2886.6 521.3 L2900.1 526.1 L2913.6 530.3 L2927 534.3 L2940.5 539.6 L2954 544.9 L2967.5 549.1 L2981 552.2 L2994.5 555.2 L3008 558.4 L3021.5 561.8 L3035 565 L3048.5 568.2 L3062 570.9 L3075.5 573 L3089 575 L3102.5 576.2 L3116 576.5 L3129.4 576.5 L3142.9 576.6 L3156.4 573.3 L3169.9 568.1 L3183.4 563 L3196.9 560 L3210.4 557 L3223.9 554 L3237.4 552.2 L3250.9 551.6 L3264.4 550.9 L3277.9 550.2 L3291.4 549.6 L3304.9 551.6 L3318.4 553.8 L3331.9 556 L3345.3 558.1 L3358.8 560.3 L3372.3 559.3 L3385.8 557.6 L3399.3 555.8 L3412.8 554 L3426.3 552.6 L3439.8 551.9 L3453.3 551.4 L3466.8 550.8 L3480.3 550.3 L3493.8 549.8 L3507.3 549.9 L3520.8 550.2 L3534.3 550.6 L3547.8 550.8 L3561.2 550.9 L3574.7 551 L3588.2 550.5 L3601.7 550.1 M2546.3 271.5 L2559.8 280.8 L2573.3 290.2 L2586.8 299.6 L2600.3 309.2 L2613.8 318.9 L2627.3 328.7 L2640.8 338.5 L2654.3 347.4 L2667.8 356.2 L2681.3 364.9 L2694.7 373.6 L2708.2 383.7 L2721.7 394.2 L2735.2 404.7 L2748.7 414.2 L2762.2 423.6 L2775.7 432 L2789.2 439.2 L2802.7 445.1 L2816.2 451.1 L2829.7 459.2 L2843.2 468.8 L2856.7 478.3 L2870.2 488.2 L2883.7 498.4 L2897.2 507.6 L2910.6 512.4 L2924.1 516.7 L2937.6 520.8 L2951.1 526 L2964.6 531.2 L2978.1 535.4 L2991.6 538.5 L3005.1 541.5 L3018.6 544.7 L3032.1 548 L3045.6 551.2 L3059.1 554.3 L3072.6 557 L3086.1 559 L3099.6 561 L3113.1 562.2 L3126.5 562.6 L3140 562.7 L3153.5 562.9 L3167 559.5 L3180.5 554.3 L3194 549.3 L3207.5 546.3 L3221 543.3 L3234.5 540.4 L3248 538.6 L3261.5 537.9 L3275 537.3 L3288.5 536.6 L3302 535.9 L3315.5 538.1 L3329 540.4 L3342.4 542.7 L3355.9 545 L3369.4 547.3 L3382.9 546.4 L3396.4 544.7 L3409.9 543 L3423.4 541.3 L3436.9 539.9 L3450.4 539.3 L3463.9 538.9 L3477.4 538.5 L3490.9 538 L3504.4 537.6 L3517.9 537.8 L3531.4 538.2 L3544.8 538.6 L3558.3 539 L3571.8 539.2 L3585.3 539.3 L3598.8 539 L3612.3 538.7 M2556.9 254.4 L2570.4 264 L2583.9 273.6 L2597.4 283.2 L2610.9 293.1 L2624.4 303 L2637.9 313 L2651.4 322.9 L2664.9 332.1 L2678.4 341 L2691.8 349.9 L2705.3 358.8 L2718.8 369 L2732.3 379.6 L2745.8 390.1 L2759.3 399.6 L2772.8 409 L2786.3 417.6 L2799.8 424.8 L2813.3 430.9 L2826.8 436.9 L2840.3 445.2 L2853.8 455 L2867.3 464.7 L2880.8 474.7 L2894.3 485 L2907.7 494.2 L2921.2 499.1 L2934.7 503.5 L2948.2 507.5 L2961.7 512.7 L2975.2 517.8 L2988.7 522 L3002.2 525.1 L3015.7 528.2 L3029.2 531.3 L3042.7 534.6 L3056.2 537.7 L3069.7 540.8 L3083.2 543.4 L3096.7 545.4 L3110.1 547.4 L3123.6 548.7 L3137.1 549.1 L3150.6 549.3 L3164.1 549.6 L3177.6 546.3 L3191.1 541.1 L3204.6 536 L3218.1 533.1 L3231.6 530.2 L3245.1 527.3 L3258.6 525.5 L3272.1 524.9 L3285.6 524.2 L3299.1 523.5 L3312.6 522.9 L3326 525.2 L3339.5 527.6 L3353 530.1 L3366.5 532.5 L3380 535 L3393.5 534.1 L3407 532.5 L3420.5 530.9 L3434 529.3 L3447.5 528 L3461 527.5 L3474.5 527.2 L3488 526.8 L3501.5 526.5 L3515 526.2 L3528.5 526.5 L3541.9 527 L3555.4 527.5 L3568.9 528 L3582.4 528.3 L3595.9 528.5 L3609.4 528.3 L3622.9 528.1 M2567.5 237.5 L2581 247.3 L2594.5 257.1 L2608 266.9 L2621.5 277 L2635 287.1 L2648.5 297.3 L2662 307.5 L2675.4 316.8 L2688.9 326 L2702.4 335 L2715.9 344.1 L2729.4 354.3 L2742.9 365 L2756.4 375.6 L2769.9 385.1 L2783.4 394.6 L2796.9 403.2 L2810.4 410.6 L2823.9 416.8 L2837.4 422.9 L2850.9 431.3 L2864.4 441.2 L2877.9 451.1 L2891.3 461.2 L2904.8 471.6 L2918.3 480.9 L2931.8 485.8 L2945.3 490.3 L2958.8 494.4 L2972.3 499.5 L2985.8 504.5 L2999.3 508.8 L3012.8 511.8 L3026.3 514.9 L3039.8 518.1 L3053.3 521.3 L3066.8 524.3 L3080.3 527.4 L3093.8 530 L3107.2 532 L3120.7 533.9 L3134.2 535.2 L3147.7 535.7 L3161.2 536 L3174.7 536.4 L3188.2 533.1 L3201.7 527.9 L3215.2 522.9 L3228.7 519.9 L3242.2 517.1 L3255.7 514.3 L3269.2 512.5 L3282.7 511.8 L3296.2 511.2 L3309.7 510.5 L3323.1 509.8 L3336.6 512.3 L3350.1 514.9 L3363.6 517.5 L3377.1 520.1 L3390.6 522.7 L3404.1 521.9 L3417.6 520.3 L3431.1 518.8 L3444.6 517.3 L3458.1 516.1 L3471.6 515.7 L3485.1 515.5 L3498.6 515.2 L3512.1 515 L3525.6 514.7 L3539 515.1 L3552.5 515.8 L3566 516.4 L3579.5 517 L3593 517.3 L3606.5 517.7 L3620 517.6 L3633.5 517.6 M2578.1 220.6 L2591.6 230.6 L2605.1 240.6 L2618.6 250.7 L2632.1 260.9 L2645.6 271.3 L2659.1 281.7 L2672.5 292.1 L2686 301.5 L2699.5 310.9 L2713 320.2 L2726.5 329.4 L2740 339.7 L2753.5 350.4 L2767 361.1 L2780.5 370.6 L2794 380.1 L2807.5 388.9 L2821 396.4 L2834.5 402.6 L2848 408.8 L2861.5 417.4 L2875 427.5 L2888.4 437.6 L2901.9 447.8 L2915.4 458.3 L2928.9 467.6 L2942.4 472.5 L2955.9 477.1 L2969.4 481.2 L2982.9 486.3 L2996.4 491.3 L3009.9 495.5 L3023.4 498.6 L3036.9 501.6 L3050.4 504.8 L3063.9 508 L3077.4 510.9 L3090.9 513.9 L3104.3 516.5 L3117.8 518.5 L3131.3 520.4 L3144.8 521.7 L3158.3 522.3 L3171.8 522.8 L3185.3 523.2 L3198.8 520 L3212.3 514.7 L3225.8 509.7 L3239.3 506.8 L3252.8 504 L3266.3 501.2 L3279.8 499.5 L3293.3 498.8 L3306.7 498.2 L3320.2 497.5 L3333.7 496.8 L3347.2 499.4 L3360.7 502.1 L3374.2 504.9 L3387.7 507.6 L3401.2 510.4 L3414.7 509.6 L3428.2 508.2 L3441.7 506.7 L3455.2 505.3 L3468.7 504.2 L3482.2 503.9 L3495.7 503.7 L3509.2 503.6 L3522.6 503.5 L3536.1 503.3 L3549.6 503.8 L3563.1 504.6 L3576.6 505.3 L3590.1 506 L3603.6 506.4 L3617.1 506.8 L3630.6 506.9 L3644.1 507 M2588.7 204.8 L2602.2 215 L2615.7 225.3 L2629.2 235.5 L2642.7 246 L2656.2 256.5 L2669.6 267.1 L2683.1 277.7 L2696.6 287.3 L2710.1 296.8 L2723.6 306.3 L2737.1 315.7 L2750.6 326.1 L2764.1 336.8 L2777.6 347.5 L2791.1 357 L2804.6 366.6 L2818.1 375.4 L2831.6 383 L2845.1 389.3 L2858.6 395.6 L2872 404.3 L2885.5 414.6 L2899 424.8 L2912.5 435.1 L2926 445.7 L2939.5 455.1 L2953 460 L2966.5 464.6 L2980 468.8 L2993.5 473.7 L3007 478.7 L3020.5 482.9 L3034 485.9 L3047.5 489 L3061 492.2 L3074.5 495.3 L3087.9 498.2 L3101.4 501.1 L3114.9 503.6 L3128.4 505.5 L3141.9 507.5 L3155.4 508.8 L3168.9 509.5 L3182.4 510 L3195.9 510.4 L3209.4 507.3 L3222.9 502 L3236.4 496.9 L3249.9 494.1 L3263.4 491.3 L3276.9 488.6 L3290.4 486.9 L3303.8 486.2 L3317.3 485.5 L3330.8 484.8 L3344.3 484.2 L3357.8 486.8 L3371.3 489.7 L3384.8 492.6 L3398.3 495.5 L3411.8 498.3 L3425.3 497.6 L3438.8 496.2 L3452.3 494.9 L3465.8 493.5 L3479.3 492.4 L3492.8 492.3 L3506.3 492.2 L3519.7 492.1 L3533.2 492.1 L3546.7 492 L3560.2 492.6 L3573.7 493.5 L3587.2 494.3 L3600.7 495 L3614.2 495.5 L3627.7 496 L3641.2 496.2 L3654.7 496.5 M2599.3 190.7 L2612.8 201.1 L2626.3 211.5 L2639.8 221.9 L2653.2 232.6 L2666.7 243.3 L2680.2 254.1 L2693.7 264.8 L2707.2 274.6 L2720.7 284.2 L2734.2 293.8 L2747.7 303.4 L2761.2 313.9 L2774.7 324.6 L2788.2 335.3 L2801.7 344.8 L2815.2 354.4 L2828.7 363.3 L2842.2 371 L2855.7 377.3 L2869.1 383.7 L2882.6 392.5 L2896.1 402.9 L2909.6 413.3 L2923.1 423.7 L2936.6 434.3 L2950.1 443.7 L2963.6 448.6 L2977.1 453.2 L2990.6 457.4 L3004.1 462.3 L3017.6 467.1 L3031.1 471.3 L3044.6 474.3 L3058.1 477.4 L3071.6 480.4 L3085 483.5 L3098.5 486.3 L3112 489.1 L3125.5 491.6 L3139 493.4 L3152.5 495.3 L3166 496.7 L3179.5 497.4 L3193 497.9 L3206.5 498.4 L3220 495.3 L3233.5 489.9 L3247 484.8 L3260.5 482 L3274 479.3 L3287.4 476.5 L3300.9 474.8 L3314.4 474.1 L3327.9 473.4 L3341.4 472.7 L3354.9 472 L3368.4 474.7 L3381.9 477.7 L3395.4 480.7 L3408.9 483.7 L3422.4 486.7 L3435.9 486 L3449.4 484.6 L3462.9 483.3 L3476.4 482 L3489.9 481 L3503.3 480.9 L3516.8 480.9 L3530.3 480.9 L3543.8 480.9 L3557.3 480.9 L3570.8 481.6 L3584.3 482.5 L3597.8 483.3 L3611.3 484.1 L3624.8 484.7 L3638.3 485.3 L3651.8 485.6 L3665.3 485.9 M2609.9 176.6 L2623.4 187.2 L2636.9 197.8 L2650.3 208.3 L2663.8 219.2 L2677.3 230.1 L2690.8 241.1 L2704.3 252 L2717.8 261.9 L2731.3 271.7 L2744.8 281.4 L2758.3 291.2 L2771.8 301.6 L2785.3 312.4 L2798.8 323.1 L2812.3 332.6 L2825.8 342.2 L2839.3 351.2 L2852.7 358.9 L2866.2 365.3 L2879.7 371.7 L2893.2 380.6 L2906.7 391.2 L2920.2 401.7 L2933.7 412.2 L2947.2 422.9 L2960.7 432.3 L2974.2 437.2 L2987.7 441.8 L3001.2 446.1 L3014.7 450.8 L3028.2 455.6 L3041.7 459.7 L3055.2 462.7 L3068.6 465.7 L3082.1 468.7 L3095.6 471.7 L3109.1 474.4 L3122.6 477.1 L3136.1 479.6 L3149.6 481.4 L3163.1 483.1 L3176.6 484.5 L3190.1 485.3 L3203.6 485.9 L3217.1 486.4 L3230.6 483.3 L3244.1 477.9 L3257.6 472.8 L3271.1 470 L3284.5 467.2 L3298 464.5 L3311.5 462.8 L3325 462 L3338.5 461.3 L3352 460.5 L3365.5 459.8 L3379 462.6 L3392.5 465.7 L3406 468.8 L3419.5 471.9 L3433 475 L3446.5 474.3 L3460 473.1 L3473.5 471.8 L3487 470.5 L3500.4 469.5 L3513.9 469.5 L3527.4 469.6 L3540.9 469.6 L3554.4 469.7 L3567.9 469.8 L3581.4 470.5 L3594.9 471.5 L3608.4 472.4 L3621.9 473.3 L3635.4 473.9 L3648.9 474.6 L3662.4 474.9 L3675.9 475.3 M2620.5 162.5 L2633.9 173.3 L2647.4 184 L2660.9 194.8 L2674.4 205.8 L2687.9 216.9 L2701.4 228.1 L2714.9 239.1 L2728.4 249.1 L2741.9 259.1 L2755.4 269 L2768.9 278.9 L2782.4 289.4 L2795.9 300.2 L2809.4 310.9 L2822.9 320.4 L2836.4 330 L2849.8 339 L2863.3 346.9 L2876.8 353.3 L2890.3 359.8 L2903.8 368.8 L2917.3 379.5 L2930.8 390.2 L2944.3 400.7 L2957.8 411.4 L2971.3 420.9 L2984.8 425.8 L2998.3 430.4 L3011.8 434.7 L3025.3 439.3 L3038.8 444 L3052.3 448.1 L3065.7 451.1 L3079.2 454 L3092.7 457 L3106.2 459.9 L3119.7 462.5 L3133.2 465.1 L3146.7 467.5 L3160.2 469.3 L3173.7 471 L3187.2 472.3 L3200.7 473.2 L3214.2 473.8 L3227.7 474.4 L3241.2 471.3 L3254.7 465.8 L3268.2 460.7 L3281.6 457.9 L3295.1 455.2 L3308.6 452.4 L3322.1 450.7 L3335.6 449.9 L3349.1 449.1 L3362.6 448.3 L3376.1 447.6 L3389.6 450.5 L3403.1 453.7 L3416.6 456.9 L3430.1 460.1 L3443.6 463.4 L3457.1 462.7 L3470.6 461.5 L3484 460.2 L3497.5 459 L3511 458.1 L3524.5 458.1 L3538 458.2 L3551.5 458.4 L3565 458.5 L3578.5 458.6 L3592 459.5 L3605.5 460.5 L3619 461.5 L3632.5 462.4 L3646 463.1 L3659.5 463.8 L3673 464.3 L3686.5 464.8 M2631 148.4 L2644.5 159.3 L2658 170.3 L2671.5 181.2 L2685 192.4 L2698.5 203.7 L2712 215 L2725.5 226.2 L2739 236.4 L2752.5 246.5 L2766 256.5 L2779.5 266.6 L2793 277.2 L2806.5 287.9 L2820 298.6 L2833.5 308.2 L2846.9 317.7 L2860.4 326.9 L2873.9 334.8 L2887.4 341.3 L2900.9 347.8 L2914.4 356.9 L2927.9 367.8 L2941.4 378.6 L2954.9 389.2 L2968.4 400 L2981.9 409.4 L2995.4 414.3 L3008.9 419 L3022.4 423.3 L3035.9 427.8 L3049.3 432.4 L3062.8 436.4 L3076.3 439.4 L3089.8 442.3 L3103.3 445.3 L3116.8 448.1 L3130.3 450.6 L3143.8 453.1 L3157.3 455.4 L3170.8 457.1 L3184.3 458.8 L3197.8 460.1 L3211.3 461 L3224.8 461.7 L3238.3 462.4 L3251.8 459.2 L3265.2 453.7 L3278.7 448.5 L3292.2 445.8 L3305.7 443 L3319.2 440.3 L3332.7 438.6 L3346.2 437.8 L3359.7 436.9 L3373.2 436.1 L3386.7 435.3 L3400.2 438.3 L3413.7 441.6 L3427.2 445 L3440.7 448.3 L3454.2 451.6 L3467.7 451 L3481.1 449.8 L3494.6 448.6 L3508.1 447.4 L3521.6 446.5 L3535.1 446.7 L3548.6 446.8 L3562.1 447 L3575.6 447.2 L3589.1 447.4 L3602.6 448.3 L3616.1 449.4 L3629.6 450.5 L3643.1 451.4 L3656.6 452.2 L3670.1 452.9 L3683.6 453.5 L3697 454.1 M2641.6 134.3 L2655.1 145.4 L2668.6 156.5 L2682.1 167.6 L2695.6 179 L2709.1 190.5 L2722.6 202 L2736.1 213.4 L2749.6 223.6 L2763.1 233.9 L2776.6 244.1 L2790.1 254.3 L2803.6 264.9 L2817.1 275.7 L2830.5 286.4 L2844 296 L2857.5 305.5 L2871 314.7 L2884.5 322.7 L2898 329.3 L2911.5 335.8 L2925 345 L2938.5 356.1 L2952 367 L2965.5 377.7 L2979 388.5 L2992.5 398 L3006 402.9 L3019.5 407.6 L3033 411.9 L3046.4 416.3 L3059.9 420.8 L3073.4 424.8 L3086.9 427.7 L3100.4 430.6 L3113.9 433.5 L3127.4 436.2 L3140.9 438.6 L3154.4 441.1 L3167.9 443.3 L3181.4 445 L3194.9 446.6 L3208.4 447.9 L3221.9 448.9 L3235.4 449.6 L3248.9 450.3 L3262.3 447.2 L3275.8 441.6 L3289.3 436.4 L3302.8 433.6 L3316.3 430.9 L3329.8 428.2 L3343.3 426.5 L3356.8 425.6 L3370.3 424.7 L3383.8 423.9 L3397.3 423 L3410.8 426.1 L3424.3 429.6 L3437.8 433 L3451.3 436.4 L3464.8 439.9 L3478.2 439.3 L3491.7 438.1 L3505.2 436.9 L3518.7 435.8 L3532.2 435 L3545.7 435.2 L3559.2 435.4 L3572.7 435.7 L3586.2 435.9 L3599.7 436.2 L3613.2 437.2 L3626.7 438.3 L3640.2 439.4 L3653.7 440.5 L3667.2 441.3 L3680.6 442.1 L3694.1 442.8 L3707.6 443.4 M2652.2 120.2 L2665.7 131.5 L2679.2 142.8 L2692.7 154 L2706.2 165.6 L2719.7 177.3 L2733.2 189 L2746.7 200.5 L2760.2 210.9 L2773.7 221.3 L2787.2 231.7 L2800.7 242 L2814.2 252.7 L2827.6 263.5 L2841.1 274.2 L2854.6 283.7 L2868.1 293.3 L2881.6 302.6 L2895.1 310.6 L2908.6 317.2 L2922.1 323.9 L2935.6 333.2 L2949.1 344.3 L2962.6 355.4 L2976.1 366.2 L2989.6 377 L3003.1 386.5 L3016.6 391.4 L3030.1 396.2 L3043.5 400.4 L3057 404.8 L3070.5 409.2 L3084 413.2 L3097.5 416 L3111 418.9 L3124.5 421.8 L3138 424.4 L3151.5 426.7 L3165 429 L3178.5 431.3 L3192 432.8 L3205.5 434.4 L3219 435.7 L3232.5 436.7 L3245.9 437.5 L3259.4 438.2 L3272.9 435.1 L3286.4 429.5 L3299.9 424.2 L3313.4 421.5 L3326.9 418.8 L3340.4 416.1 L3353.9 414.3 L3367.4 413.4 L3380.9 412.5 L3394.4 411.6 L3407.9 410.8 L3421.4 413.9 L3434.9 417.5 L3448.4 421.1 L3461.8 424.6 L3475.3 428.1 L3488.8 427.6 L3502.3 426.4 L3515.8 425.3 L3529.3 424.2 L3542.8 423.5 L3556.3 423.7 L3569.8 424 L3583.3 424.3 L3596.8 424.6 L3610.3 424.9 L3623.8 426 L3637.3 427.2 L3650.8 428.4 L3664.3 429.5 L3677.7 430.4 L3691.2 431.2 L3704.7 432 L3718.2 432.8 M2662.8 107.9 L2676.3 119.4 L2689.8 130.8 L2703.3 142.3 L2716.8 154 L2730.3 165.8 L2743.8 177.7 L2757.3 189.4 L2770.8 199.9 L2784.3 210.4 L2797.8 221 L2811.2 231.4 L2824.7 242.1 L2838.2 252.9 L2851.7 263.7 L2865.2 273.2 L2878.7 282.7 L2892.2 292.1 L2905.7 300.2 L2919.2 306.9 L2932.7 313.5 L2946.2 322.9 L2959.7 334.2 L2973.2 345.4 L2986.7 356.3 L3000.2 367.2 L3013.7 376.7 L3027.1 381.5 L3040.6 386.3 L3054.1 390.6 L3067.6 394.8 L3081.1 399.1 L3094.6 403 L3108.1 405.8 L3121.6 408.7 L3135.1 411.5 L3148.6 414 L3162.1 416.2 L3175.6 418.5 L3189.1 420.6 L3202.6 422.1 L3216.1 423.6 L3229.6 424.9 L3243 426 L3256.5 426.8 L3270 427.6 L3283.5 424.4 L3297 418.8 L3310.5 413.5 L3324 410.7 L3337.5 408 L3351 405.3 L3364.5 403.5 L3378 402.6 L3391.5 401.7 L3405 400.7 L3418.5 399.8 L3432 403 L3445.5 406.7 L3458.9 410.4 L3472.4 414 L3485.9 417.6 L3499.4 417.1 L3512.9 416 L3526.4 414.9 L3539.9 413.8 L3553.4 413.1 L3566.9 413.4 L3580.4 413.8 L3593.9 414.1 L3607.4 414.5 L3620.9 414.8 L3634.4 416 L3647.9 417.2 L3661.3 418.5 L3674.8 419.6 L3688.3 420.6 L3701.8 421.5 L3715.3 422.3 L3728.8 423.2 M2673.4 96 L2686.9 107.6 L2700.4 119.2 L2713.9 130.8 L2727.4 142.7 L2740.9 154.7 L2754.4 166.7 L2767.9 178.5 L2781.4 189.2 L2794.9 199.9 L2808.3 210.5 L2821.8 221.2 L2835.3 231.9 L2848.8 242.7 L2862.3 253.4 L2875.8 262.9 L2889.3 272.4 L2902.8 281.8 L2916.3 290 L2929.8 296.7 L2943.3 303.4 L2956.8 312.9 L2970.3 324.3 L2983.8 335.7 L2997.3 346.6 L3010.8 357.5 L3024.2 367 L3037.7 371.8 L3051.2 376.7 L3064.7 380.9 L3078.2 385.1 L3091.7 389.2 L3105.2 393.1 L3118.7 395.9 L3132.2 398.6 L3145.7 401.4 L3159.2 403.8 L3172.7 405.9 L3186.2 408.1 L3199.7 410.1 L3213.2 411.5 L3226.6 413 L3240.1 414.3 L3253.6 415.4 L3267.1 416.2 L3280.6 417 L3294.1 413.9 L3307.6 408.2 L3321.1 402.8 L3334.6 400.1 L3348.1 397.4 L3361.6 394.6 L3375.1 392.9 L3388.6 391.9 L3402.1 390.9 L3415.6 389.9 L3429.1 388.9 L3442.5 392.2 L3456 396 L3469.5 399.7 L3483 403.5 L3496.5 407.2 L3510 406.6 L3523.5 405.6 L3537 404.5 L3550.5 403.5 L3564 402.8 L3577.5 403.2 L3591 403.6 L3604.5 404 L3618 404.4 L3631.5 404.8 L3645 406 L3658.4 407.3 L3671.9 408.6 L3685.4 409.8 L3698.9 410.8 L3712.4 411.7 L3725.9 412.7 L3739.4 413.6 M2684 84 L2697.5 95.8 L2711 107.5 L2724.5 119.3 L2738 131.4 L2751.5 143.6 L2765 155.8 L2778.5 167.7 L2791.9 178.5 L2805.4 189.3 L2818.9 200.1 L2832.4 210.9 L2845.9 221.6 L2859.4 232.4 L2872.9 243.1 L2886.4 252.6 L2899.9 262.1 L2913.4 271.6 L2926.9 279.8 L2940.4 286.6 L2953.9 293.3 L2967.4 302.9 L2980.9 314.4 L2994.4 325.9 L3007.8 336.9 L3021.3 347.8 L3034.8 357.3 L3048.3 362.2 L3061.8 367 L3075.3 371.3 L3088.8 375.3 L3102.3 379.3 L3115.8 383.2 L3129.3 385.9 L3142.8 388.6 L3156.3 391.3 L3169.8 393.6 L3183.3 395.7 L3196.8 397.7 L3210.3 399.7 L3223.7 401 L3237.2 402.3 L3250.7 403.7 L3264.2 404.8 L3277.7 405.6 L3291.2 406.5 L3304.7 403.3 L3318.2 397.6 L3331.7 392.1 L3345.2 389.4 L3358.7 386.7 L3372.2 384 L3385.7 382.2 L3399.2 381.1 L3412.7 380.1 L3426.2 379 L3439.6 378 L3453.1 381.4 L3466.6 385.3 L3480.1 389.1 L3493.6 392.9 L3507.1 396.8 L3520.6 396.2 L3534.1 395.2 L3547.6 394.2 L3561.1 393.1 L3574.6 392.5 L3588.1 393 L3601.6 393.4 L3615.1 393.9 L3628.6 394.3 L3642.1 394.8 L3655.5 396 L3669 397.4 L3682.5 398.7 L3696 399.9 L3709.5 401 L3723 402 L3736.5 403 L3750 404 M2212 954 L2212 598 M2250.6 965.1 L2250.6 610.9 M2288.4 975.9 L2288.4 623.6 M2325.7 986.6 L2325.7 638.4 M2363.9 997.6 L2363.9 651.2 M2397.8 1007.3 L2397.8 678.7 M2431.7 1017.1 L2431.7 704.3 M2458 1024.6 L2458 714.8 M2486.9 1032.9 L2486.9 725.4 M2527.1 1044.5 L2527.1 742.4 M2566.6 1055.8 L2566.6 769.9 M2602.2 1066 L2602.2 780.5 M2634.4 1075.3 L2634.4 801.8 M2681.9 1088.9 L2681.9 818.7 M2728.6 1102.3 L2728.6 842 M2771 1114.5 L2771 856.4 M2801.5 1123.2 L2801.5 855.2 M2824.8 1129.9 L2824.8 853.3 M2867.2 1142.1 L2867.2 843.6 M2907.5 1153.6 L2907.5 835.9 M2939.3 1162.8 L2939.3 838.6 M2973.2 1172.5 L2973.2 841.5 M3009.3 1182.9 L3009.3 840 M3043.2 1192.6 L3043.2 838.6 M3077.1 1202.3 L3077.1 832.9 M3111 1212.1 L3111 827 M3145 1221.8 L3145 822.6 M3178.9 1231.6 L3178.9 818.4 M3212.9 1241.3 L3212.9 816 M3246.8 1251 L3246.8 813.8 M3278 1260 L3278 808 M3278 1260 L3278 808 M3291 1248.8 L3291 799.1 M3301 1240.1 L3301 792.2 M3310.5 1231.9 L3310.5 785.7 M3321 1222.8 L3321 779.5 M3332 1213.3 L3332 774.6 M3341 1205.5 L3341 770.6 M3351 1196.9 L3351 766.2 M3368 1182.2 L3368 758.3 M3386 1166.6 L3386 748.2 M3403 1151.9 L3403 738.8 M3418 1139 L3418 731.7 M3422 1135.5 L3422 729.8 M3425 1132.9 L3425 728.3 M3428 1130.3 L3428 726.9 M3436 1123.4 L3436 723.1 M3443 1117.4 L3443 719.7 M3451 1110.5 L3451 711.8 M3460 1102.7 L3460 701.7 M3467.5 1096.2 L3467.5 693.2 M3475 1089.7 L3475 685.3 M3484 1081.9 L3484 676.3 M3492 1075 L3492 668.3 M3500 1068.1 L3500 660.4 M3509 1060.3 L3509 650.8 M3517 1053.4 L3517 642.2 M3527.6 1044.3 L3527.6 630.7 M3538.2 1035.1 L3538.2 619.3 M3548.8 1025.9 L3548.8 607.9 M3559.4 1016.8 L3559.4 596.5 M3570 1007.6 L3570 585.1 M3580.5 998.5 L3580.5 573.5 M3591.1 989.3 L3591.1 561.8 M3601.7 980.2 L3601.7 550.1 M3612.3 971 L3612.3 538.7 M3622.9 961.9 L3622.9 528.1 M3633.5 952.7 L3633.5 517.6 M3644.1 943.5 L3644.1 507 M3654.7 934.4 L3654.7 496.5 M3665.3 925.2 L3665.3 485.9 M3675.9 916.1 L3675.9 475.3 M3686.5 906.9 L3686.5 464.8 M3697 897.8 L3697 454.1 M3707.6 888.6 L3707.6 443.4 M3718.2 879.5 L3718.2 432.8 M3728.8 870.3 L3728.8 423.2 M3739.4 861.2 L3739.4 413.6 M3750 852 L3750 404 M2212 936.2 L2225.5 940.1 L2239 944 L2252.5 947.9 L2266 951.8 L2279.5 955.7 L2293 959.7 L2306.5 963.6 L2319.9 967.5 L2333.4 971.5 L2346.9 975.4 L2360.4 979.3 L2373.9 983.4 L2387.4 987.7 L2400.9 991.9 L2414.4 996.1 L2427.9 1000.2 L2441.4 1004.3 L2454.9 1008.2 L2468.4 1012.1 L2481.9 1016.1 L2495.4 1020 L2508.9 1024 L2522.4 1028 L2535.8 1032 L2549.3 1036.2 L2562.8 1040.3 L2576.3 1044.3 L2589.8 1048.2 L2603.3 1052.1 L2616.8 1056.2 L2630.3 1060.3 L2643.8 1064.3 L2657.3 1068.2 L2670.8 1072.1 L2684.3 1076.1 L2697.8 1080.1 L2711.3 1084.1 L2724.8 1088.1 L2738.3 1092.1 L2751.7 1096 L2765.2 1099.9 L2778.7 1103.7 L2792.2 1107.3 L2805.7 1111 L2819.2 1114.6 L2832.7 1118.1 L2846.2 1121.7 L2859.7 1125.2 L2873.2 1128.7 L2886.7 1132.3 L2900.2 1135.8 L2913.7 1139.5 L2927.2 1143.2 L2940.7 1146.9 L2954.2 1150.7 L2967.6 1154.4 L2981.1 1158.1 L2994.6 1161.8 L3008.1 1165.4 L3021.6 1169.1 L3035.1 1172.7 L3048.6 1176.3 L3062.1 1179.9 L3075.6 1183.5 L3089.1 1187 L3102.6 1190.6 L3116.1 1194.2 L3129.6 1197.8 L3143.1 1201.3 L3156.6 1204.9 L3170.1 1208.5 L3183.5 1212.1 L3197 1215.8 L3210.5 1219.4 L3224 1223 L3237.5 1226.7 L3251 1230.3 L3264.5 1233.9 L3278 1237.4 M3278 1237.4 L3284 1232.3 L3289.9 1227.2 L3295.9 1222.1 L3301.9 1217 L3307.9 1211.8 L3313.8 1206.7 L3319.8 1201.7 L3325.8 1196.6 L3331.8 1191.6 L3337.7 1186.5 L3343.7 1181.5 L3349.7 1176.5 L3355.7 1171.4 L3361.6 1166.4 L3367.6 1161.3 L3373.6 1156.3 L3379.6 1151.2 L3385.5 1146.1 L3391.5 1141 L3397.5 1136 L3403.5 1130.9 L3409.4 1125.8 L3415.4 1120.8 L3421.4 1115.8 L3427.4 1110.7 L3433.3 1105.7 L3439.3 1100.6 L3445.3 1095.5 L3451.3 1090.3 L3457.2 1085 L3463.2 1079.8 L3469.2 1074.6 L3475.2 1069.3 L3481.1 1064.1 L3487.1 1058.9 L3493.1 1053.7 L3499.1 1048.5 L3505 1043.3 L3511 1038.1 L3517 1032.9 L3523 1027.6 L3528.9 1022.4 L3534.9 1017.2 L3540.9 1011.9 L3546.9 1006.7 L3552.8 1001.5 L3558.8 996.3 L3564.8 991 L3570.8 985.8 L3576.7 980.6 L3582.7 975.3 L3588.7 970.1 L3594.7 964.9 L3600.6 959.6 L3606.6 954.4 L3612.6 949.2 L3618.6 944 L3624.5 938.8 L3630.5 933.6 L3636.5 928.4 L3642.5 923.1 L3648.4 917.9 L3654.4 912.7 L3660.4 907.5 L3666.4 902.3 L3672.3 897.1 L3678.3 891.9 L3684.3 886.7 L3690.3 881.5 L3696.2 876.3 L3702.2 871.1 L3708.2 865.9 L3714.2 860.7 L3720.1 855.5 L3726.1 850.3 L3732.1 845.1 L3738.1 840 L3744 834.8 L3750 829.6 M2212 918.4 L2225.5 922.3 L2239 926.3 L2252.5 930.2 L2266 934.2 L2279.5 938.1 L2293 942.1 L2306.5 946.1 L2319.9 950.1 L2333.4 954.1 L2346.9 958 L2360.4 962 L2373.9 966.4 L2387.4 970.9 L2400.9 975.5 L2414.4 980 L2427.9 984.5 L2441.4 988.7 L2454.9 992.7 L2468.4 996.7 L2481.9 1000.7 L2495.4 1004.7 L2508.9 1008.8 L2522.4 1012.8 L2535.8 1017.1 L2549.3 1021.5 L2562.8 1026 L2576.3 1030 L2589.8 1033.9 L2603.3 1037.8 L2616.8 1042.2 L2630.3 1046.6 L2643.8 1050.7 L2657.3 1054.6 L2670.8 1058.6 L2684.3 1062.6 L2697.8 1066.8 L2711.3 1070.9 L2724.8 1075.1 L2738.3 1079.1 L2751.7 1083 L2765.2 1087 L2778.7 1090.6 L2792.2 1094.1 L2805.7 1097.5 L2819.2 1100.9 L2832.7 1104.1 L2846.2 1107.3 L2859.7 1110.5 L2873.2 1113.7 L2886.7 1116.9 L2900.2 1120.1 L2913.7 1123.5 L2927.2 1127.1 L2940.7 1130.7 L2954.2 1134.3 L2967.6 1137.9 L2981.1 1141.4 L2994.6 1144.9 L3008.1 1148.3 L3021.6 1151.7 L3035.1 1155.1 L3048.6 1158.5 L3062.1 1161.8 L3075.6 1165 L3089.1 1168.3 L3102.6 1171.5 L3116.1 1174.8 L3129.6 1178.1 L3143.1 1181.4 L3156.6 1184.7 L3170.1 1188.1 L3183.5 1191.4 L3197 1194.8 L3210.5 1198.2 L3224 1201.6 L3237.5 1205 L3251 1208.4 L3264.5 1211.6 L3278 1214.8 M3278 1214.8 L3284 1209.7 L3289.9 1204.7 L3295.9 1199.6 L3301.9 1194.6 L3307.9 1189.5 L3313.8 1184.5 L3319.8 1179.5 L3325.8 1174.5 L3331.8 1169.6 L3337.7 1164.7 L3343.7 1159.8 L3349.7 1154.9 L3355.7 1150 L3361.6 1145.1 L3367.6 1140.1 L3373.6 1135.1 L3379.6 1130.2 L3385.5 1125.2 L3391.5 1120.2 L3397.5 1115.2 L3403.5 1110.3 L3409.4 1105.3 L3415.4 1100.4 L3421.4 1095.5 L3427.4 1090.5 L3433.3 1085.6 L3439.3 1080.7 L3445.3 1075.7 L3451.3 1070.4 L3457.2 1065 L3463.2 1059.7 L3469.2 1054.4 L3475.2 1049.1 L3481.1 1043.9 L3487.1 1038.6 L3493.1 1033.4 L3499.1 1028.2 L3505 1022.9 L3511 1017.6 L3517 1012.3 L3523 1007 L3528.9 1001.7 L3534.9 996.4 L3540.9 991.1 L3546.9 985.8 L3552.8 980.5 L3558.8 975.2 L3564.8 970 L3570.8 964.7 L3576.7 959.4 L3582.7 954.1 L3588.7 948.7 L3594.7 943.4 L3600.6 938.1 L3606.6 932.8 L3612.6 927.5 L3618.6 922.3 L3624.5 917.1 L3630.5 911.8 L3636.5 906.6 L3642.5 901.3 L3648.4 896.1 L3654.4 890.8 L3660.4 885.6 L3666.4 880.4 L3672.3 875.1 L3678.3 869.9 L3684.3 864.6 L3690.3 859.4 L3696.2 854.1 L3702.2 848.9 L3708.2 843.6 L3714.2 838.4 L3720.1 833.1 L3726.1 828 L3732.1 822.8 L3738.1 817.6 L3744 812.4 L3750 807.2 M2212 900.6 L2225.5 904.6 L2239 908.5 L2252.5 912.5 L2266 916.5 L2279.5 920.5 L2293 924.5 L2306.5 928.6 L2319.9 932.7 L2333.4 936.7 L2346.9 940.7 L2360.4 944.6 L2373.9 949.3 L2387.4 954.2 L2400.9 959.2 L2414.4 964 L2427.9 968.8 L2441.4 973.1 L2454.9 977.2 L2468.4 981.2 L2481.9 985.3 L2495.4 989.4 L2508.9 993.5 L2522.4 997.7 L2535.8 1002.2 L2549.3 1006.9 L2562.8 1011.6 L2576.3 1015.7 L2589.8 1019.6 L2603.3 1023.6 L2616.8 1028.2 L2630.3 1032.8 L2643.8 1037 L2657.3 1041 L2670.8 1045.1 L2684.3 1049.1 L2697.8 1053.4 L2711.3 1057.7 L2724.8 1062 L2738.3 1066.1 L2751.7 1070.1 L2765.2 1074.1 L2778.7 1077.6 L2792.2 1080.8 L2805.7 1084 L2819.2 1087.2 L2832.7 1090.1 L2846.2 1092.9 L2859.7 1095.7 L2873.2 1098.6 L2886.7 1101.5 L2900.2 1104.4 L2913.7 1107.6 L2927.2 1111 L2940.7 1114.5 L2954.2 1118 L2967.6 1121.4 L2981.1 1124.7 L2994.6 1127.9 L3008.1 1131.2 L3021.6 1134.4 L3035.1 1137.6 L3048.6 1140.7 L3062.1 1143.7 L3075.6 1146.6 L3089.1 1149.5 L3102.6 1152.5 L3116.1 1155.4 L3129.6 1158.5 L3143.1 1161.5 L3156.6 1164.5 L3170.1 1167.6 L3183.5 1170.7 L3197 1173.8 L3210.5 1177 L3224 1180.1 L3237.5 1183.3 L3251 1186.4 L3264.5 1189.3 L3278 1192.2 M3278 1192.2 L3284 1187.2 L3289.9 1182.2 L3295.9 1177.2 L3301.9 1172.2 L3307.9 1167.2 L3313.8 1162.2 L3319.8 1157.3 L3325.8 1152.5 L3331.8 1147.7 L3337.7 1142.9 L3343.7 1138.1 L3349.7 1133.3 L3355.7 1128.6 L3361.6 1123.8 L3367.6 1118.9 L3373.6 1114 L3379.6 1109.1 L3385.5 1104.2 L3391.5 1099.4 L3397.5 1094.5 L3403.5 1089.6 L3409.4 1084.8 L3415.4 1080 L3421.4 1075.2 L3427.4 1070.3 L3433.3 1065.5 L3439.3 1060.7 L3445.3 1055.8 L3451.3 1050.4 L3457.2 1045 L3463.2 1039.6 L3469.2 1034.2 L3475.2 1028.9 L3481.1 1023.6 L3487.1 1018.3 L3493.1 1013.1 L3499.1 1007.8 L3505 1002.5 L3511 997.1 L3517 991.7 L3523 986.4 L3528.9 981 L3534.9 975.7 L3540.9 970.3 L3546.9 964.9 L3552.8 959.6 L3558.8 954.2 L3564.8 948.9 L3570.8 943.5 L3576.7 938.2 L3582.7 932.8 L3588.7 927.4 L3594.7 922 L3600.6 916.6 L3606.6 911.3 L3612.6 905.9 L3618.6 900.6 L3624.5 895.4 L3630.5 890.1 L3636.5 884.8 L3642.5 879.5 L3648.4 874.2 L3654.4 868.9 L3660.4 863.7 L3666.4 858.4 L3672.3 853.1 L3678.3 847.8 L3684.3 842.5 L3690.3 837.2 L3696.2 831.9 L3702.2 826.7 L3708.2 821.4 L3714.2 816.1 L3720.1 810.8 L3726.1 805.6 L3732.1 800.4 L3738.1 795.2 L3744 790 L3750 784.8 M2212 882.8 L2225.5 886.8 L2239 890.8 L2252.5 894.8 L2266 898.8 L2279.5 902.8 L2293 906.9 L2306.5 911.1 L2319.9 915.2 L2333.4 919.3 L2346.9 923.3 L2360.4 927.3 L2373.9 932.3 L2387.4 937.5 L2400.9 942.8 L2414.4 947.9 L2427.9 953.1 L2441.4 957.5 L2454.9 961.7 L2468.4 965.8 L2481.9 969.9 L2495.4 974.1 L2508.9 978.3 L2522.4 982.6 L2535.8 987.3 L2549.3 992.3 L2562.8 997.2 L2576.3 1001.4 L2589.8 1005.3 L2603.3 1009.3 L2616.8 1014.2 L2630.3 1019.1 L2643.8 1023.4 L2657.3 1027.4 L2670.8 1031.5 L2684.3 1035.6 L2697.8 1040.1 L2711.3 1044.5 L2724.8 1049 L2738.3 1053.1 L2751.7 1057.1 L2765.2 1061.1 L2778.7 1064.6 L2792.2 1067.6 L2805.7 1070.5 L2819.2 1073.5 L2832.7 1076 L2846.2 1078.5 L2859.7 1081 L2873.2 1083.5 L2886.7 1086.1 L2900.2 1088.7 L2913.7 1091.6 L2927.2 1095 L2940.7 1098.3 L2954.2 1101.6 L2967.6 1104.9 L2981.1 1108.1 L2994.6 1111 L3008.1 1114 L3021.6 1117 L3035.1 1120 L3048.6 1122.9 L3062.1 1125.5 L3075.6 1128.2 L3089.1 1130.8 L3102.6 1133.4 L3116.1 1136.1 L3129.6 1138.8 L3143.1 1141.6 L3156.6 1144.4 L3170.1 1147.1 L3183.5 1149.9 L3197 1152.8 L3210.5 1155.7 L3224 1158.7 L3237.5 1161.6 L3251 1164.4 L3264.5 1167 L3278 1169.6 M3278 1169.6 L3284 1164.6 L3289.9 1159.7 L3295.9 1154.7 L3301.9 1149.8 L3307.9 1144.8 L3313.8 1139.9 L3319.8 1135.1 L3325.8 1130.4 L3331.8 1125.8 L3337.7 1121.1 L3343.7 1116.4 L3349.7 1111.8 L3355.7 1107.1 L3361.6 1102.5 L3367.6 1097.7 L3373.6 1092.9 L3379.6 1088.1 L3385.5 1083.3 L3391.5 1078.5 L3397.5 1073.7 L3403.5 1069 L3409.4 1064.3 L3415.4 1059.6 L3421.4 1054.9 L3427.4 1050.2 L3433.3 1045.4 L3439.3 1040.7 L3445.3 1036 L3451.3 1030.5 L3457.2 1025 L3463.2 1019.5 L3469.2 1014.1 L3475.2 1008.7 L3481.1 1003.4 L3487.1 998 L3493.1 992.7 L3499.1 987.4 L3505 982 L3511 976.6 L3517 971.2 L3523 965.7 L3528.9 960.3 L3534.9 954.9 L3540.9 949.5 L3546.9 944.1 L3552.8 938.6 L3558.8 933.2 L3564.8 927.8 L3570.8 922.4 L3576.7 916.9 L3582.7 911.5 L3588.7 906.1 L3594.7 900.6 L3600.6 895.2 L3606.6 889.7 L3612.6 884.3 L3618.6 879 L3624.5 873.7 L3630.5 868.3 L3636.5 863 L3642.5 857.7 L3648.4 852.4 L3654.4 847.1 L3660.4 841.7 L3666.4 836.4 L3672.3 831.1 L3678.3 825.8 L3684.3 820.4 L3690.3 815.1 L3696.2 809.8 L3702.2 804.4 L3708.2 799.1 L3714.2 793.8 L3720.1 788.5 L3726.1 783.3 L3732.1 778 L3738.1 772.8 L3744 767.6 L3750 762.4 M2212 865 L2225.5 869 L2239 873.1 L2252.5 877.1 L2266 881.1 L2279.5 885.2 L2293 889.3 L2306.5 893.5 L2319.9 897.8 L2333.4 901.9 L2346.9 905.9 L2360.4 910 L2373.9 915.2 L2387.4 920.8 L2400.9 926.4 L2414.4 931.9 L2427.9 937.3 L2441.4 941.9 L2454.9 946.2 L2468.4 950.4 L2481.9 954.5 L2495.4 958.8 L2508.9 963.1 L2522.4 967.4 L2535.8 972.4 L2549.3 977.6 L2562.8 982.9 L2576.3 987.1 L2589.8 991 L2603.3 995.1 L2616.8 1000.2 L2630.3 1005.3 L2643.8 1009.7 L2657.3 1013.8 L2670.8 1018 L2684.3 1022.1 L2697.8 1026.7 L2711.3 1031.3 L2724.8 1035.9 L2738.3 1040.1 L2751.7 1044.2 L2765.2 1048.2 L2778.7 1051.6 L2792.2 1054.3 L2805.7 1057.1 L2819.2 1059.8 L2832.7 1062 L2846.2 1064.1 L2859.7 1066.3 L2873.2 1068.5 L2886.7 1070.7 L2900.2 1073 L2913.7 1075.7 L2927.2 1078.9 L2940.7 1082.1 L2954.2 1085.2 L2967.6 1088.4 L2981.1 1091.4 L2994.6 1094.1 L3008.1 1096.9 L3021.6 1099.7 L3035.1 1102.4 L3048.6 1105.1 L3062.1 1107.4 L3075.6 1109.7 L3089.1 1112 L3102.6 1114.3 L3116.1 1116.7 L3129.6 1119.2 L3143.1 1121.7 L3156.6 1124.2 L3170.1 1126.6 L3183.5 1129.2 L3197 1131.8 L3210.5 1134.5 L3224 1137.2 L3237.5 1139.9 L3251 1142.5 L3264.5 1144.7 L3278 1147 M3278 1147 L3284 1142.1 L3289.9 1137.2 L3295.9 1132.3 L3301.9 1127.4 L3307.9 1122.5 L3313.8 1117.6 L3319.8 1112.9 L3325.8 1108.3 L3331.8 1103.8 L3337.7 1099.3 L3343.7 1094.8 L3349.7 1090.2 L3355.7 1085.7 L3361.6 1081.2 L3367.6 1076.5 L3373.6 1071.8 L3379.6 1067.1 L3385.5 1062.4 L3391.5 1057.7 L3397.5 1053 L3403.5 1048.3 L3409.4 1043.7 L3415.4 1039.1 L3421.4 1034.6 L3427.4 1030 L3433.3 1025.4 L3439.3 1020.8 L3445.3 1016.1 L3451.3 1010.5 L3457.2 1005 L3463.2 999.4 L3469.2 993.9 L3475.2 988.5 L3481.1 983.1 L3487.1 977.7 L3493.1 972.4 L3499.1 967 L3505 961.6 L3511 956.1 L3517 950.6 L3523 945.1 L3528.9 939.6 L3534.9 934.1 L3540.9 928.7 L3546.9 923.2 L3552.8 917.7 L3558.8 912.2 L3564.8 906.7 L3570.8 901.3 L3576.7 895.7 L3582.7 890.2 L3588.7 884.7 L3594.7 879.2 L3600.6 873.7 L3606.6 868.1 L3612.6 862.7 L3618.6 857.3 L3624.5 852 L3630.5 846.6 L3636.5 841.2 L3642.5 835.9 L3648.4 830.5 L3654.4 825.2 L3660.4 819.8 L3666.4 814.4 L3672.3 809.1 L3678.3 803.7 L3684.3 798.3 L3690.3 793 L3696.2 787.6 L3702.2 782.2 L3708.2 776.8 L3714.2 771.5 L3720.1 766.1 L3726.1 760.9 L3732.1 755.7 L3738.1 750.5 L3744 745.2 L3750 740 M2212 847.2 L2225.5 851.3 L2239 855.3 L2252.5 859.4 L2266 863.5 L2279.5 867.5 L2293 871.7 L2306.5 876 L2319.9 880.3 L2333.4 884.5 L2346.9 888.6 L2360.4 892.6 L2373.9 898.1 L2387.4 904.1 L2400.9 910.1 L2414.4 915.8 L2427.9 921.6 L2441.4 926.3 L2454.9 930.7 L2468.4 934.9 L2481.9 939.1 L2495.4 943.4 L2508.9 947.9 L2522.4 952.3 L2535.8 957.4 L2549.3 963 L2562.8 968.5 L2576.3 972.8 L2589.8 976.8 L2603.3 980.8 L2616.8 986.2 L2630.3 991.6 L2643.8 996.1 L2657.3 1000.3 L2670.8 1004.4 L2684.3 1008.7 L2697.8 1013.4 L2711.3 1018.1 L2724.8 1022.9 L2738.3 1027.1 L2751.7 1031.2 L2765.2 1035.3 L2778.7 1038.6 L2792.2 1041.1 L2805.7 1043.6 L2819.2 1046.1 L2832.7 1048 L2846.2 1049.7 L2859.7 1051.5 L2873.2 1053.4 L2886.7 1055.3 L2900.2 1057.3 L2913.7 1059.7 L2927.2 1062.8 L2940.7 1065.8 L2954.2 1068.9 L2967.6 1071.9 L2981.1 1074.7 L2994.6 1077.2 L3008.1 1079.8 L3021.6 1082.3 L3035.1 1084.9 L3048.6 1087.3 L3062.1 1089.3 L3075.6 1091.3 L3089.1 1093.3 L3102.6 1095.3 L3116.1 1097.3 L3129.6 1099.5 L3143.1 1101.7 L3156.6 1104 L3170.1 1106.2 L3183.5 1108.4 L3197 1110.9 L3210.5 1113.3 L3224 1115.7 L3237.5 1118.2 L3251 1120.5 L3264.5 1122.5 L3278 1124.4 M3278 1124.4 L3284 1119.6 L3289.9 1114.7 L3295.9 1109.9 L3301.9 1105 L3307.9 1100.2 L3313.8 1095.3 L3319.8 1090.7 L3325.8 1086.3 L3331.8 1081.9 L3337.7 1077.5 L3343.7 1073.1 L3349.7 1068.7 L3355.7 1064.3 L3361.6 1059.8 L3367.6 1055.3 L3373.6 1050.7 L3379.6 1046.1 L3385.5 1041.5 L3391.5 1036.8 L3397.5 1032.2 L3403.5 1027.7 L3409.4 1023.2 L3415.4 1018.7 L3421.4 1014.3 L3427.4 1009.8 L3433.3 1005.3 L3439.3 1000.8 L3445.3 996.2 L3451.3 990.6 L3457.2 985 L3463.2 979.3 L3469.2 973.7 L3475.2 968.2 L3481.1 962.8 L3487.1 957.4 L3493.1 952 L3499.1 946.6 L3505 941.2 L3511 935.6 L3517 930.1 L3523 924.5 L3528.9 918.9 L3534.9 913.4 L3540.9 907.8 L3546.9 902.3 L3552.8 896.8 L3558.8 891.2 L3564.8 885.7 L3570.8 880.1 L3576.7 874.5 L3582.7 868.9 L3588.7 863.4 L3594.7 857.8 L3600.6 852.2 L3606.6 846.6 L3612.6 841.1 L3618.6 835.7 L3624.5 830.3 L3630.5 824.9 L3636.5 819.5 L3642.5 814.1 L3648.4 808.7 L3654.4 803.3 L3660.4 797.9 L3666.4 792.5 L3672.3 787.1 L3678.3 781.7 L3684.3 776.3 L3690.3 770.8 L3696.2 765.4 L3702.2 760 L3708.2 754.6 L3714.2 749.2 L3720.1 743.8 L3726.1 738.6 L3732.1 733.3 L3738.1 728.1 L3744 722.8 L3750 717.6 M2212 829.4 L2225.5 833.5 L2239 837.6 L2252.5 841.7 L2266 845.8 L2279.5 849.9 L2293 854.1 L2306.5 858.5 L2319.9 862.9 L2333.4 867.1 L2346.9 871.2 L2360.4 875.3 L2373.9 881.1 L2387.4 887.4 L2400.9 893.7 L2414.4 899.8 L2427.9 905.9 L2441.4 910.8 L2454.9 915.2 L2468.4 919.5 L2481.9 923.7 L2495.4 928.1 L2508.9 932.6 L2522.4 937.2 L2535.8 942.5 L2549.3 948.3 L2562.8 954.1 L2576.3 958.6 L2589.8 962.5 L2603.3 966.6 L2616.8 972.2 L2630.3 977.8 L2643.8 982.5 L2657.3 986.7 L2670.8 990.9 L2684.3 995.2 L2697.8 1000.1 L2711.3 1004.9 L2724.8 1009.8 L2738.3 1014.1 L2751.7 1018.3 L2765.2 1022.4 L2778.7 1025.5 L2792.2 1027.8 L2805.7 1030.1 L2819.2 1032.4 L2832.7 1033.9 L2846.2 1035.4 L2859.7 1036.8 L2873.2 1038.3 L2886.7 1039.9 L2900.2 1041.6 L2913.7 1043.8 L2927.2 1046.7 L2940.7 1049.6 L2954.2 1052.5 L2967.6 1055.4 L2981.1 1058 L2994.6 1060.3 L3008.1 1062.7 L3021.6 1065 L3035.1 1067.3 L3048.6 1069.5 L3062.1 1071.2 L3075.6 1072.8 L3089.1 1074.5 L3102.6 1076.2 L3116.1 1078 L3129.6 1079.9 L3143.1 1081.8 L3156.6 1083.8 L3170.1 1085.7 L3183.5 1087.7 L3197 1089.9 L3210.5 1092.1 L3224 1094.3 L3237.5 1096.5 L3251 1098.6 L3264.5 1100.2 L3278 1101.8 M3278 1101.8 L3284 1097 L3289.9 1092.2 L3295.9 1087.4 L3301.9 1082.6 L3307.9 1077.8 L3313.8 1073.1 L3319.8 1068.5 L3325.8 1064.2 L3331.8 1059.9 L3337.7 1055.7 L3343.7 1051.4 L3349.7 1047.1 L3355.7 1042.8 L3361.6 1038.5 L3367.6 1034.1 L3373.6 1029.6 L3379.6 1025.1 L3385.5 1020.5 L3391.5 1016 L3397.5 1011.5 L3403.5 1007 L3409.4 1002.7 L3415.4 998.3 L3421.4 994 L3427.4 989.6 L3433.3 985.2 L3439.3 980.9 L3445.3 976.4 L3451.3 970.7 L3457.2 965 L3463.2 959.3 L3469.2 953.5 L3475.2 948 L3481.1 942.6 L3487.1 937.1 L3493.1 931.7 L3499.1 926.3 L3505 920.7 L3511 915.1 L3517 909.5 L3523 903.9 L3528.9 898.2 L3534.9 892.6 L3540.9 887 L3546.9 881.4 L3552.8 875.8 L3558.8 870.2 L3564.8 864.6 L3570.8 859 L3576.7 853.3 L3582.7 847.7 L3588.7 842 L3594.7 836.3 L3600.6 830.7 L3606.6 825 L3612.6 819.5 L3618.6 814 L3624.5 808.6 L3630.5 803.1 L3636.5 797.7 L3642.5 792.2 L3648.4 786.8 L3654.4 781.4 L3660.4 775.9 L3666.4 770.5 L3672.3 765 L3678.3 759.6 L3684.3 754.2 L3690.3 748.7 L3696.2 743.2 L3702.2 737.8 L3708.2 732.3 L3714.2 726.9 L3720.1 721.5 L3726.1 716.2 L3732.1 711 L3738.1 705.7 L3744 700.5 L3750 695.2 M2212 811.6 L2225.5 815.7 L2239 819.9 L2252.5 824 L2266 828.1 L2279.5 832.3 L2293 836.5 L2306.5 841 L2319.9 845.5 L2333.4 849.7 L2346.9 853.9 L2360.4 858 L2373.9 864 L2387.4 870.7 L2400.9 877.4 L2414.4 883.8 L2427.9 890.2 L2441.4 895.2 L2454.9 899.7 L2468.4 904 L2481.9 908.3 L2495.4 912.8 L2508.9 917.4 L2522.4 922 L2535.8 927.6 L2549.3 933.7 L2562.8 939.7 L2576.3 944.3 L2589.8 948.2 L2603.3 952.3 L2616.8 958.2 L2630.3 964.1 L2643.8 968.8 L2657.3 973.1 L2670.8 977.3 L2684.3 981.7 L2697.8 986.7 L2711.3 991.7 L2724.8 996.7 L2738.3 1001.1 L2751.7 1005.3 L2765.2 1009.5 L2778.7 1012.5 L2792.2 1014.6 L2805.7 1016.6 L2819.2 1018.7 L2832.7 1019.9 L2846.2 1021 L2859.7 1022.1 L2873.2 1023.2 L2886.7 1024.6 L2900.2 1025.9 L2913.7 1027.8 L2927.2 1030.6 L2940.7 1033.4 L2954.2 1036.2 L2967.6 1039 L2981.1 1041.3 L2994.6 1043.4 L3008.1 1045.5 L3021.6 1047.6 L3035.1 1049.7 L3048.6 1051.7 L3062.1 1053 L3075.6 1054.4 L3089.1 1055.8 L3102.6 1057.2 L3116.1 1058.6 L3129.6 1060.3 L3143.1 1061.9 L3156.6 1063.6 L3170.1 1065.2 L3183.5 1066.9 L3197 1068.9 L3210.5 1070.9 L3224 1072.8 L3237.5 1074.8 L3251 1076.6 L3264.5 1077.9 L3278 1079.2 M3278 1079.2 L3284 1074.5 L3289.9 1069.7 L3295.9 1065 L3301.9 1060.2 L3307.9 1055.5 L3313.8 1050.8 L3319.8 1046.3 L3325.8 1042.1 L3331.8 1038 L3337.7 1033.8 L3343.7 1029.7 L3349.7 1025.5 L3355.7 1021.4 L3361.6 1017.2 L3367.6 1012.9 L3373.6 1008.5 L3379.6 1004 L3385.5 999.6 L3391.5 995.2 L3397.5 990.7 L3403.5 986.4 L3409.4 982.1 L3415.4 977.9 L3421.4 973.7 L3427.4 969.4 L3433.3 965.2 L3439.3 960.9 L3445.3 956.5 L3451.3 950.7 L3457.2 944.9 L3463.2 939.2 L3469.2 933.4 L3475.2 927.8 L3481.1 922.3 L3487.1 916.8 L3493.1 911.4 L3499.1 905.9 L3505 900.3 L3511 894.6 L3517 888.9 L3523 883.2 L3528.9 877.6 L3534.9 871.9 L3540.9 866.2 L3546.9 860.5 L3552.8 854.9 L3558.8 849.2 L3564.8 843.5 L3570.8 837.8 L3576.7 832.1 L3582.7 826.4 L3588.7 820.7 L3594.7 814.9 L3600.6 809.2 L3606.6 803.5 L3612.6 797.8 L3618.6 792.4 L3624.5 786.9 L3630.5 781.4 L3636.5 775.9 L3642.5 770.4 L3648.4 765 L3654.4 759.5 L3660.4 754 L3666.4 748.5 L3672.3 743 L3678.3 737.5 L3684.3 732.1 L3690.3 726.6 L3696.2 721.1 L3702.2 715.6 L3708.2 710.1 L3714.2 704.5 L3720.1 699.1 L3726.1 693.9 L3732.1 688.6 L3738.1 683.3 L3744 678.1 L3750 672.8 M2212 793.8 L2225.5 798 L2239 802.1 L2252.5 806.3 L2266 810.5 L2279.5 814.6 L2293 818.9 L2306.5 823.5 L2319.9 828 L2333.4 832.3 L2346.9 836.5 L2360.4 840.7 L2373.9 847 L2387.4 854 L2400.9 861 L2414.4 867.7 L2427.9 874.4 L2441.4 879.6 L2454.9 884.2 L2468.4 888.6 L2481.9 892.9 L2495.4 897.5 L2508.9 902.2 L2522.4 906.9 L2535.8 912.7 L2549.3 919 L2562.8 925.4 L2576.3 930 L2589.8 933.9 L2603.3 938 L2616.8 944.2 L2630.3 950.3 L2643.8 955.2 L2657.3 959.5 L2670.8 963.8 L2684.3 968.2 L2697.8 973.4 L2711.3 978.5 L2724.8 983.7 L2738.3 988.2 L2751.7 992.4 L2765.2 996.6 L2778.7 999.5 L2792.2 1001.3 L2805.7 1003.2 L2819.2 1005 L2832.7 1005.9 L2846.2 1006.6 L2859.7 1007.3 L2873.2 1008.2 L2886.7 1009.2 L2900.2 1010.1 L2913.7 1011.9 L2927.2 1014.5 L2940.7 1017.2 L2954.2 1019.8 L2967.6 1022.5 L2981.1 1024.7 L2994.6 1026.5 L3008.1 1028.4 L3021.6 1030.3 L3035.1 1032.2 L3048.6 1033.8 L3062.1 1034.9 L3075.6 1036 L3089.1 1037 L3102.6 1038.1 L3116.1 1039.2 L3129.6 1040.6 L3143.1 1042 L3156.6 1043.4 L3170.1 1044.7 L3183.5 1046.2 L3197 1047.9 L3210.5 1049.6 L3224 1051.4 L3237.5 1053.1 L3251 1054.7 L3264.5 1055.6 L3278 1056.6 M3278 1056.6 L3284 1051.9 L3289.9 1047.2 L3295.9 1042.5 L3301.9 1037.9 L3307.9 1033.2 L3313.8 1028.5 L3319.8 1024.1 L3325.8 1020.1 L3331.8 1016.1 L3337.7 1012 L3343.7 1008 L3349.7 1004 L3355.7 1000 L3361.6 995.9 L3367.6 991.7 L3373.6 987.4 L3379.6 983 L3385.5 978.7 L3391.5 974.3 L3397.5 970 L3403.5 965.7 L3409.4 961.6 L3415.4 957.5 L3421.4 953.4 L3427.4 949.2 L3433.3 945.1 L3439.3 941 L3445.3 936.7 L3451.3 930.8 L3457.2 924.9 L3463.2 919.1 L3469.2 913.2 L3475.2 907.6 L3481.1 902 L3487.1 896.5 L3493.1 891 L3499.1 885.5 L3505 879.9 L3511 874.1 L3517 868.4 L3523 862.6 L3528.9 856.9 L3534.9 851.1 L3540.9 845.4 L3546.9 839.6 L3552.8 833.9 L3558.8 828.2 L3564.8 822.4 L3570.8 816.7 L3576.7 810.9 L3582.7 805.1 L3588.7 799.3 L3594.7 793.5 L3600.6 787.7 L3606.6 781.9 L3612.6 776.2 L3618.6 770.7 L3624.5 765.2 L3630.5 759.7 L3636.5 754.1 L3642.5 748.6 L3648.4 743.1 L3654.4 737.6 L3660.4 732.1 L3666.4 726.5 L3672.3 721 L3678.3 715.5 L3684.3 710 L3690.3 704.4 L3696.2 698.9 L3702.2 693.3 L3708.2 687.8 L3714.2 682.2 L3720.1 676.8 L3726.1 671.5 L3732.1 666.2 L3738.1 661 L3744 655.7 L3750 650.4 M2212 776 L2225.5 780.2 L2239 784.4 L2252.5 788.6 L2266 792.8 L2279.5 797 L2293 801.3 L2306.5 806 L2319.9 810.6 L2333.4 814.9 L2346.9 819.1 L2360.4 823.3 L2373.9 829.9 L2387.4 837.3 L2400.9 844.7 L2414.4 851.7 L2427.9 858.7 L2441.4 864 L2454.9 868.6 L2468.4 873.1 L2481.9 877.5 L2495.4 882.2 L2508.9 887 L2522.4 891.8 L2535.8 897.7 L2549.3 904.4 L2562.8 911 L2576.3 915.7 L2589.8 919.6 L2603.3 923.8 L2616.8 930.2 L2630.3 936.6 L2643.8 941.5 L2657.3 945.9 L2670.8 950.2 L2684.3 954.7 L2697.8 960 L2711.3 965.3 L2724.8 970.6 L2738.3 975.2 L2751.7 979.4 L2765.2 983.6 L2778.7 986.5 L2792.2 988.1 L2805.7 989.7 L2819.2 991.3 L2832.7 991.8 L2846.2 992.2 L2859.7 992.6 L2873.2 993.1 L2886.7 993.8 L2900.2 994.4 L2913.7 995.9 L2927.2 998.4 L2940.7 1001 L2954.2 1003.5 L2967.6 1006 L2981.1 1008 L2994.6 1009.6 L3008.1 1011.3 L3021.6 1012.9 L3035.1 1014.6 L3048.6 1016 L3062.1 1016.8 L3075.6 1017.5 L3089.1 1018.3 L3102.6 1019 L3116.1 1019.9 L3129.6 1021 L3143.1 1022.1 L3156.6 1023.2 L3170.1 1024.3 L3183.5 1025.4 L3197 1026.9 L3210.5 1028.4 L3224 1029.9 L3237.5 1031.4 L3251 1032.7 L3264.5 1033.4 L3278 1034 M3278 1034 L3284 1029.4 L3289.9 1024.7 L3295.9 1020.1 L3301.9 1015.5 L3307.9 1010.8 L3313.8 1006.2 L3319.8 1001.9 L3325.8 998 L3331.8 994.1 L3337.7 990.2 L3343.7 986.3 L3349.7 982.4 L3355.7 978.5 L3361.6 974.6 L3367.6 970.5 L3373.6 966.3 L3379.6 962 L3385.5 957.7 L3391.5 953.5 L3397.5 949.2 L3403.5 945.1 L3409.4 941.1 L3415.4 937.1 L3421.4 933.1 L3427.4 929 L3433.3 925 L3439.3 921 L3445.3 916.8 L3451.3 910.9 L3457.2 904.9 L3463.2 899 L3469.2 893 L3475.2 887.3 L3481.1 881.8 L3487.1 876.2 L3493.1 870.7 L3499.1 865.1 L3505 859.4 L3511 853.6 L3517 847.8 L3523 842 L3528.9 836.2 L3534.9 830.4 L3540.9 824.6 L3546.9 818.8 L3552.8 813 L3558.8 807.2 L3564.8 801.4 L3570.8 795.6 L3576.7 789.7 L3582.7 783.8 L3588.7 778 L3594.7 772.1 L3600.6 766.2 L3606.6 760.3 L3612.6 754.6 L3618.6 749 L3624.5 743.5 L3630.5 737.9 L3636.5 732.4 L3642.5 726.8 L3648.4 721.2 L3654.4 715.7 L3660.4 710.1 L3666.4 704.6 L3672.3 699 L3678.3 693.4 L3684.3 687.9 L3690.3 682.3 L3696.2 676.7 L3702.2 671.1 L3708.2 665.5 L3714.2 659.9 L3720.1 654.4 L3726.1 649.1 L3732.1 643.9 L3738.1 638.6 L3744 633.3 L3750 628 M2212 758.2 L2225.5 762.4 L2239 766.6 L2252.5 770.9 L2266 775.1 L2279.5 779.4 L2293 783.7 L2306.5 788.4 L2319.9 793.1 L2333.4 797.6 L2346.9 801.8 L2360.4 806 L2373.9 812.9 L2387.4 820.6 L2400.9 828.3 L2414.4 835.6 L2427.9 843 L2441.4 848.4 L2454.9 853.1 L2468.4 857.7 L2481.9 862.1 L2495.4 866.9 L2508.9 871.7 L2522.4 876.6 L2535.8 882.8 L2549.3 889.7 L2562.8 896.6 L2576.3 901.4 L2589.8 905.4 L2603.3 909.5 L2616.8 916.2 L2630.3 922.8 L2643.8 927.9 L2657.3 932.3 L2670.8 936.7 L2684.3 941.2 L2697.8 946.7 L2711.3 952.1 L2724.8 957.6 L2738.3 962.2 L2751.7 966.5 L2765.2 970.7 L2778.7 973.5 L2792.2 974.8 L2805.7 976.2 L2819.2 977.6 L2832.7 977.8 L2846.2 977.8 L2859.7 977.9 L2873.2 978 L2886.7 978.4 L2900.2 978.7 L2913.7 980 L2927.2 982.4 L2940.7 984.7 L2954.2 987.1 L2967.6 989.5 L2981.1 991.3 L2994.6 992.7 L3008.1 994.2 L3021.6 995.6 L3035.1 997 L3048.6 998.2 L3062.1 998.7 L3075.6 999.1 L3089.1 999.5 L3102.6 1000 L3116.1 1000.5 L3129.6 1001.3 L3143.1 1002.2 L3156.6 1003 L3170.1 1003.8 L3183.5 1004.7 L3197 1005.9 L3210.5 1007.2 L3224 1008.4 L3237.5 1009.7 L3251 1010.8 L3264.5 1011.1 L3278 1011.4 M3278 1011.4 L3284 1006.8 L3289.9 1002.2 L3295.9 997.7 L3301.9 993.1 L3307.9 988.5 L3313.8 983.9 L3319.8 979.7 L3325.8 975.9 L3331.8 972.2 L3337.7 968.4 L3343.7 964.6 L3349.7 960.9 L3355.7 957.1 L3361.6 953.3 L3367.6 949.3 L3373.6 945.2 L3379.6 941 L3385.5 936.8 L3391.5 932.6 L3397.5 928.5 L3403.5 924.4 L3409.4 920.5 L3415.4 916.6 L3421.4 912.8 L3427.4 908.9 L3433.3 905 L3439.3 901.1 L3445.3 896.9 L3451.3 890.9 L3457.2 884.9 L3463.2 878.9 L3469.2 872.9 L3475.2 867.1 L3481.1 861.5 L3487.1 855.9 L3493.1 850.3 L3499.1 844.7 L3505 839 L3511 833.1 L3517 827.2 L3523 821.4 L3528.9 815.5 L3534.9 809.6 L3540.9 803.7 L3546.9 797.9 L3552.8 792 L3558.8 786.2 L3564.8 780.3 L3570.8 774.4 L3576.7 768.5 L3582.7 762.6 L3588.7 756.6 L3594.7 750.7 L3600.6 744.7 L3606.6 738.8 L3612.6 733 L3618.6 727.4 L3624.5 721.8 L3630.5 716.2 L3636.5 710.6 L3642.5 705 L3648.4 699.4 L3654.4 693.8 L3660.4 688.2 L3666.4 682.6 L3672.3 677 L3678.3 671.4 L3684.3 665.8 L3690.3 660.2 L3696.2 654.5 L3702.2 648.9 L3708.2 643.3 L3714.2 637.6 L3720.1 632.1 L3726.1 626.8 L3732.1 621.5 L3738.1 616.2 L3744 610.9 L3750 605.6 M2212 740.4 L2225.5 744.7 L2239 748.9 L2252.5 753.2 L2266 757.4 L2279.5 761.7 L2293 766.2 L2306.5 770.9 L2319.9 775.7 L2333.4 780.2 L2346.9 784.4 L2360.4 788.7 L2373.9 795.8 L2387.4 803.9 L2400.9 811.9 L2414.4 819.6 L2427.9 827.3 L2441.4 832.8 L2454.9 837.6 L2468.4 842.2 L2481.9 846.7 L2495.4 851.5 L2508.9 856.5 L2522.4 861.5 L2535.8 867.9 L2549.3 875.1 L2562.8 882.3 L2576.3 887.1 L2589.8 891.1 L2603.3 895.3 L2616.8 902.2 L2630.3 909.1 L2643.8 914.2 L2657.3 918.7 L2670.8 923.1 L2684.3 927.8 L2697.8 933.3 L2711.3 938.9 L2724.8 944.5 L2738.3 949.2 L2751.7 953.5 L2765.2 957.8 L2778.7 960.5 L2792.2 961.6 L2805.7 962.8 L2819.2 963.9 L2832.7 963.8 L2846.2 963.4 L2859.7 963.1 L2873.2 963 L2886.7 963 L2900.2 963 L2913.7 964 L2927.2 966.3 L2940.7 968.5 L2954.2 970.7 L2967.6 973 L2981.1 974.6 L2994.6 975.8 L3008.1 977 L3021.6 978.2 L3035.1 979.5 L3048.6 980.4 L3062.1 980.5 L3075.6 980.7 L3089.1 980.8 L3102.6 980.9 L3116.1 981.1 L3129.6 981.7 L3143.1 982.2 L3156.6 982.8 L3170.1 983.3 L3183.5 983.9 L3197 985 L3210.5 986 L3224 987 L3237.5 988 L3251 988.8 L3264.5 988.8 L3278 988.8 M3278 988.8 L3284 984.3 L3289.9 979.8 L3295.9 975.2 L3301.9 970.7 L3307.9 966.2 L3313.8 961.7 L3319.8 957.5 L3325.8 953.9 L3331.8 950.2 L3337.7 946.6 L3343.7 942.9 L3349.7 939.3 L3355.7 935.6 L3361.6 932 L3367.6 928.1 L3373.6 924 L3379.6 920 L3385.5 915.9 L3391.5 911.8 L3397.5 907.7 L3403.5 903.8 L3409.4 900 L3415.4 896.2 L3421.4 892.5 L3427.4 888.7 L3433.3 884.9 L3439.3 881.1 L3445.3 877.1 L3451.3 871 L3457.2 864.9 L3463.2 858.8 L3469.2 852.7 L3475.2 846.9 L3481.1 841.3 L3487.1 835.6 L3493.1 830 L3499.1 824.4 L3505 818.6 L3511 812.6 L3517 806.7 L3523 800.7 L3528.9 794.8 L3534.9 788.8 L3540.9 782.9 L3546.9 777 L3552.8 771.1 L3558.8 765.1 L3564.8 759.2 L3570.8 753.3 L3576.7 747.3 L3582.7 741.3 L3588.7 735.3 L3594.7 729.2 L3600.6 723.2 L3606.6 717.2 L3612.6 711.4 L3618.6 705.7 L3624.5 700.1 L3630.5 694.4 L3636.5 688.8 L3642.5 683.2 L3648.4 677.5 L3654.4 671.9 L3660.4 666.3 L3666.4 660.6 L3672.3 655 L3678.3 649.3 L3684.3 643.7 L3690.3 638 L3696.2 632.4 L3702.2 626.7 L3708.2 621 L3714.2 615.3 L3720.1 609.8 L3726.1 604.4 L3732.1 599.1 L3738.1 593.8 L3744 588.5 L3750 583.2 M2212 722.6 L2225.5 726.9 L2239 731.2 L2252.5 735.5 L2266 739.8 L2279.5 744.1 L2293 748.6 L2306.5 753.4 L2319.9 758.2 L2333.4 762.8 L2346.9 767.1 L2360.4 771.3 L2373.9 778.7 L2387.4 787.2 L2400.9 795.6 L2414.4 803.6 L2427.9 811.5 L2441.4 817.3 L2454.9 822.1 L2468.4 826.8 L2481.9 831.3 L2495.4 836.2 L2508.9 841.3 L2522.4 846.4 L2535.8 853 L2549.3 860.4 L2562.8 867.9 L2576.3 872.8 L2589.8 876.8 L2603.3 881 L2616.8 888.2 L2630.3 895.3 L2643.8 900.6 L2657.3 905.1 L2670.8 909.6 L2684.3 914.3 L2697.8 920 L2711.3 925.7 L2724.8 931.5 L2738.3 936.2 L2751.7 940.5 L2765.2 944.9 L2778.7 947.4 L2792.2 948.4 L2805.7 949.3 L2819.2 950.2 L2832.7 949.7 L2846.2 949.1 L2859.7 948.4 L2873.2 947.9 L2886.7 947.6 L2900.2 947.3 L2913.7 948.1 L2927.2 950.2 L2940.7 952.3 L2954.2 954.4 L2967.6 956.5 L2981.1 957.9 L2994.6 958.9 L3008.1 959.9 L3021.6 960.9 L3035.1 961.9 L3048.6 962.6 L3062.1 962.4 L3075.6 962.2 L3089.1 962.1 L3102.6 961.9 L3116.1 961.8 L3129.6 962 L3143.1 962.3 L3156.6 962.6 L3170.1 962.8 L3183.5 963.2 L3197 964 L3210.5 964.7 L3224 965.5 L3237.5 966.3 L3251 966.9 L3264.5 966.5 L3278 966.2 M3278 966.2 L3284 961.7 L3289.9 957.3 L3295.9 952.8 L3301.9 948.3 L3307.9 943.8 L3313.8 939.4 L3319.8 935.3 L3325.8 931.8 L3331.8 928.3 L3337.7 924.8 L3343.7 921.3 L3349.7 917.7 L3355.7 914.2 L3361.6 910.7 L3367.6 906.9 L3373.6 902.9 L3379.6 898.9 L3385.5 895 L3391.5 891 L3397.5 887 L3403.5 883.1 L3409.4 879.5 L3415.4 875.8 L3421.4 872.2 L3427.4 868.5 L3433.3 864.8 L3439.3 861.2 L3445.3 857.2 L3451.3 851.1 L3457.2 844.9 L3463.2 838.7 L3469.2 832.5 L3475.2 826.7 L3481.1 821 L3487.1 815.3 L3493.1 809.6 L3499.1 804 L3505 798.1 L3511 792.1 L3517 786.1 L3523 780.1 L3528.9 774.1 L3534.9 768.1 L3540.9 762.1 L3546.9 756.1 L3552.8 750.1 L3558.8 744.1 L3564.8 738.2 L3570.8 732.2 L3576.7 726.1 L3582.7 720 L3588.7 713.9 L3594.7 707.8 L3600.6 701.7 L3606.6 695.6 L3612.6 689.7 L3618.6 684.1 L3624.5 678.4 L3630.5 672.7 L3636.5 667 L3642.5 661.4 L3648.4 655.7 L3654.4 650 L3660.4 644.3 L3666.4 638.6 L3672.3 633 L3678.3 627.3 L3684.3 621.6 L3690.3 615.9 L3696.2 610.2 L3702.2 604.5 L3708.2 598.7 L3714.2 593 L3720.1 587.4 L3726.1 582.1 L3732.1 576.8 L3738.1 571.4 L3744 566.1 L3750 560.8 M2212 704.8 L2225.5 709.1 L2239 713.4 L2252.5 717.8 L2266 722.1 L2279.5 726.4 L2293 731 L2306.5 735.9 L2319.9 740.8 L2333.4 745.4 L2346.9 749.7 L2360.4 754 L2373.9 761.7 L2387.4 770.5 L2400.9 779.2 L2414.4 787.5 L2427.9 795.8 L2441.4 801.7 L2454.9 806.6 L2468.4 811.3 L2481.9 815.9 L2495.4 820.9 L2508.9 826.1 L2522.4 831.2 L2535.8 838.1 L2549.3 845.8 L2562.8 853.5 L2576.3 858.5 L2589.8 862.5 L2603.3 866.8 L2616.8 874.2 L2630.3 881.6 L2643.8 887 L2657.3 891.5 L2670.8 896 L2684.3 900.8 L2697.8 906.7 L2711.3 912.5 L2724.8 918.4 L2738.3 923.2 L2751.7 927.6 L2765.2 932 L2778.7 934.4 L2792.2 935.1 L2805.7 935.8 L2819.2 936.5 L2832.7 935.7 L2846.2 934.7 L2859.7 933.7 L2873.2 932.8 L2886.7 932.2 L2900.2 931.6 L2913.7 932.1 L2927.2 934.1 L2940.7 936.1 L2954.2 938 L2967.6 940 L2981.1 941.2 L2994.6 942 L3008.1 942.8 L3021.6 943.6 L3035.1 944.3 L3048.6 944.8 L3062.1 944.3 L3075.6 943.8 L3089.1 943.3 L3102.6 942.8 L3116.1 942.4 L3129.6 942.4 L3143.1 942.4 L3156.6 942.4 L3170.1 942.4 L3183.5 942.5 L3197 943 L3210.5 943.5 L3224 944.1 L3237.5 944.6 L3251 944.9 L3264.5 944.3 L3278 943.6 M3278 943.6 L3284 939.2 L3289.9 934.8 L3295.9 930.3 L3301.9 925.9 L3307.9 921.5 L3313.8 917.1 L3319.8 913.1 L3325.8 909.7 L3331.8 906.3 L3337.7 903 L3343.7 899.6 L3349.7 896.2 L3355.7 892.8 L3361.6 889.4 L3367.6 885.7 L3373.6 881.8 L3379.6 877.9 L3385.5 874 L3391.5 870.1 L3397.5 866.2 L3403.5 862.5 L3409.4 858.9 L3415.4 855.4 L3421.4 851.9 L3427.4 848.3 L3433.3 844.8 L3439.3 841.2 L3445.3 837.4 L3451.3 831.1 L3457.2 824.9 L3463.2 818.6 L3469.2 812.4 L3475.2 806.4 L3481.1 800.7 L3487.1 795 L3493.1 789.3 L3499.1 783.6 L3505 777.7 L3511 771.6 L3517 765.6 L3523 759.5 L3528.9 753.4 L3534.9 747.3 L3540.9 741.3 L3546.9 735.2 L3552.8 729.2 L3558.8 723.1 L3564.8 717.1 L3570.8 711 L3576.7 704.9 L3582.7 698.7 L3588.7 692.6 L3594.7 686.4 L3600.6 680.2 L3606.6 674.1 L3612.6 668.1 L3618.6 662.4 L3624.5 656.7 L3630.5 651 L3636.5 645.3 L3642.5 639.5 L3648.4 633.8 L3654.4 628.1 L3660.4 622.4 L3666.4 616.7 L3672.3 610.9 L3678.3 605.2 L3684.3 599.5 L3690.3 593.8 L3696.2 588 L3702.2 582.2 L3708.2 576.5 L3714.2 570.7 L3720.1 565.1 L3726.1 559.7 L3732.1 554.4 L3738.1 549.1 L3744 543.7 L3750 538.4 M2212 687 L2225.5 691.3 L2239 695.7 L2252.5 700 L2266 704.4 L2279.5 708.8 L2293 713.4 L2306.5 718.4 L2319.9 723.4 L2333.4 728 L2346.9 732.3 L2360.4 736.7 L2373.9 744.6 L2387.4 753.8 L2400.9 762.9 L2414.4 771.5 L2427.9 780.1 L2441.4 786.1 L2454.9 791.1 L2468.4 795.9 L2481.9 800.5 L2495.4 805.6 L2508.9 810.8 L2522.4 816.1 L2535.8 823.1 L2549.3 831.1 L2562.8 839.1 L2576.3 844.2 L2589.8 848.2 L2603.3 852.5 L2616.8 860.2 L2630.3 867.8 L2643.8 873.3 L2657.3 877.9 L2670.8 882.5 L2684.3 887.3 L2697.8 893.3 L2711.3 899.3 L2724.8 905.4 L2738.3 910.2 L2751.7 914.6 L2765.2 919.1 L2778.7 921.4 L2792.2 921.9 L2805.7 922.3 L2819.2 922.8 L2832.7 921.6 L2846.2 920.3 L2859.7 918.9 L2873.2 917.8 L2886.7 916.8 L2900.2 915.9 L2913.7 916.2 L2927.2 918 L2940.7 919.8 L2954.2 921.7 L2967.6 923.5 L2981.1 924.6 L2994.6 925.1 L3008.1 925.7 L3021.6 926.2 L3035.1 926.8 L3048.6 927 L3062.1 926.2 L3075.6 925.4 L3089.1 924.6 L3102.6 923.8 L3116.1 923.1 L3129.6 922.8 L3143.1 922.5 L3156.6 922.2 L3170.1 921.9 L3183.5 921.7 L3197 922 L3210.5 922.3 L3224 922.6 L3237.5 922.9 L3251 923 L3264.5 922 L3278 921 M3278 921 L3284 916.6 L3289.9 912.3 L3295.9 907.9 L3301.9 903.5 L3307.9 899.2 L3313.8 894.8 L3319.8 890.9 L3325.8 887.7 L3331.8 884.4 L3337.7 881.1 L3343.7 877.9 L3349.7 874.6 L3355.7 871.3 L3361.6 868.1 L3367.6 864.5 L3373.6 860.7 L3379.6 856.9 L3385.5 853.1 L3391.5 849.3 L3397.5 845.5 L3403.5 841.8 L3409.4 838.4 L3415.4 835 L3421.4 831.6 L3427.4 828.1 L3433.3 824.7 L3439.3 821.3 L3445.3 817.5 L3451.3 811.2 L3457.2 804.8 L3463.2 798.5 L3469.2 792.2 L3475.2 786.2 L3481.1 780.5 L3487.1 774.7 L3493.1 769 L3499.1 763.2 L3505 757.3 L3511 751.1 L3517 745 L3523 738.9 L3528.9 732.7 L3534.9 726.6 L3540.9 720.5 L3546.9 714.3 L3552.8 708.2 L3558.8 702.1 L3564.8 696 L3570.8 689.9 L3576.7 683.7 L3582.7 677.5 L3588.7 671.2 L3594.7 665 L3600.6 658.8 L3606.6 652.5 L3612.6 646.5 L3618.6 640.8 L3624.5 635 L3630.5 629.2 L3636.5 623.5 L3642.5 617.7 L3648.4 612 L3654.4 606.2 L3660.4 600.4 L3666.4 594.7 L3672.3 588.9 L3678.3 583.2 L3684.3 577.4 L3690.3 571.6 L3696.2 565.8 L3702.2 560 L3708.2 554.2 L3714.2 548.4 L3720.1 542.7 L3726.1 537.4 L3732.1 532 L3738.1 526.7 L3744 521.3 L3750 516 M2212 669.2 L2225.5 673.6 L2239 678 L2252.5 682.3 L2266 686.8 L2279.5 691.2 L2293 695.8 L2306.5 700.9 L2319.9 705.9 L2333.4 710.6 L2346.9 715 L2360.4 719.4 L2373.9 727.6 L2387.4 737.1 L2400.9 746.5 L2414.4 755.4 L2427.9 764.4 L2441.4 770.5 L2454.9 775.6 L2468.4 780.4 L2481.9 785.1 L2495.4 790.3 L2508.9 795.6 L2522.4 801 L2535.8 808.2 L2549.3 816.5 L2562.8 824.8 L2576.3 830 L2589.8 833.9 L2603.3 838.3 L2616.8 846.2 L2630.3 854.1 L2643.8 859.7 L2657.3 864.3 L2670.8 868.9 L2684.3 873.8 L2697.8 880 L2711.3 886.1 L2724.8 892.3 L2738.3 897.2 L2751.7 901.7 L2765.2 906.1 L2778.7 908.4 L2792.2 908.6 L2805.7 908.9 L2819.2 909.1 L2832.7 907.6 L2846.2 905.9 L2859.7 904.2 L2873.2 902.7 L2886.7 901.4 L2900.2 900.2 L2913.7 900.3 L2927.2 901.9 L2940.7 903.6 L2954.2 905.3 L2967.6 907 L2981.1 907.9 L2994.6 908.2 L3008.1 908.5 L3021.6 908.9 L3035.1 909.2 L3048.6 909.2 L3062.1 908 L3075.6 906.9 L3089.1 905.8 L3102.6 904.7 L3116.1 903.7 L3129.6 903.1 L3143.1 902.6 L3156.6 902 L3170.1 901.4 L3183.5 901 L3197 901 L3210.5 901.1 L3224 901.1 L3237.5 901.2 L3251 901 L3264.5 899.7 L3278 898.4 M3278 898.4 L3284 894.1 L3289.9 889.8 L3295.9 885.5 L3301.9 881.2 L3307.9 876.8 L3313.8 872.5 L3319.8 868.7 L3325.8 865.6 L3331.8 862.5 L3337.7 859.3 L3343.7 856.2 L3349.7 853 L3355.7 849.9 L3361.6 846.8 L3367.6 843.3 L3373.6 839.6 L3379.6 835.9 L3385.5 832.2 L3391.5 828.4 L3397.5 824.7 L3403.5 821.2 L3409.4 817.9 L3415.4 814.6 L3421.4 811.3 L3427.4 807.9 L3433.3 804.6 L3439.3 801.3 L3445.3 797.7 L3451.3 791.2 L3457.2 784.8 L3463.2 778.4 L3469.2 772 L3475.2 766 L3481.1 760.2 L3487.1 754.4 L3493.1 748.6 L3499.1 742.8 L3505 736.9 L3511 730.6 L3517 724.4 L3523 718.2 L3528.9 712 L3534.9 705.8 L3540.9 699.6 L3546.9 693.5 L3552.8 687.3 L3558.8 681.1 L3564.8 674.9 L3570.8 668.8 L3576.7 662.5 L3582.7 656.2 L3588.7 649.9 L3594.7 643.6 L3600.6 637.3 L3606.6 631 L3612.6 624.9 L3618.6 619.1 L3624.5 613.3 L3630.5 607.5 L3636.5 601.7 L3642.5 595.9 L3648.4 590.1 L3654.4 584.3 L3660.4 578.5 L3666.4 572.7 L3672.3 566.9 L3678.3 561.1 L3684.3 555.3 L3690.3 549.5 L3696.2 543.6 L3702.2 537.8 L3708.2 532 L3714.2 526.1 L3720.1 520.4 L3726.1 515 L3732.1 509.7 L3738.1 504.3 L3744 499 L3750 493.6 M2212 651.4 L2225.5 655.8 L2239 660.2 L2252.5 664.6 L2266 669.1 L2279.5 673.5 L2293 678.2 L2306.5 683.3 L2319.9 688.5 L2333.4 693.2 L2346.9 697.6 L2360.4 702 L2373.9 710.5 L2387.4 720.4 L2400.9 730.2 L2414.4 739.4 L2427.9 748.6 L2441.4 754.9 L2454.9 760.1 L2468.4 765 L2481.9 769.8 L2495.4 774.9 L2508.9 780.4 L2522.4 785.8 L2535.8 793.3 L2549.3 801.8 L2562.8 810.4 L2576.3 815.7 L2589.8 819.7 L2603.3 824 L2616.8 832.2 L2630.3 840.3 L2643.8 846 L2657.3 850.7 L2670.8 855.4 L2684.3 860.3 L2697.8 866.6 L2711.3 872.9 L2724.8 879.2 L2738.3 884.2 L2751.7 888.7 L2765.2 893.2 L2778.7 895.4 L2792.2 895.4 L2805.7 895.4 L2819.2 895.4 L2832.7 893.6 L2846.2 891.5 L2859.7 889.5 L2873.2 887.6 L2886.7 886 L2900.2 884.4 L2913.7 884.3 L2927.2 885.9 L2940.7 887.4 L2954.2 889 L2967.6 890.5 L2981.1 891.2 L2994.6 891.3 L3008.1 891.4 L3021.6 891.5 L3035.1 891.6 L3048.6 891.4 L3062.1 889.9 L3075.6 888.5 L3089.1 887.1 L3102.6 885.6 L3116.1 884.3 L3129.6 883.5 L3143.1 882.6 L3156.6 881.8 L3170.1 880.9 L3183.5 880.2 L3197 880 L3210.5 879.9 L3224 879.7 L3237.5 879.5 L3251 879.1 L3264.5 877.4 L3278 875.8 M3278 875.8 L3284 871.5 L3289.9 867.3 L3295.9 863 L3301.9 858.8 L3307.9 854.5 L3313.8 850.3 L3319.8 846.6 L3325.8 843.5 L3331.8 840.5 L3337.7 837.5 L3343.7 834.5 L3349.7 831.5 L3355.7 828.5 L3361.6 825.5 L3367.6 822.1 L3373.6 818.5 L3379.6 814.9 L3385.5 811.2 L3391.5 807.6 L3397.5 804 L3403.5 800.5 L3409.4 797.4 L3415.4 794.2 L3421.4 791 L3427.4 787.8 L3433.3 784.6 L3439.3 781.4 L3445.3 777.8 L3451.3 771.3 L3457.2 764.8 L3463.2 758.3 L3469.2 751.8 L3475.2 745.8 L3481.1 739.9 L3487.1 734.1 L3493.1 728.3 L3499.1 722.5 L3505 716.4 L3511 710.1 L3517 703.9 L3523 697.6 L3528.9 691.3 L3534.9 685.1 L3540.9 678.8 L3546.9 672.6 L3552.8 666.3 L3558.8 660.1 L3564.8 653.9 L3570.8 647.6 L3576.7 641.3 L3582.7 634.9 L3588.7 628.5 L3594.7 622.1 L3600.6 615.8 L3606.6 609.4 L3612.6 603.3 L3618.6 597.4 L3624.5 591.6 L3630.5 585.8 L3636.5 579.9 L3642.5 574.1 L3648.4 568.3 L3654.4 562.4 L3660.4 556.6 L3666.4 550.7 L3672.3 544.9 L3678.3 539.1 L3684.3 533.2 L3690.3 527.4 L3696.2 521.5 L3702.2 515.6 L3708.2 509.7 L3714.2 503.8 L3720.1 498.1 L3726.1 492.7 L3732.1 487.3 L3738.1 481.9 L3744 476.6 L3750 471.2 M2212 633.6 L2225.5 638 L2239 642.5 L2252.5 646.9 L2266 651.4 L2279.5 655.9 L2293 660.6 L2306.5 665.8 L2319.9 671 L2333.4 675.8 L2346.9 680.3 L2360.4 684.7 L2373.9 693.5 L2387.4 703.7 L2400.9 713.8 L2414.4 723.3 L2427.9 732.9 L2441.4 739.3 L2454.9 744.6 L2468.4 749.5 L2481.9 754.4 L2495.4 759.6 L2508.9 765.2 L2522.4 770.7 L2535.8 778.4 L2549.3 787.2 L2562.8 796 L2576.3 801.4 L2589.8 805.4 L2603.3 809.8 L2616.8 818.2 L2630.3 826.6 L2643.8 832.4 L2657.3 837.1 L2670.8 841.8 L2684.3 846.8 L2697.8 853.3 L2711.3 859.7 L2724.8 866.2 L2738.3 871.3 L2751.7 875.8 L2765.2 880.3 L2778.7 882.3 L2792.2 882.1 L2805.7 881.9 L2819.2 881.7 L2832.7 879.5 L2846.2 877.1 L2859.7 874.7 L2873.2 872.6 L2886.7 870.6 L2900.2 868.7 L2913.7 868.4 L2927.2 869.8 L2940.7 871.2 L2954.2 872.6 L2967.6 874 L2981.1 874.5 L2994.6 874.4 L3008.1 874.3 L3021.6 874.2 L3035.1 874.1 L3048.6 873.5 L3062.1 871.8 L3075.6 870.1 L3089.1 868.3 L3102.6 866.6 L3116.1 865 L3129.6 863.8 L3143.1 862.7 L3156.6 861.6 L3170.1 860.5 L3183.5 859.5 L3197 859.1 L3210.5 858.6 L3224 858.2 L3237.5 857.8 L3251 857.1 L3264.5 855.2 L3278 853.2 M3278 853.2 L3284 849 L3289.9 844.8 L3295.9 840.6 L3301.9 836.4 L3307.9 832.2 L3313.8 828 L3319.8 824.4 L3325.8 821.5 L3331.8 818.6 L3337.7 815.7 L3343.7 812.8 L3349.7 809.9 L3355.7 807 L3361.6 804.2 L3367.6 800.9 L3373.6 797.4 L3379.6 793.8 L3385.5 790.3 L3391.5 786.8 L3397.5 783.2 L3403.5 779.9 L3409.4 776.8 L3415.4 773.7 L3421.4 770.7 L3427.4 767.6 L3433.3 764.5 L3439.3 761.4 L3445.3 757.9 L3451.3 751.4 L3457.2 744.8 L3463.2 738.2 L3469.2 731.7 L3475.2 725.5 L3481.1 719.7 L3487.1 713.8 L3493.1 707.9 L3499.1 702.1 L3505 696 L3511 689.7 L3517 683.3 L3523 677 L3528.9 670.6 L3534.9 664.3 L3540.9 658 L3546.9 651.7 L3552.8 645.4 L3558.8 639.1 L3564.8 632.8 L3570.8 626.5 L3576.7 620.1 L3582.7 613.6 L3588.7 607.2 L3594.7 600.7 L3600.6 594.3 L3606.6 587.8 L3612.6 581.7 L3618.6 575.8 L3624.5 569.9 L3630.5 564 L3636.5 558.1 L3642.5 552.3 L3648.4 546.4 L3654.4 540.5 L3660.4 534.6 L3666.4 528.8 L3672.3 522.9 L3678.3 517 L3684.3 511.1 L3690.3 505.2 L3696.2 499.3 L3702.2 493.4 L3708.2 487.4 L3714.2 481.5 L3720.1 475.7 L3726.1 470.3 L3732.1 465 L3738.1 459.6 L3744 454.2 L3750 448.8 M2212 615.8 L2225.5 620.3 L2239 624.7 L2252.5 629.2 L2266 633.7 L2279.5 638.3 L2293 643 L2306.5 648.3 L2319.9 653.6 L2333.4 658.4 L2346.9 662.9 L2360.4 667.4 L2373.9 676.4 L2387.4 687 L2400.9 697.4 L2414.4 707.3 L2427.9 717.2 L2441.4 723.7 L2454.9 729.1 L2468.4 734.1 L2481.9 739 L2495.4 744.3 L2508.9 749.9 L2522.4 755.6 L2535.8 763.5 L2549.3 772.6 L2562.8 781.7 L2576.3 787.1 L2589.8 791.1 L2603.3 795.5 L2616.8 804.2 L2630.3 812.8 L2643.8 818.7 L2657.3 823.5 L2670.8 828.3 L2684.3 833.4 L2697.8 840 L2711.3 846.5 L2724.8 853.1 L2738.3 858.3 L2751.7 862.8 L2765.2 867.4 L2778.7 869.3 L2792.2 868.9 L2805.7 868.4 L2819.2 868 L2832.7 865.5 L2846.2 862.8 L2859.7 860 L2873.2 857.5 L2886.7 855.3 L2900.2 853 L2913.7 852.4 L2927.2 853.7 L2940.7 855 L2954.2 856.2 L2967.6 857.5 L2981.1 857.8 L2994.6 857.5 L3008.1 857.2 L3021.6 856.8 L3035.1 856.5 L3048.6 855.7 L3062.1 853.7 L3075.6 851.6 L3089.1 849.6 L3102.6 847.5 L3116.1 845.6 L3129.6 844.2 L3143.1 842.8 L3156.6 841.4 L3170.1 840 L3183.5 838.7 L3197 838.1 L3210.5 837.4 L3224 836.8 L3237.5 836.1 L3251 835.2 L3264.5 832.9 L3278 830.6 M3278 830.6 L3284 826.4 L3289.9 822.3 L3295.9 818.1 L3301.9 814 L3307.9 809.8 L3313.8 805.7 L3319.8 802.2 L3325.8 799.4 L3331.8 796.6 L3337.7 793.9 L3343.7 791.1 L3349.7 788.4 L3355.7 785.6 L3361.6 782.8 L3367.6 779.7 L3373.6 776.3 L3379.6 772.8 L3385.5 769.4 L3391.5 765.9 L3397.5 762.5 L3403.5 759.3 L3409.4 756.3 L3415.4 753.3 L3421.4 750.4 L3427.4 747.4 L3433.3 744.4 L3439.3 741.5 L3445.3 738.1 L3451.3 731.4 L3457.2 724.8 L3463.2 718.2 L3469.2 711.5 L3475.2 705.3 L3481.1 699.4 L3487.1 693.5 L3493.1 687.6 L3499.1 681.7 L3505 675.6 L3511 669.2 L3517 662.8 L3523 656.4 L3528.9 649.9 L3534.9 643.6 L3540.9 637.2 L3546.9 630.8 L3552.8 624.4 L3558.8 618.1 L3564.8 611.7 L3570.8 605.3 L3576.7 598.9 L3582.7 592.3 L3588.7 585.8 L3594.7 579.3 L3600.6 572.8 L3606.6 566.3 L3612.6 560 L3618.6 554.1 L3624.5 548.2 L3630.5 542.3 L3636.5 536.4 L3642.5 530.5 L3648.4 524.5 L3654.4 518.6 L3660.4 512.7 L3666.4 506.8 L3672.3 500.9 L3678.3 495 L3684.3 489 L3690.3 483.1 L3696.2 477.1 L3702.2 471.1 L3708.2 465.2 L3714.2 459.2 L3720.1 453.4 L3726.1 448 L3732.1 442.6 L3738.1 437.2 L3744 431.8 L3750 426.4" fill="none" stroke="#000" stroke-width="1.9"/>
<g clip-path="url(#ft)"><path d="M2296 472 L2356 440 L2431 446 L2500 456 L2570 468 L2639 494 L2703 478 L2732 473 L2755 494 L2778 511" stroke="#000" stroke-width="5" stroke-opacity="0.7" fill="none" stroke-linejoin="round" stroke-linecap="round"/><path d="M2320 440 L2431 430 L2520 436 L2600 452 L2690 468" stroke="#000" stroke-width="22" stroke-opacity="0.28" fill="none" stroke-linejoin="round" stroke-linecap="round"/><path d="M2400 400 L2500 405 L2600 420" stroke="#000" stroke-width="30" stroke-opacity="0.12" fill="none" stroke-linejoin="round" stroke-linecap="round"/><path d="M2790 182 L2830 215 L2880 252 L2930 282 L2990 318" stroke="#000" stroke-width="12" stroke-opacity="0.35" fill="none" stroke-linejoin="round" stroke-linecap="round"/><path d="M2727 458 L2738 367 L2773 316 L2812 289 L2850 266 L2885 254" stroke="#000" stroke-width="8" stroke-opacity="0.25" fill="none" stroke-linejoin="round" stroke-linecap="round"/><path d="M2952 396 L3036 388 L3082 417 L3128 423 L3160 430" stroke="#000" stroke-width="8" stroke-opacity="0.45" fill="none" stroke-linejoin="round" stroke-linecap="round"/><path d="M2880 702 L2940 698 L3018 621" stroke="#000" stroke-width="4" stroke-opacity="0.6" fill="none" stroke-linejoin="round" stroke-linecap="round"/><path d="M3150 576 L3207 562 L3292 548 L3386 543 L3481 557 L3551 586" stroke="#000" stroke-width="10" stroke-opacity="0.35" fill="none" stroke-linejoin="round" stroke-linecap="round"/><path d="M3150 576 L3207 562 L3292 548 L3386 543 L3481 557 L3551 586" stroke="#000" stroke-width="3" stroke-opacity="0.6" fill="none" stroke-linejoin="round" stroke-linecap="round"/><path d="M3105 792 L3170 788 L3244 793 L3280 806" stroke="#000" stroke-width="24" stroke-opacity="0.38" fill="none" stroke-linejoin="round" stroke-linecap="round"/><path d="M3280 800 L3340 772 L3400 748 L3450 724" stroke="#000" stroke-width="20" stroke-opacity="0.32" fill="none" stroke-linejoin="round" stroke-linecap="round"/><path d="M3090 720 L3130 745 L3160 770" stroke="#000" stroke-width="8" stroke-opacity="0.35" fill="none" stroke-linejoin="round" stroke-linecap="round"/><path d="M2700 478 L2858 700 M2705 478.9 L2861.6 700.3 M2710 479.8 L2865.1 700.7 M2715 480.7 L2868.7 701 M2720 481.6 L2872.2 701.3 M2725 482.4 L2875.8 701.7 M2730 483.3 L2879.3 702 M2735 484.2 L2882.9 702.3 M2740 485.1 L2886.4 702.7 M2745 486 L2890 703 M2925 698 L3120 452 M2927.5 698.4 L3123.5 453.5 M2930 698.8 L3127 455 M2932.5 699.1 L3130.5 456.5 M2935 699.5 L3134 458 M2937.5 699.9 L3137.5 459.5 M2940 700.2 L3141 461 M2942.5 700.6 L3144.5 462.5 M2945 701 L3148 464 M2960 690 L3200 490 M2963 690.4 L3204 492 M2966 690.8 L3208 494 M2969 691.2 L3212 496 M2972 691.6 L3216 498 M2975 692 L3220 500 M2880 396 L3020 376 M2900 395 L3040 377 M2920 394 L3060 378 M2940 393 L3080 379 M2960 392 L3100 380" stroke="#000" stroke-width="1.4" fill="none"/></g>
<g clip-path="url(#fl)"><path d="M2213 688 L2290 715 L2364 741" stroke="#000" stroke-width="6" stroke-opacity="0.8" fill="none"/><path d="M2364 741 L2432 770 M2364 741 L2432 800 M2364 741 L2432 830 M2364 741 L2432 860 M2364 741 L2432 890 M2364 741 L2432 920 M2364 741 L2432 950 M2364 741 L2432 975" stroke="#000" stroke-width="1.6" fill="none"/></g>
<g clip-path="url(#fl)"><path d="M2212 954 L3278 1260 L3278 1232 L2212 926 Z" fill="#000" fill-opacity="0.12"/><path d="M2212 954 L3278 1260 L3278 1246 L2212 940 Z" fill="#000" fill-opacity="0.15"/><path d="M2212 954 L3278 1260 L3278 1254 L2212 948 Z" fill="#000" fill-opacity="0.2"/></g>
<g clip-path="url(#fr)"><path d="M3278 1260 L3750 852 L3750 824 L3278 1232 Z" fill="#000" fill-opacity="0.12"/><path d="M3278 1260 L3750 852 L3750 838 L3278 1246 Z" fill="#000" fill-opacity="0.15"/><path d="M3278 1260 L3750 852 L3750 846 L3278 1254 Z" fill="#000" fill-opacity="0.2"/></g>
<g font-family="Liberation Serif" fill="#000"><text x="584" y="1489" font-size="86" letter-spacing="-1.5">(<tspan font-weight="bold">a</tspan>)</text><text x="2761" y="1489" font-size="86" letter-spacing="0.5">(<tspan font-weight="bold">b</tspan>)</text></g>
</svg>
</body></html>
